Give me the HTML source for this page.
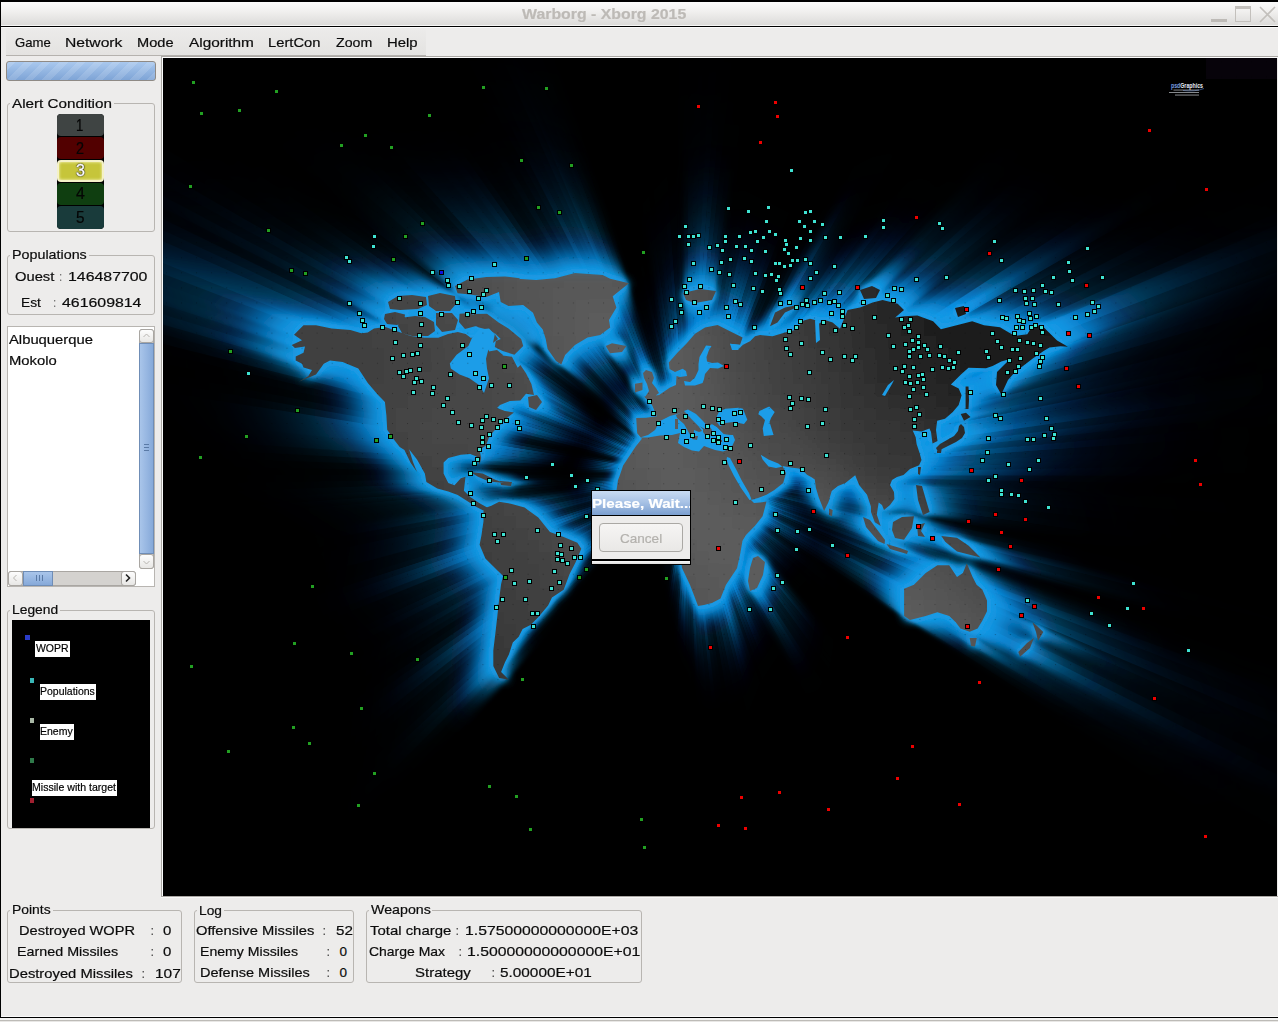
<!DOCTYPE html><html><head><meta charset="utf-8"><style>
html,body{margin:0;padding:0}
body{width:1278px;height:1022px;overflow:hidden;position:relative;background:#edeceb;font-family:"Liberation Sans",sans-serif}
.t{position:absolute;white-space:pre;line-height:1;transform-origin:0 0;-webkit-text-stroke:0.2px currentColor}
</style></head><body>
<div style="position:absolute;left:0px;top:0px;width:1278px;height:2px;background:#000"></div>
<div style="position:absolute;left:0px;top:0px;width:1px;height:1022px;background:#000"></div>
<div style="position:absolute;left:1px;top:2px;width:1277px;height:23px;background:linear-gradient(#fbfbfb,#f1f0ef 40%,#dcdbd9)"></div>
<div style="position:absolute;left:1px;top:25px;width:1277px;height:1px;background:#f6f6f5"></div>
<div style="position:absolute;left:1px;top:26px;width:1277px;height:1px;background:#000"></div>
<div style="position:absolute;left:1px;top:27px;width:1277px;height:1px;background:#fbfbfb"></div>
<div class="t" style="left:521.90px;top:7.45px;font-size:14px;color:#bdbab6;font-weight:bold;transform:scaleX(1.1331);">Warborg - Xborg 2015</div>
<div style="position:absolute;left:1211px;top:19px;width:16px;height:3px;background:#bdbab6"></div>
<div style="position:absolute;left:1235px;top:6px;width:16px;height:16px;box-sizing:border-box;border:1px solid #c3c0bc;border-top:3px solid #c3c0bc"></div>
<svg style="position:absolute;left:1259px;top:6px" width="17" height="17"><path d="M1 1L16 16M16 1L1 16" stroke="#c3c0bc" stroke-width="1.6"/></svg>
<div style="position:absolute;left:6px;top:28px;width:420px;height:27px;background:linear-gradient(#ecebea,#e4e3e1)"></div>
<div style="position:absolute;left:6px;top:55px;width:420px;height:1px;background:#b5b2ae"></div>
<div style="position:absolute;left:161px;top:56px;width:1117px;height:1px;background:#aba8a4"></div>
<div style="position:absolute;left:161px;top:56px;width:1px;height:841px;background:#aba8a4"></div>
<div style="position:absolute;left:162px;top:57px;width:1116px;height:1px;background:#fcfcfc"></div>
<div style="position:absolute;left:162px;top:57px;width:1px;height:839px;background:#fcfcfc"></div>
<div style="position:absolute;left:161px;top:896px;width:1117px;height:1px;background:#aba8a4"></div>
<div style="position:absolute;left:161px;top:897px;width:1117px;height:1px;background:#f8f8f7"></div>
<div class="t" style="left:14.60px;top:35.97px;font-size:13.5px;color:#0c0c0c;transform:scaleX(0.9714);">Game</div>
<div class="t" style="left:65.10px;top:35.97px;font-size:13.5px;color:#0c0c0c;transform:scaleX(1.1587);">Network</div>
<div class="t" style="left:136.90px;top:35.97px;font-size:13.5px;color:#0c0c0c;transform:scaleX(1.0815);">Mode</div>
<div class="t" style="left:188.50px;top:35.97px;font-size:13.5px;color:#0c0c0c;transform:scaleX(1.1386);">Algorithm</div>
<div class="t" style="left:268.30px;top:35.97px;font-size:13.5px;color:#0c0c0c;transform:scaleX(1.0917);">LertCon</div>
<div class="t" style="left:336.20px;top:35.97px;font-size:13.5px;color:#0c0c0c;transform:scaleX(1.0493);">Zoom</div>
<div class="t" style="left:386.90px;top:35.97px;font-size:13.5px;color:#0c0c0c;transform:scaleX(1.1027);">Help</div>
<div style="position:absolute;left:6px;top:61px;width:150px;height:20px;box-sizing:border-box;border:1px solid #8f8a85;border-radius:3px;background:repeating-linear-gradient(135deg,rgba(255,255,255,0.13) 0 6.2px,rgba(255,255,255,0) 6.2px 12.4px),linear-gradient(#a9c8ee,#7ea4d6)"></div>
<div style="position:absolute;left:6.5px;top:102.5px;width:148.5px;height:129.5px;box-sizing:border-box;border:1px solid #b8b5b1;border-radius:3px"></div>
<div style="position:absolute;left:9.7px;top:101.5px;width:103.89999999999999px;height:3px;background:#edeceb"></div>
<div class="t" style="left:11.70px;top:96.57px;font-size:13.5px;color:#0c0c0c;transform:scaleX(1.1288);">Alert Condition</div>
<div style="position:absolute;left:57px;top:113.5px;width:47px;height:115.5px;background:#000;border-radius:4px"></div>
<div style="position:absolute;left:57px;top:113.8px;width:47px;height:22.39999999999999px;background:#3f4443;border-radius:4px"></div>
<div class="t" style="left:76.40px;top:117.56px;font-size:16px;color:#050505;transform:scaleX(0.8225);">1</div>
<div style="position:absolute;left:57px;top:137.2px;width:47px;height:21.80000000000001px;background:#520000;border-radius:4px"></div>
<div class="t" style="left:76.40px;top:140.56px;font-size:16px;color:#050505;transform:scaleX(0.9014);">2</div>
<div style="position:absolute;left:57px;top:160.2px;width:47px;height:22.0px;box-sizing:border-box;background:#c6c53a;border:2px solid #f4f1c8;border-radius:4px;box-shadow:inset 0 0 3px #fffbd0"></div>
<div class="t" style="left:76.00px;top:163.06px;font-size:16px;color:#fff;transform:scaleX(1.0028);text-shadow:0 0 1px #000,0 0 1px #000,0 0 2px #000;-webkit-text-stroke:0.3px #fff;">3</div>
<div style="position:absolute;left:57px;top:183.2px;width:47px;height:21.5px;background:#0f3e10;border-radius:4px"></div>
<div class="t" style="left:75.60px;top:185.86px;font-size:16px;color:#050505;transform:scaleX(0.9915);">4</div>
<div style="position:absolute;left:57px;top:205.7px;width:47px;height:23.0px;background:#193b3b;border-radius:4px"></div>
<div class="t" style="left:76.40px;top:210.06px;font-size:16px;color:#050505;transform:scaleX(0.9577);">5</div>
<div style="position:absolute;left:6.5px;top:254.5px;width:148px;height:60px;box-sizing:border-box;border:1px solid #b8b5b1;border-radius:3px"></div>
<div style="position:absolute;left:10.3px;top:253.5px;width:78.7px;height:3px;background:#edeceb"></div>
<div class="t" style="left:12.30px;top:247.77px;font-size:13.5px;color:#0c0c0c;transform:scaleX(1.0596);">Populations</div>
<div class="t" style="left:14.80px;top:270.37px;font-size:13.5px;color:#0c0c0c;transform:scaleX(1.0917);">Ouest</div>
<div class="t" style="left:59.60px;top:270.37px;font-size:13.5px;color:#0c0c0c;transform:scaleX(0.4267);">:</div>
<div class="t" style="left:67.80px;top:270.37px;font-size:13.5px;color:#0c0c0c;transform:scaleX(1.1756);">146487700</div>
<div class="t" style="left:20.50px;top:295.97px;font-size:13.5px;color:#0c0c0c;transform:scaleX(1.0205);">Est</div>
<div class="t" style="left:54.10px;top:295.97px;font-size:13.5px;color:#0c0c0c;transform:scaleX(0.4267);">:</div>
<div class="t" style="left:61.60px;top:295.97px;font-size:13.5px;color:#0c0c0c;transform:scaleX(1.1756);">461609814</div>
<div style="position:absolute;left:6.5px;top:326px;width:148px;height:261px;box-sizing:border-box;border:1px solid #b8b5b1;background:#fff"></div>
<div class="t" style="left:8.50px;top:332.97px;font-size:13.5px;color:#0c0c0c;transform:scaleX(1.0962);">Albuquerque</div>
<div class="t" style="left:8.50px;top:354.17px;font-size:13.5px;color:#0c0c0c;transform:scaleX(1.0966);">Mokolo</div>
<div style="position:absolute;left:139px;top:328.5px;width:15px;height:240px;box-sizing:border-box;border:1px solid #a9a6a2;border-radius:3px;background:#d4d2cf"></div>
<div style="position:absolute;left:139px;top:328.5px;width:15px;height:14px;box-sizing:border-box;border:1px solid #a9a6a2;border-radius:3px;background:linear-gradient(#fdfdfd,#e8e7e5)"></div>
<div style="position:absolute;left:139px;top:554px;width:15px;height:14.5px;box-sizing:border-box;border:1px solid #a9a6a2;border-radius:3px;background:linear-gradient(#fdfdfd,#e8e7e5)"></div>
<div style="position:absolute;left:139px;top:342.5px;width:15px;height:211.5px;box-sizing:border-box;border:1px solid #6f8db6;background:linear-gradient(90deg,#a9c5ea,#86a9d9)"></div>
<svg style="position:absolute;left:139px;top:328px" width="15" height="241"><path d="M4.5 9L7.5 6L10.5 9" stroke="#b9b6b2" fill="none" stroke-width="1"/><path d="M4.5 233L7.5 236L10.5 233" stroke="#b9b6b2" fill="none" stroke-width="1"/><path d="M5 116.5H10M5 119.5H10M5 122.5H10" stroke="#5a7aa6" stroke-width="1"/></svg>
<div style="position:absolute;left:8px;top:570.5px;width:128px;height:15.5px;box-sizing:border-box;border:1px solid #a9a6a2;border-radius:3px;background:#d4d2cf"></div>
<div style="position:absolute;left:8px;top:570.5px;width:14.5px;height:15.5px;box-sizing:border-box;border:1px solid #a9a6a2;border-radius:3px;background:linear-gradient(#fdfdfd,#e8e7e5)"></div>
<div style="position:absolute;left:121px;top:570.5px;width:15px;height:15.5px;box-sizing:border-box;border:1px solid #a9a6a2;border-radius:3px;background:linear-gradient(#fdfdfd,#e8e7e5)"></div>
<div style="position:absolute;left:22.5px;top:570.5px;width:30px;height:15.5px;box-sizing:border-box;border:1px solid #6f8db6;background:linear-gradient(#a9c5ea,#86a9d9)"></div>
<svg style="position:absolute;left:8px;top:570px" width="128" height="16"><path d="M8.5 5L5.5 8L8.5 11" stroke="#b9b6b2" fill="none" stroke-width="1"/><path d="M118 4.5L121.5 8L118 11.5" stroke="#222" fill="none" stroke-width="1.6"/><path d="M28.5 5V11M31.5 5V11M34.5 5V11" stroke="#5a7aa6" stroke-width="1"/></svg>
<div style="position:absolute;left:6.5px;top:609.5px;width:148px;height:219px;box-sizing:border-box;border:1px solid #b8b5b1;border-radius:3px"></div>
<div style="position:absolute;left:10.3px;top:608.5px;width:50.099999999999994px;height:3px;background:#edeceb"></div>
<div class="t" style="left:12.30px;top:603.37px;font-size:13.5px;color:#0c0c0c;transform:scaleX(1.0244);">Legend</div>
<div style="position:absolute;left:12px;top:619.5px;width:138px;height:208px;background:#000"></div>
<div style="position:absolute;left:25px;top:635px;width:4.5px;height:4.5px;background:#2a3cc8"></div>
<div style="position:absolute;left:35px;top:640.5px;width:34.5px;height:16px;background:#fff"></div>
<div class="t" style="left:36.00px;top:643.47px;font-size:11.5px;color:#000;transform:scaleX(0.9091);">WOPR</div>
<div style="position:absolute;left:29.5px;top:678px;width:4px;height:4.5px;background:#3ab7b7"></div>
<div style="position:absolute;left:39.5px;top:683.5px;width:56px;height:16px;background:#fff"></div>
<div class="t" style="left:40.20px;top:686.47px;font-size:11.5px;color:#000;transform:scaleX(0.9114);">Populations</div>
<div style="position:absolute;left:29.5px;top:718px;width:4px;height:4.5px;background:#a9b8a6"></div>
<div style="position:absolute;left:39.5px;top:723.5px;width:34px;height:16px;background:#fff"></div>
<div class="t" style="left:40.20px;top:726.47px;font-size:11.5px;color:#000;transform:scaleX(0.9119);">Enemy</div>
<div style="position:absolute;left:29.5px;top:758px;width:4px;height:4.5px;background:#2f7a4a"></div>
<div style="position:absolute;left:31.5px;top:779.5px;width:85px;height:16px;background:#fff"></div>
<div class="t" style="left:32.00px;top:782.47px;font-size:11.5px;color:#000;transform:scaleX(0.9193);">Missile with target</div>
<div style="position:absolute;left:29.5px;top:798px;width:4px;height:4.5px;background:#a02030"></div>
<div style="position:absolute;left:1px;top:1016px;width:1277px;height:1px;background:#fafafa"></div>
<div style="position:absolute;left:0px;top:1017px;width:1278px;height:1px;background:#000"></div>
<div style="position:absolute;left:0px;top:1018px;width:1278px;height:2px;background:#f4f4f3"></div>
<div style="position:absolute;left:0px;top:1020px;width:1278px;height:1px;background:#bdbbb7"></div>
<div style="position:absolute;left:0px;top:1021px;width:1278px;height:1px;background:#e8e7e5"></div>
<div style="position:absolute;left:6.5px;top:909.5px;width:175px;height:73px;box-sizing:border-box;border:1px solid #b8b5b1;border-radius:3px"></div>
<div style="position:absolute;left:10.4px;top:908.5px;width:42.6px;height:3px;background:#edeceb"></div>
<div class="t" style="left:12.40px;top:903.17px;font-size:13.5px;color:#0c0c0c;transform:scaleX(1.0293);">Points</div>
<div class="t" style="left:18.50px;top:923.77px;font-size:13.5px;color:#0c0c0c;transform:scaleX(1.0807);">Destroyed WOPR</div>
<div class="t" style="left:151.30px;top:923.77px;font-size:13.5px;color:#0c0c0c;transform:scaleX(0.6400);">:</div>
<div class="t" style="left:163.20px;top:923.77px;font-size:13.5px;color:#0c0c0c;transform:scaleX(1.1067);">0</div>
<div class="t" style="left:17.10px;top:945.17px;font-size:13.5px;color:#0c0c0c;transform:scaleX(1.0604);">Earned Missiles</div>
<div class="t" style="left:151.30px;top:945.17px;font-size:13.5px;color:#0c0c0c;transform:scaleX(0.6400);">:</div>
<div class="t" style="left:163.20px;top:945.17px;font-size:13.5px;color:#0c0c0c;transform:scaleX(1.1067);">0</div>
<div class="t" style="left:9.20px;top:966.57px;font-size:13.5px;color:#0c0c0c;transform:scaleX(1.0940);">Destroyed Missiles</div>
<div class="t" style="left:142.40px;top:966.57px;font-size:13.5px;color:#0c0c0c;transform:scaleX(0.6400);">:</div>
<div class="t" style="left:154.50px;top:966.57px;font-size:13.5px;color:#0c0c0c;transform:scaleX(1.1422);">107</div>
<div style="position:absolute;left:193.5px;top:909.5px;width:160px;height:73px;box-sizing:border-box;border:1px solid #b8b5b1;border-radius:3px"></div>
<div style="position:absolute;left:196.8px;top:908.5px;width:26.899999999999977px;height:3px;background:#edeceb"></div>
<div class="t" style="left:198.80px;top:903.57px;font-size:13.5px;color:#0c0c0c;transform:scaleX(1.0178);">Log</div>
<div class="t" style="left:196.00px;top:924.07px;font-size:13.5px;color:#0c0c0c;transform:scaleX(1.0903);">Offensive Missiles</div>
<div class="t" style="left:323.20px;top:924.07px;font-size:13.5px;color:#0c0c0c;transform:scaleX(0.6400);">:</div>
<div class="t" style="left:335.50px;top:924.07px;font-size:13.5px;color:#0c0c0c;transform:scaleX(1.1267);">52</div>
<div class="t" style="left:200.30px;top:944.97px;font-size:13.5px;color:#0c0c0c;transform:scaleX(1.0453);">Enemy Missiles</div>
<div class="t" style="left:327.40px;top:944.97px;font-size:13.5px;color:#0c0c0c;transform:scaleX(0.6400);">:</div>
<div class="t" style="left:339.60px;top:944.97px;font-size:13.5px;color:#0c0c0c;transform:scaleX(1.0000);">0</div>
<div class="t" style="left:200.30px;top:965.97px;font-size:13.5px;color:#0c0c0c;transform:scaleX(1.0755);">Defense Missiles</div>
<div class="t" style="left:327.40px;top:965.97px;font-size:13.5px;color:#0c0c0c;transform:scaleX(0.6400);">:</div>
<div class="t" style="left:339.60px;top:965.97px;font-size:13.5px;color:#0c0c0c;transform:scaleX(1.0000);">0</div>
<div style="position:absolute;left:365.5px;top:909.5px;width:276px;height:73px;box-sizing:border-box;border:1px solid #b8b5b1;border-radius:3px"></div>
<div style="position:absolute;left:368.6px;top:908.5px;width:63.799999999999955px;height:3px;background:#edeceb"></div>
<div class="t" style="left:370.60px;top:903.47px;font-size:13.5px;color:#0c0c0c;transform:scaleX(1.0537);">Weapons</div>
<div class="t" style="left:369.90px;top:924.17px;font-size:13.5px;color:#0c0c0c;transform:scaleX(1.1048);">Total charge</div>
<div class="t" style="left:456.40px;top:924.17px;font-size:13.5px;color:#0c0c0c;transform:scaleX(0.6400);">:</div>
<div class="t" style="left:464.50px;top:924.17px;font-size:13.5px;color:#0c0c0c;transform:scaleX(1.1683);">1.57500000000000E+03</div>
<div class="t" style="left:368.50px;top:944.87px;font-size:13.5px;color:#0c0c0c;transform:scaleX(1.0340);">Charge Max</div>
<div class="t" style="left:458.80px;top:944.87px;font-size:13.5px;color:#0c0c0c;transform:scaleX(0.6400);">:</div>
<div class="t" style="left:466.80px;top:944.87px;font-size:13.5px;color:#0c0c0c;transform:scaleX(1.1683);">1.50000000000000E+01</div>
<div class="t" style="left:414.50px;top:965.77px;font-size:13.5px;color:#0c0c0c;transform:scaleX(1.1104);">Strategy</div>
<div class="t" style="left:491.60px;top:965.77px;font-size:13.5px;color:#0c0c0c;transform:scaleX(0.6400);">:</div>
<div class="t" style="left:500.10px;top:965.77px;font-size:13.5px;color:#0c0c0c;transform:scaleX(1.1368);">5.00000E+01</div>
<svg style="position:absolute;left:163px;top:58px" width="1114" height="838" viewBox="163 58 1114 838">
<defs>
<path id="L" d="M303.5,325.3 316.0,325.3 331.7,328.5 350.4,330.0 361.4,333.2 367.7,332.4 374.0,328.5 385.4,327.1 399.1,332.0 410.9,335.9 424.6,337.8 438.3,337.8 448.0,334.0 457.8,332.0 465.7,334.0 471.0,338.0 478.0,334.0 485.0,331.0 494.0,333.0 498.0,339.0 489.0,346.0 489.0,356.7 501.0,355.3 512.0,356.7 517.7,367.7 520.4,365.0 526.0,373.2 531.4,384.1 534.0,395.0 526.0,393.7 520.4,400.5 510.0,401.0 500.0,405.0 497.0,408.0 505.0,411.0 514.0,412.5 507.8,417.2 500.0,425.0 493.7,431.3 489.0,437.6 485.9,445.4 479.6,450.1 481.2,457.9 479.6,465.0 476.5,456.4 470.2,454.0 460.8,454.8 448.3,457.9 443.6,462.6 443.6,473.6 448.3,483.0 454.5,485.3 460.8,478.3 465.5,476.7 463.9,490.8 470.2,497.0 479.6,503.3 489.0,508.5 492.0,507.0 493.0,511.0 484.3,511.0 476.5,507.0 467.1,501.0 457.7,495.0 448.3,491.5 437.3,488.5 426.4,482.0 424.8,473.6 417.0,459.5 409.1,449.3 413.0,462.0 417.0,472.0 410.7,463.0 404.4,450.1 399.7,447.0 393.5,439.1 387.2,429.7 386.4,415.7 384.9,402.0 377.6,394.6 367.8,382.9 358.3,368.4 342.6,362.1 330.0,360.5 323.8,363.7 316.0,374.6 298.8,381.7 308.2,376.2 312.0,370.0 303.5,367.6 302.0,363.7 295.7,360.5 295.7,356.6 303.5,352.7 305.0,346.5 294.9,348.0 291.7,344.9 302.0,340.2 294.0,334.7ZM385.0,314.0 395.0,312.0 405.0,314.5 404.0,322.0 397.0,325.0 387.0,324.0 384.0,319.0ZM400.0,318.0 415.0,316.0 425.0,317.0 434.0,322.0 435.0,331.0 428.0,336.0 412.0,336.0 402.0,333.0 398.0,326.0ZM388.0,302.0 398.0,296.0 412.0,295.0 426.0,297.0 427.0,305.0 418.0,309.0 400.0,310.0 390.0,309.0ZM474.0,314.0 487.0,313.7 498.7,322.5 508.5,328.4 521.2,339.1 523.2,346.0 514.4,354.8 502.6,350.9 494.8,347.0 495.8,341.1 500.7,339.1 494.8,333.3 487.0,329.4 479.0,327.4 472.3,324.5 469.4,319.6ZM455.0,286.0 467.6,279.5 486.4,277.0 505.0,276.4 520.0,278.3 511.4,287.0 499.0,292.0 486.4,297.0 470.0,294.5 457.6,293.3ZM501.0,281.0 520.5,279.0 536.0,280.0 555.0,278.2 575.0,273.0 602.7,275.0 610.2,278.8 629.0,283.2 612.7,296.3 616.4,307.6 609.0,320.1 610.2,327.6 600.2,335.1 587.6,337.6 575.0,345.1 565.1,355.1 561.3,364.5 556.0,361.0 547.6,349.0 545.7,339.1 542.7,329.4 536.9,322.5 533.0,312.7 523.2,304.9 508.5,305.9 500.7,302.0 499.0,292.0ZM428.0,296.0 440.0,293.0 455.0,296.0 456.0,304.0 450.0,311.0 436.0,311.0 429.0,306.0ZM459.6,313.7 470.0,313.0 479.0,318.0 476.0,326.0 465.0,329.0 459.0,322.0ZM436.0,313.0 452.0,313.0 458.0,320.0 455.0,330.0 442.0,332.0 436.0,325.0ZM486.0,352.0 497.0,350.0 503.0,355.0 499.0,360.0 488.0,359.0ZM605.8,346.0 612.0,343.3 626.4,346.0 622.0,352.0 610.0,353.3ZM528.0,397.0 537.0,395.0 542.0,402.0 536.0,410.0 529.0,407.0ZM470.2,472.0 482.7,473.6 495.2,479.8 504.6,483.0 489.0,481.4 478.0,476.7ZM500.0,481.0 512.0,482.0 511.0,486.0 501.0,485.0ZM483.5,508.6 491.3,505.7 499.1,501.7 510.9,503.7 524.6,507.6 538.3,517.4 546.1,527.2 550.0,532.1 563.7,537.0 577.4,542.8 581.3,548.7 575.5,562.4 569.6,574.1 563.7,589.8 552.0,597.6 548.1,605.5 538.3,617.2 530.5,625.0 522.6,628.9 518.7,636.8 512.8,642.6 508.9,654.4 505.0,662.2 501.1,672.0 508.9,679.8 499.1,677.9 493.3,666.1 493.3,650.5 495.2,634.8 497.2,617.2 499.1,599.6 501.1,583.9 503.1,576.1 495.2,568.3 485.4,558.5 479.6,544.8 481.5,535.0 483.5,521.3ZM637.2,433.3 636.2,418.0 646.0,417.7 656.8,416.2 652.0,405.0 644.0,396.6 652.0,396.0 659.1,395.0 670.0,387.6 676.0,385.0 676.5,376.0 680.0,377.0 687.0,376.0 686.0,371.0 682.6,368.8 675.0,372.0 669.5,369.0 668.8,362.6 677.6,352.5 686.3,343.8 695.0,333.8 705.0,327.5 717.6,325.0 730.0,331.3 742.6,337.5 740.0,345.0 730.0,343.8 734.0,348.8 742.6,345.0 750.0,341.3 755.0,336.3 760.0,335.0 772.5,336.3 785.0,332.6 795.0,330.0 803.8,320.5 810.0,318.8 815.0,320.0 818.8,323.8 825.0,320.0 832.6,322.6 840.0,328.8 847.6,310.0 860.0,307.5 872.6,302.5 882.6,300.0 897.7,303.8 904.0,310.0 895.2,317.5 904.0,316.3 917.4,315.5 933.1,321.3 940.9,329.2 956.6,325.2 972.2,321.3 984.0,325.2 1000.0,327.2 1003.8,329.6 1014.8,335.9 1027.3,334.3 1032.0,326.5 1041.4,324.9 1049.2,332.7 1057.1,340.5 1068.0,346.8 1060.5,346.3 1049.5,347.4 1044.0,350.7 1033.1,358.3 1023.0,366.0 1015.0,372.0 1008.0,380.0 1001.3,394.5 996.0,385.0 997.0,372.0 1005.0,364.0 1010.0,359.0 1001.3,361.6 992.6,366.0 986.0,368.2 968.5,367.8 960.7,374.7 950.9,384.5 958.7,388.4 961.6,395.2 958.7,405.0 952.8,411.9 945.0,418.7 937.2,420.7 936.0,430.0 937.5,441.0 932.5,443.5 931.0,432.0 929.4,428.5 921.5,431.4 912.7,430.5 915.7,437.3 916.6,444.1 919.6,453.0 921.5,460.0 919.1,465.2 910.0,469.0 903.5,475.0 897.0,477.0 892.0,480.0 890.0,485.0 894.0,492.0 894.4,499.0 890.0,505.0 884.0,510.0 882.0,505.0 878.7,502.6 876.8,514.4 880.7,526.1 874.8,522.2 871.0,512.0 870.9,506.5 867.0,494.8 859.1,485.0 855.2,475.2 845.4,483.0 838.0,486.0 831.7,490.9 828.5,502.1 824.1,510.9 818.7,497.2 815.8,487.4 814.8,479.6 811.9,477.6 807.0,474.7 801.1,468.8 792.3,467.8 782.5,466.0 786.0,473.3 783.2,483.0 774.4,490.0 766.5,494.8 758.0,498.0 751.0,500.0 754.0,503.0 760.0,502.5 766.5,501.6 762.6,516.3 754.8,526.1 746.0,535.0 742.5,540.8 740.0,555.0 737.0,568.2 726.0,584.7 720.5,598.4 712.0,603.0 704.0,605.0 698.0,606.0 695.0,598.0 690.0,585.0 682.0,568.0 680.0,553.0 675.0,540.0 674.0,531.0 672.0,521.0 660.0,522.0 648.0,520.0 635.0,515.0 625.0,505.0 616.0,494.0 618.0,480.0 620.0,474.8 623.1,465.4 629.4,456.0 635.7,446.6 641.9,438.8ZM646.0,370.0 652.0,372.0 654.0,378.0 652.0,383.0 656.0,388.0 659.0,393.0 655.0,396.0 645.0,397.0 649.0,391.0 647.0,384.0 644.0,378.0 643.0,373.0ZM635.0,383.8 642.5,382.6 642.5,390.0 635.0,392.6ZM683.0,293.0 700.0,289.0 716.0,291.0 712.0,300.0 695.0,303.0 686.0,300.0ZM770.0,326.3 775.0,312.6 785.0,307.5 797.5,305.0 796.3,307.5 785.0,312.6 777.5,322.6ZM860.0,290.0 872.0,286.0 880.0,290.0 876.0,298.0 864.0,299.0ZM955.0,308.0 964.0,306.0 966.0,314.0 958.0,317.0ZM965.6,386.4 968.5,386.4 969.0,400.0 968.5,409.0 965.6,409.0ZM960.7,414.0 966.0,412.8 970.5,417.0 964.0,420.7ZM961.0,424.0 964.0,427.0 965.0,433.0 962.0,438.0 956.0,442.0 948.0,446.0 942.0,449.0 938.0,452.0 936.0,448.0 940.0,444.0 947.0,440.0 954.0,436.0 958.0,431.0 959.0,426.0ZM937.0,447.0 942.0,447.0 941.0,453.0 937.0,453.0ZM918.0,467.0 921.0,467.0 920.0,475.0 918.0,474.0ZM829.0,508.5 832.7,510.0 832.0,516.3 829.0,515.0ZM753.0,558.0 758.0,556.0 765.0,562.0 763.0,575.0 757.0,588.0 750.0,591.0 748.0,581.0 750.0,568.0ZM863.0,517.0 870.0,520.0 885.0,540.0 884.6,544.0 878.0,541.0 866.0,527.0ZM886.5,544.0 900.0,548.0 908.0,551.0 907.0,554.0 890.0,549.0ZM893.0,522.0 902.0,517.0 914.0,516.3 912.0,528.0 904.0,539.8 895.0,538.0 892.0,530.0ZM917.0,525.0 925.0,523.0 921.0,531.0 925.0,537.0 918.0,536.0ZM916.0,485.0 922.0,486.0 926.0,500.0 929.6,512.0 923.0,515.0 918.0,500.0ZM941.3,535.9 957.0,537.8 968.7,545.7 980.5,557.4 964.8,553.5 957.0,551.5 945.2,541.8ZM904.1,588.7 904.1,616.1 910.0,620.0 925.7,616.1 937.4,612.2 949.2,616.1 955.7,622.3 960.4,628.5 969.7,631.7 977.6,628.5 982.3,620.7 987.0,611.3 987.0,600.4 982.3,589.4 976.6,584.8 972.6,577.0 966.8,563.3 962.9,573.1 957.0,577.0 949.2,565.2 937.4,565.2 925.7,573.1 913.9,584.8ZM969.7,637.9 976.8,638.0 975.0,646.5 971.0,646.0ZM1032.4,622.3 1036.0,625.0 1043.3,632.0 1038.0,641.0 1036.0,632.0ZM1033.9,638.0 1030.0,648.0 1020.0,656.7 1018.3,652.0 1027.0,643.0Z"/>
<path id="LT" d="M676.0,415.0 683.8,411.5 691.5,419.0 698.0,425.5 702.0,431.0 699.0,432.0 694.0,430.0 693.7,434.5 692.0,438.0 689.0,433.0 684.0,424.0 677.0,418.0ZM703.0,426.0 708.0,424.0 712.0,430.0 710.0,437.0 706.0,436.0 703.0,432.0ZM692.0,436.0 698.0,436.0 697.0,440.0 692.0,439.0ZM675.0,419.0 678.0,419.0 678.0,429.0 675.0,429.0ZM714.0,440.0 722.0,440.0 722.0,442.0 714.0,442.0ZM712.0,424.0 717.0,424.0 724.0,431.0 733.0,432.0 735.0,433.0 733.0,435.0 724.0,434.0 717.0,427.0Z"/>
<filter id="gN" x="-50%" y="-50%" width="200%" height="200%"><feGaussianBlur stdDeviation="1.5"/></filter>
<filter id="gS" x="-50%" y="-50%" width="200%" height="200%"><feGaussianBlur stdDeviation="2.5"/></filter>
<filter id="gBm" x="-50%" y="-50%" width="200%" height="200%"><feGaussianBlur stdDeviation="3"/></filter>
<radialGradient id="lg" gradientUnits="userSpaceOnUse" cx="0" cy="0" r="1" gradientTransform="translate(690,470) rotate(26) scale(470,250)"><stop offset="0" stop-color="#5d5d5d"/><stop offset="0.45" stop-color="#575757"/><stop offset="0.8" stop-color="#3c3c3c"/><stop offset="1" stop-color="#1c1c1c"/></radialGradient>
<filter id="gI" x="-20%" y="-20%" width="140%" height="140%"><feGaussianBlur stdDeviation="5"/><feComponentTransfer><feFuncA type="linear" slope="2.0"/></feComponentTransfer></filter>
<mask id="beams" maskUnits="userSpaceOnUse" x="163" y="58" width="1114" height="838">
<path d="M688,475L2288,475L2288,506Z" fill="rgb(133,133,133)"/>
<path d="M688,475L2288,503L2287,534Z" fill="rgb(99,99,99)"/>
<path d="M688,475L2287,531L2286,562Z" fill="rgb(105,105,105)"/>
<path d="M688,475L2286,559L2284,589Z" fill="rgb(84,84,84)"/>
<path d="M688,475L2284,587L2282,617Z" fill="rgb(95,95,95)"/>
<path d="M688,475L2282,614L2279,645Z" fill="rgb(78,78,78)"/>
<path d="M688,475L2279,642L2276,673Z" fill="rgb(65,65,65)"/>
<path d="M688,475L2276,670L2272,700Z" fill="rgb(76,76,76)"/>
<path d="M688,475L2272,698L2268,728Z" fill="rgb(57,57,57)"/>
<path d="M688,475L2268,725L2263,756Z" fill="rgb(63,63,63)"/>
<path d="M688,475L2264,753L2258,783Z" fill="rgb(45,45,45)"/>
<path d="M688,475L2259,780L2252,810Z" fill="rgb(71,71,71)"/>
<path d="M688,475L2253,808L2246,838Z" fill="rgb(103,103,103)"/>
<path d="M688,475L2247,835L2240,865Z" fill="rgb(142,142,142)"/>
<path d="M688,475L2240,862L2233,892Z" fill="rgb(102,102,102)"/>
<path d="M688,475L2233,889L2225,919Z" fill="rgb(120,120,120)"/>
<path d="M688,475L2226,916L2217,945Z" fill="rgb(167,167,167)"/>
<path d="M688,475L2218,943L2209,972Z" fill="rgb(218,218,218)"/>
<path d="M688,475L2210,969L2200,999Z" fill="rgb(203,203,203)"/>
<path d="M688,475L2201,996L2191,1025Z" fill="rgb(176,176,176)"/>
<path d="M688,475L2192,1022L2181,1051Z" fill="rgb(213,213,213)"/>
<path d="M688,475L2182,1048L2170,1077Z" fill="rgb(155,155,155)"/>
<path d="M688,475L2171,1074L2160,1103Z" fill="rgb(173,173,173)"/>
<path d="M688,475L2161,1100L2149,1128Z" fill="rgb(93,93,93)"/>
<path d="M688,475L2150,1126L2137,1154Z" fill="rgb(64,64,64)"/>
<path d="M688,475L2138,1151L2125,1179Z" fill="rgb(62,62,62)"/>
<path d="M688,475L2126,1176L2112,1204Z" fill="rgb(91,91,91)"/>
<path d="M688,475L2114,1201L2099,1229Z" fill="rgb(146,146,146)"/>
<path d="M688,475L2101,1226L2086,1253Z" fill="rgb(124,124,124)"/>
<path d="M688,475L2087,1251L2072,1277Z" fill="rgb(141,141,141)"/>
<path d="M688,475L2074,1275L2058,1301Z" fill="rgb(137,137,137)"/>
<path d="M688,475L2059,1299L2043,1325Z" fill="rgb(114,114,114)"/>
<path d="M688,475L2045,1323L2028,1349Z" fill="rgb(97,97,97)"/>
<path d="M688,475L2030,1346L2013,1372Z" fill="rgb(53,53,53)"/>
<path d="M688,475L2014,1370L1997,1395Z" fill="rgb(55,55,55)"/>
<path d="M688,475L1999,1393L1981,1418Z" fill="rgb(72,72,72)"/>
<path d="M688,475L1982,1415L1964,1440Z" fill="rgb(116,116,116)"/>
<path d="M688,475L1966,1438L1947,1462Z" fill="rgb(111,111,111)"/>
<path d="M688,475L1949,1460L1930,1484Z" fill="rgb(107,107,107)"/>
<path d="M688,475L1931,1482L1912,1506Z" fill="rgb(113,113,113)"/>
<path d="M688,475L1914,1503L1894,1527Z" fill="rgb(118,118,118)"/>
<path d="M688,475L1896,1525L1875,1548Z" fill="rgb(134,134,134)"/>
<path d="M688,475L1877,1546L1856,1568Z" fill="rgb(173,173,173)"/>
<path d="M688,475L1858,1566L1837,1588Z" fill="rgb(166,166,166)"/>
<path d="M688,475L1839,1586L1817,1608Z" fill="rgb(130,130,130)"/>
<path d="M688,475L1819,1606L1797,1628Z" fill="rgb(148,148,148)"/>
<path d="M688,475L1799,1626L1777,1647Z" fill="rgb(172,172,172)"/>
<path d="M688,475L1779,1645L1757,1666Z" fill="rgb(214,214,214)"/>
<path d="M688,475L1759,1664L1736,1684Z" fill="rgb(212,212,212)"/>
<path d="M688,475L1738,1683L1714,1702Z" fill="rgb(175,175,175)"/>
<path d="M688,475L1716,1701L1693,1720Z" fill="rgb(196,196,196)"/>
<path d="M688,475L1695,1718L1671,1738Z" fill="rgb(133,133,133)"/>
<path d="M688,475L1673,1736L1649,1754Z" fill="rgb(131,131,131)"/>
<path d="M688,475L1651,1753L1626,1771Z" fill="rgb(135,135,135)"/>
<path d="M688,475L1628,1769L1603,1787Z" fill="rgb(95,95,95)"/>
<path d="M688,475L1606,1786L1580,1803Z" fill="rgb(101,101,101)"/>
<path d="M688,475L1583,1801L1557,1818Z" fill="rgb(98,98,98)"/>
<path d="M688,475L1559,1817L1534,1833Z" fill="rgb(157,157,157)"/>
<path d="M688,475L1536,1832L1510,1848Z" fill="rgb(199,199,199)"/>
<path d="M688,475L1512,1846L1486,1862Z" fill="rgb(196,196,196)"/>
<path d="M688,475L1488,1861L1461,1876Z" fill="rgb(210,210,210)"/>
<path d="M688,475L1464,1874L1437,1889Z" fill="rgb(159,159,159)"/>
<path d="M688,475L1439,1888L1412,1902Z" fill="rgb(174,174,174)"/>
<path d="M688,475L1414,1901L1387,1914Z" fill="rgb(154,154,154)"/>
<path d="M688,475L1389,1913L1362,1926Z" fill="rgb(165,165,165)"/>
<path d="M688,475L1364,1925L1336,1938Z" fill="rgb(181,181,181)"/>
<path d="M688,475L1339,1937L1311,1949Z" fill="rgb(231,231,231)"/>
<path d="M688,475L1313,1948L1285,1960Z" fill="rgb(248,248,248)"/>
<path d="M688,475L1287,1958L1259,1970Z" fill="rgb(184,184,184)"/>
<path d="M688,475L1261,1969L1233,1979Z" fill="rgb(160,160,160)"/>
<path d="M688,475L1235,1979L1206,1989Z" fill="rgb(119,119,119)"/>
<path d="M688,475L1209,1988L1180,1998Z" fill="rgb(182,182,182)"/>
<path d="M688,475L1182,1997L1153,2006Z" fill="rgb(221,221,221)"/>
<path d="M688,475L1156,2005L1126,2014Z" fill="rgb(255,255,255)"/>
<path d="M688,475L1129,2013L1099,2021Z" fill="rgb(223,223,223)"/>
<path d="M688,475L1102,2020L1072,2028Z" fill="rgb(151,151,151)"/>
<path d="M688,475L1075,2027L1045,2035Z" fill="rgb(113,113,113)"/>
<path d="M688,475L1048,2034L1018,2041Z" fill="rgb(115,115,115)"/>
<path d="M688,475L1021,2040L991,2046Z" fill="rgb(80,80,80)"/>
<path d="M688,475L993,2046L963,2051Z" fill="rgb(76,76,76)"/>
<path d="M688,475L966,2051L936,2056Z" fill="rgb(44,44,44)"/>
<path d="M688,475L938,2055L908,2060Z" fill="rgb(57,57,57)"/>
<path d="M688,475L911,2059L880,2063Z" fill="rgb(69,69,69)"/>
<path d="M688,475L883,2063L852,2067Z" fill="rgb(115,115,115)"/>
<path d="M688,475L855,2066L825,2069Z" fill="rgb(80,80,80)"/>
<path d="M688,475L827,2069L797,2071Z" fill="rgb(97,97,97)"/>
<path d="M688,475L800,2071L769,2073Z" fill="rgb(109,109,109)"/>
<path d="M688,475L772,2073L741,2074Z" fill="rgb(158,158,158)"/>
<path d="M688,475L744,2074L713,2075Z" fill="rgb(113,113,113)"/>
<path d="M688,475L716,2075L685,2075Z" fill="rgb(136,136,136)"/>
<path d="M688,475L688,2075L657,2075Z" fill="rgb(169,169,169)"/>
<path d="M688,475L660,2075L629,2074Z" fill="rgb(247,247,247)"/>
<path d="M688,475L632,2074L601,2073Z" fill="rgb(250,250,250)"/>
<path d="M688,475L604,2073L574,2071Z" fill="rgb(225,225,225)"/>
<path d="M688,475L576,2071L546,2069Z" fill="rgb(135,135,135)"/>
<path d="M688,475L549,2069L518,2066Z" fill="rgb(124,124,124)"/>
<path d="M688,475L521,2066L490,2063Z" fill="rgb(152,152,152)"/>
<path d="M688,475L493,2063L463,2059Z" fill="rgb(222,222,222)"/>
<path d="M688,475L465,2059L435,2055Z" fill="rgb(221,221,221)"/>
<path d="M688,475L438,2055L407,2050Z" fill="rgb(126,126,126)"/>
<path d="M688,475L410,2051L380,2045Z" fill="rgb(69,69,69)"/>
<path d="M688,475L383,2046L353,2039Z" fill="rgb(49,49,49)"/>
<path d="M688,475L355,2040L325,2033Z" fill="rgb(70,70,70)"/>
<path d="M688,475L328,2034L298,2027Z" fill="rgb(97,97,97)"/>
<path d="M688,475L301,2027L271,2020Z" fill="rgb(104,104,104)"/>
<path d="M688,475L274,2020L244,2012Z" fill="rgb(77,77,77)"/>
<path d="M688,475L247,2013L218,2004Z" fill="rgb(60,60,60)"/>
<path d="M688,475L220,2005L191,1996Z" fill="rgb(77,77,77)"/>
<path d="M688,475L194,1997L164,1987Z" fill="rgb(117,117,117)"/>
<path d="M688,475L167,1988L138,1978Z" fill="rgb(176,176,176)"/>
<path d="M688,475L141,1979L112,1968Z" fill="rgb(232,232,232)"/>
<path d="M688,475L115,1969L86,1957Z" fill="rgb(210,210,210)"/>
<path d="M688,475L89,1958L60,1947Z" fill="rgb(182,182,182)"/>
<path d="M688,475L63,1948L35,1936Z" fill="rgb(157,157,157)"/>
<path d="M688,475L37,1937L9,1924Z" fill="rgb(162,162,162)"/>
<path d="M688,475L12,1925L-16,1912Z" fill="rgb(154,154,154)"/>
<path d="M688,475L-13,1913L-41,1899Z" fill="rgb(232,232,232)"/>
<path d="M688,475L-38,1901L-66,1886Z" fill="rgb(253,253,253)"/>
<path d="M688,475L-63,1888L-90,1873Z" fill="rgb(255,255,255)"/>
<path d="M688,475L-88,1874L-114,1859Z" fill="rgb(216,216,216)"/>
<path d="M688,475L-112,1861L-138,1845Z" fill="rgb(137,137,137)"/>
<path d="M688,475L-136,1846L-162,1830Z" fill="rgb(101,101,101)"/>
<path d="M688,475L-160,1832L-186,1815Z" fill="rgb(74,74,74)"/>
<path d="M688,475L-183,1817L-209,1800Z" fill="rgb(92,92,92)"/>
<path d="M688,475L-207,1801L-232,1784Z" fill="rgb(55,55,55)"/>
<path d="M688,475L-230,1786L-255,1768Z" fill="rgb(42,42,42)"/>
<path d="M688,475L-252,1769L-277,1751Z" fill="rgb(36,36,36)"/>
<path d="M688,475L-275,1753L-299,1734Z" fill="rgb(39,39,39)"/>
<path d="M688,475L-297,1736L-321,1717Z" fill="rgb(45,45,45)"/>
<path d="M688,475L-319,1718L-343,1699Z" fill="rgb(32,32,32)"/>
<path d="M688,475L-340,1701L-364,1681Z" fill="rgb(27,27,27)"/>
<path d="M688,475L-362,1683L-385,1662Z" fill="rgb(31,31,31)"/>
<path d="M688,475L-383,1664L-405,1643Z" fill="rgb(35,35,35)"/>
<path d="M688,475L-403,1645L-425,1624Z" fill="rgb(73,73,73)"/>
<path d="M688,475L-423,1626L-445,1604Z" fill="rgb(103,103,103)"/>
<path d="M688,475L-443,1606L-465,1584Z" fill="rgb(170,170,170)"/>
<path d="M688,475L-463,1586L-484,1564Z" fill="rgb(142,142,142)"/>
<path d="M688,475L-482,1566L-503,1544Z" fill="rgb(94,94,94)"/>
<path d="M688,475L-501,1546L-521,1523Z" fill="rgb(65,65,65)"/>
<path d="M688,475L-520,1525L-539,1501Z" fill="rgb(60,60,60)"/>
<path d="M688,475L-538,1503L-557,1480Z" fill="rgb(85,85,85)"/>
<path d="M688,475L-555,1482L-575,1458Z" fill="rgb(129,129,129)"/>
<path d="M688,475L-573,1460L-591,1436Z" fill="rgb(215,215,215)"/>
<path d="M688,475L-590,1438L-608,1413Z" fill="rgb(245,245,245)"/>
<path d="M688,475L-606,1415L-624,1390Z" fill="rgb(174,174,174)"/>
<path d="M688,475L-623,1393L-640,1367Z" fill="rgb(114,114,114)"/>
<path d="M688,475L-638,1370L-655,1344Z" fill="rgb(56,56,56)"/>
<path d="M688,475L-654,1346L-670,1321Z" fill="rgb(46,46,46)"/>
<path d="M688,475L-669,1323L-685,1297Z" fill="rgb(74,74,74)"/>
<path d="M688,475L-683,1299L-699,1273Z" fill="rgb(96,96,96)"/>
<path d="M688,475L-698,1275L-713,1248Z" fill="rgb(137,137,137)"/>
<path d="M688,475L-711,1251L-726,1224Z" fill="rgb(113,113,113)"/>
<path d="M688,475L-725,1226L-739,1199Z" fill="rgb(125,125,125)"/>
<path d="M688,475L-738,1201L-751,1174Z" fill="rgb(177,177,177)"/>
<path d="M688,475L-750,1176L-763,1149Z" fill="rgb(146,146,146)"/>
<path d="M688,475L-762,1151L-775,1123Z" fill="rgb(104,104,104)"/>
<path d="M688,475L-774,1126L-786,1098Z" fill="rgb(93,93,93)"/>
<path d="M688,475L-785,1100L-797,1072Z" fill="rgb(102,102,102)"/>
<path d="M688,475L-795,1074L-807,1046Z" fill="rgb(175,175,175)"/>
<path d="M688,475L-806,1048L-816,1020Z" fill="rgb(255,255,255)"/>
<path d="M688,475L-816,1022L-826,993Z" fill="rgb(253,253,253)"/>
<path d="M688,475L-825,996L-835,967Z" fill="rgb(198,198,198)"/>
<path d="M688,475L-834,969L-843,940Z" fill="rgb(111,111,111)"/>
<path d="M688,475L-842,943L-851,913Z" fill="rgb(94,94,94)"/>
<path d="M688,475L-850,916L-858,886Z" fill="rgb(97,97,97)"/>
<path d="M688,475L-857,889L-865,859Z" fill="rgb(165,165,165)"/>
<path d="M688,475L-864,862L-872,832Z" fill="rgb(164,164,164)"/>
<path d="M688,475L-871,835L-878,805Z" fill="rgb(170,170,170)"/>
<path d="M688,475L-877,808L-883,778Z" fill="rgb(126,126,126)"/>
<path d="M688,475L-883,780L-888,750Z" fill="rgb(147,147,147)"/>
<path d="M688,475L-888,753L-893,723Z" fill="rgb(226,226,226)"/>
<path d="M688,475L-892,725L-897,695Z" fill="rgb(255,255,255)"/>
<path d="M688,475L-896,698L-900,667Z" fill="rgb(255,255,255)"/>
<path d="M688,475L-900,670L-904,639Z" fill="rgb(255,255,255)"/>
<path d="M688,475L-903,642L-906,612Z" fill="rgb(241,241,241)"/>
<path d="M688,475L-906,614L-908,584Z" fill="rgb(195,195,195)"/>
<path d="M688,475L-908,587L-910,556Z" fill="rgb(124,124,124)"/>
<path d="M688,475L-910,559L-911,528Z" fill="rgb(101,101,101)"/>
<path d="M688,475L-911,531L-912,500Z" fill="rgb(66,66,66)"/>
<path d="M688,475L-912,503L-912,472Z" fill="rgb(45,45,45)"/>
<path d="M688,475L-912,475L-912,444Z" fill="rgb(35,35,35)"/>
<path d="M688,475L-912,447L-911,416Z" fill="rgb(59,59,59)"/>
<path d="M688,475L-911,419L-910,388Z" fill="rgb(110,110,110)"/>
<path d="M688,475L-910,391L-908,361Z" fill="rgb(179,179,179)"/>
<path d="M688,475L-908,363L-906,333Z" fill="rgb(243,243,243)"/>
<path d="M688,475L-906,336L-903,305Z" fill="rgb(239,239,239)"/>
<path d="M688,475L-903,308L-900,277Z" fill="rgb(255,255,255)"/>
<path d="M688,475L-900,280L-896,250Z" fill="rgb(255,255,255)"/>
<path d="M688,475L-896,252L-892,222Z" fill="rgb(255,255,255)"/>
<path d="M688,475L-892,225L-887,194Z" fill="rgb(152,152,152)"/>
<path d="M688,475L-888,197L-882,167Z" fill="rgb(80,80,80)"/>
<path d="M688,475L-883,170L-876,140Z" fill="rgb(45,45,45)"/>
<path d="M688,475L-877,142L-870,112Z" fill="rgb(54,54,54)"/>
<path d="M688,475L-871,115L-864,85Z" fill="rgb(95,95,95)"/>
<path d="M688,475L-864,88L-857,58Z" fill="rgb(174,174,174)"/>
<path d="M688,475L-857,61L-849,31Z" fill="rgb(235,235,235)"/>
<path d="M688,475L-850,34L-841,5Z" fill="rgb(237,237,237)"/>
<path d="M688,475L-842,7L-833,-22Z" fill="rgb(199,199,199)"/>
<path d="M688,475L-834,-19L-824,-49Z" fill="rgb(181,181,181)"/>
<path d="M688,475L-825,-46L-815,-75Z" fill="rgb(177,177,177)"/>
<path d="M688,475L-816,-72L-805,-101Z" fill="rgb(151,151,151)"/>
<path d="M688,475L-806,-98L-794,-127Z" fill="rgb(197,197,197)"/>
<path d="M688,475L-795,-124L-784,-153Z" fill="rgb(244,244,244)"/>
<path d="M688,475L-785,-150L-773,-178Z" fill="rgb(244,244,244)"/>
<path d="M688,475L-774,-176L-761,-204Z" fill="rgb(204,204,204)"/>
<path d="M688,475L-762,-201L-749,-229Z" fill="rgb(151,151,151)"/>
<path d="M688,475L-750,-226L-736,-254Z" fill="rgb(119,119,119)"/>
<path d="M688,475L-738,-251L-723,-279Z" fill="rgb(161,161,161)"/>
<path d="M688,475L-725,-276L-710,-303Z" fill="rgb(171,171,171)"/>
<path d="M688,475L-711,-301L-696,-327Z" fill="rgb(226,226,226)"/>
<path d="M688,475L-698,-325L-682,-351Z" fill="rgb(231,231,231)"/>
<path d="M688,475L-683,-349L-667,-375Z" fill="rgb(186,186,186)"/>
<path d="M688,475L-669,-373L-652,-399Z" fill="rgb(181,181,181)"/>
<path d="M688,475L-654,-396L-637,-422Z" fill="rgb(213,213,213)"/>
<path d="M688,475L-638,-420L-621,-445Z" fill="rgb(177,177,177)"/>
<path d="M688,475L-623,-443L-605,-468Z" fill="rgb(101,101,101)"/>
<path d="M688,475L-606,-465L-588,-490Z" fill="rgb(78,78,78)"/>
<path d="M688,475L-590,-488L-571,-512Z" fill="rgb(112,112,112)"/>
<path d="M688,475L-573,-510L-554,-534Z" fill="rgb(194,194,194)"/>
<path d="M688,475L-555,-532L-536,-556Z" fill="rgb(207,207,207)"/>
<path d="M688,475L-538,-553L-518,-577Z" fill="rgb(190,190,190)"/>
<path d="M688,475L-520,-575L-499,-598Z" fill="rgb(236,236,236)"/>
<path d="M688,475L-501,-596L-480,-618Z" fill="rgb(251,251,251)"/>
<path d="M688,475L-482,-616L-461,-638Z" fill="rgb(206,206,206)"/>
<path d="M688,475L-463,-636L-441,-658Z" fill="rgb(135,135,135)"/>
<path d="M688,475L-443,-656L-421,-678Z" fill="rgb(98,98,98)"/>
<path d="M688,475L-423,-676L-401,-697Z" fill="rgb(87,87,87)"/>
<path d="M688,475L-403,-695L-381,-716Z" fill="rgb(119,119,119)"/>
<path d="M688,475L-383,-714L-360,-734Z" fill="rgb(202,202,202)"/>
<path d="M688,475L-362,-733L-338,-752Z" fill="rgb(209,209,209)"/>
<path d="M688,475L-340,-751L-317,-770Z" fill="rgb(205,205,205)"/>
<path d="M688,475L-319,-768L-295,-788Z" fill="rgb(231,231,231)"/>
<path d="M688,475L-297,-786L-273,-804Z" fill="rgb(209,209,209)"/>
<path d="M688,475L-275,-803L-250,-821Z" fill="rgb(234,234,234)"/>
<path d="M688,475L-252,-819L-227,-837Z" fill="rgb(194,194,194)"/>
<path d="M688,475L-230,-836L-204,-853Z" fill="rgb(117,117,117)"/>
<path d="M688,475L-207,-851L-181,-868Z" fill="rgb(72,72,72)"/>
<path d="M688,475L-183,-867L-158,-883Z" fill="rgb(62,62,62)"/>
<path d="M688,475L-160,-882L-134,-898Z" fill="rgb(72,72,72)"/>
<path d="M688,475L-136,-896L-110,-912Z" fill="rgb(98,98,98)"/>
<path d="M688,475L-112,-911L-85,-926Z" fill="rgb(78,78,78)"/>
<path d="M688,475L-88,-924L-61,-939Z" fill="rgb(102,102,102)"/>
<path d="M688,475L-63,-938L-36,-952Z" fill="rgb(108,108,108)"/>
<path d="M688,475L-38,-951L-11,-964Z" fill="rgb(171,171,171)"/>
<path d="M688,475L-13,-963L14,-976Z" fill="rgb(135,135,135)"/>
<path d="M688,475L12,-975L40,-988Z" fill="rgb(154,154,154)"/>
<path d="M688,475L37,-987L65,-999Z" fill="rgb(165,165,165)"/>
<path d="M688,475L63,-998L91,-1010Z" fill="rgb(223,223,223)"/>
<path d="M688,475L89,-1008L117,-1020Z" fill="rgb(196,196,196)"/>
<path d="M688,475L115,-1019L143,-1029Z" fill="rgb(221,221,221)"/>
<path d="M688,475L141,-1029L170,-1039Z" fill="rgb(165,165,165)"/>
<path d="M688,475L167,-1038L196,-1048Z" fill="rgb(140,140,140)"/>
<path d="M688,475L194,-1047L223,-1056Z" fill="rgb(106,106,106)"/>
<path d="M688,475L220,-1055L250,-1064Z" fill="rgb(71,71,71)"/>
<path d="M688,475L247,-1063L277,-1071Z" fill="rgb(67,67,67)"/>
<path d="M688,475L274,-1070L304,-1078Z" fill="rgb(66,66,66)"/>
<path d="M688,475L301,-1077L331,-1085Z" fill="rgb(80,80,80)"/>
<path d="M688,475L328,-1084L358,-1091Z" fill="rgb(130,130,130)"/>
<path d="M688,475L355,-1090L385,-1096Z" fill="rgb(113,113,113)"/>
<path d="M688,475L383,-1096L413,-1101Z" fill="rgb(137,137,137)"/>
<path d="M688,475L410,-1101L440,-1106Z" fill="rgb(151,151,151)"/>
<path d="M688,475L438,-1105L468,-1110Z" fill="rgb(140,140,140)"/>
<path d="M688,475L465,-1109L496,-1113Z" fill="rgb(119,119,119)"/>
<path d="M688,475L493,-1113L524,-1117Z" fill="rgb(134,134,134)"/>
<path d="M688,475L521,-1116L551,-1119Z" fill="rgb(144,144,144)"/>
<path d="M688,475L549,-1119L579,-1121Z" fill="rgb(163,163,163)"/>
<path d="M688,475L576,-1121L607,-1123Z" fill="rgb(109,109,109)"/>
<path d="M688,475L604,-1123L635,-1124Z" fill="rgb(104,104,104)"/>
<path d="M688,475L632,-1124L663,-1125Z" fill="rgb(87,87,87)"/>
<path d="M688,475L660,-1125L691,-1125Z" fill="rgb(108,108,108)"/>
<path d="M688,475L688,-1125L719,-1125Z" fill="rgb(154,154,154)"/>
<path d="M688,475L716,-1125L747,-1124Z" fill="rgb(159,159,159)"/>
<path d="M688,475L744,-1124L775,-1123Z" fill="rgb(190,190,190)"/>
<path d="M688,475L772,-1123L802,-1121Z" fill="rgb(214,214,214)"/>
<path d="M688,475L800,-1121L830,-1119Z" fill="rgb(231,231,231)"/>
<path d="M688,475L827,-1119L858,-1116Z" fill="rgb(177,177,177)"/>
<path d="M688,475L855,-1116L886,-1113Z" fill="rgb(159,159,159)"/>
<path d="M688,475L883,-1113L913,-1109Z" fill="rgb(140,140,140)"/>
<path d="M688,475L911,-1109L941,-1105Z" fill="rgb(145,145,145)"/>
<path d="M688,475L938,-1105L969,-1100Z" fill="rgb(155,155,155)"/>
<path d="M688,475L966,-1101L996,-1095Z" fill="rgb(135,135,135)"/>
<path d="M688,475L993,-1096L1023,-1089Z" fill="rgb(154,154,154)"/>
<path d="M688,475L1021,-1090L1051,-1083Z" fill="rgb(174,174,174)"/>
<path d="M688,475L1048,-1084L1078,-1077Z" fill="rgb(247,247,247)"/>
<path d="M688,475L1075,-1077L1105,-1070Z" fill="rgb(255,255,255)"/>
<path d="M688,475L1102,-1070L1132,-1062Z" fill="rgb(255,255,255)"/>
<path d="M688,475L1129,-1063L1158,-1054Z" fill="rgb(245,245,245)"/>
<path d="M688,475L1156,-1055L1185,-1046Z" fill="rgb(184,184,184)"/>
<path d="M688,475L1182,-1047L1212,-1037Z" fill="rgb(201,201,201)"/>
<path d="M688,475L1209,-1038L1238,-1028Z" fill="rgb(232,232,232)"/>
<path d="M688,475L1235,-1029L1264,-1018Z" fill="rgb(206,206,206)"/>
<path d="M688,475L1261,-1019L1290,-1007Z" fill="rgb(119,119,119)"/>
<path d="M688,475L1287,-1008L1316,-997Z" fill="rgb(68,68,68)"/>
<path d="M688,475L1313,-998L1341,-986Z" fill="rgb(58,58,58)"/>
<path d="M688,475L1339,-987L1367,-974Z" fill="rgb(43,43,43)"/>
<path d="M688,475L1364,-975L1392,-962Z" fill="rgb(57,57,57)"/>
<path d="M688,475L1389,-963L1417,-949Z" fill="rgb(85,85,85)"/>
<path d="M688,475L1414,-951L1442,-936Z" fill="rgb(169,169,169)"/>
<path d="M688,475L1439,-938L1466,-923Z" fill="rgb(209,209,209)"/>
<path d="M688,475L1464,-924L1490,-909Z" fill="rgb(225,225,225)"/>
<path d="M688,475L1488,-911L1514,-895Z" fill="rgb(164,164,164)"/>
<path d="M688,475L1512,-896L1538,-880Z" fill="rgb(166,166,166)"/>
<path d="M688,475L1536,-882L1562,-865Z" fill="rgb(160,160,160)"/>
<path d="M688,475L1559,-867L1585,-850Z" fill="rgb(170,170,170)"/>
<path d="M688,475L1583,-851L1608,-834Z" fill="rgb(225,225,225)"/>
<path d="M688,475L1606,-836L1631,-818Z" fill="rgb(253,253,253)"/>
<path d="M688,475L1628,-819L1653,-801Z" fill="rgb(199,199,199)"/>
<path d="M688,475L1651,-803L1675,-784Z" fill="rgb(215,215,215)"/>
<path d="M688,475L1673,-786L1697,-767Z" fill="rgb(171,171,171)"/>
<path d="M688,475L1695,-768L1719,-749Z" fill="rgb(203,203,203)"/>
<path d="M688,475L1716,-751L1740,-731Z" fill="rgb(242,242,242)"/>
<path d="M688,475L1738,-733L1761,-712Z" fill="rgb(215,215,215)"/>
<path d="M688,475L1759,-714L1781,-693Z" fill="rgb(139,139,139)"/>
<path d="M688,475L1779,-695L1801,-674Z" fill="rgb(107,107,107)"/>
<path d="M688,475L1799,-676L1821,-654Z" fill="rgb(92,92,92)"/>
<path d="M688,475L1819,-656L1841,-634Z" fill="rgb(78,78,78)"/>
<path d="M688,475L1839,-636L1860,-614Z" fill="rgb(77,77,77)"/>
<path d="M688,475L1858,-616L1879,-594Z" fill="rgb(87,87,87)"/>
<path d="M688,475L1877,-596L1897,-573Z" fill="rgb(123,123,123)"/>
<path d="M688,475L1896,-575L1915,-551Z" fill="rgb(97,97,97)"/>
<path d="M688,475L1914,-553L1933,-530Z" fill="rgb(106,106,106)"/>
<path d="M688,475L1931,-532L1951,-508Z" fill="rgb(82,82,82)"/>
<path d="M688,475L1949,-510L1967,-486Z" fill="rgb(73,73,73)"/>
<path d="M688,475L1966,-488L1984,-463Z" fill="rgb(89,89,89)"/>
<path d="M688,475L1982,-465L2000,-440Z" fill="rgb(113,113,113)"/>
<path d="M688,475L1999,-443L2016,-417Z" fill="rgb(134,134,134)"/>
<path d="M688,475L2014,-420L2031,-394Z" fill="rgb(151,151,151)"/>
<path d="M688,475L2030,-396L2046,-371Z" fill="rgb(253,253,253)"/>
<path d="M688,475L2045,-373L2061,-347Z" fill="rgb(254,254,254)"/>
<path d="M688,475L2059,-349L2075,-323Z" fill="rgb(244,244,244)"/>
<path d="M688,475L2074,-325L2089,-298Z" fill="rgb(121,121,121)"/>
<path d="M688,475L2087,-301L2102,-274Z" fill="rgb(91,91,91)"/>
<path d="M688,475L2101,-276L2115,-249Z" fill="rgb(76,76,76)"/>
<path d="M688,475L2114,-251L2127,-224Z" fill="rgb(123,123,123)"/>
<path d="M688,475L2126,-226L2139,-199Z" fill="rgb(88,88,88)"/>
<path d="M688,475L2138,-201L2151,-173Z" fill="rgb(99,99,99)"/>
<path d="M688,475L2150,-176L2162,-148Z" fill="rgb(142,142,142)"/>
<path d="M688,475L2161,-150L2173,-122Z" fill="rgb(212,212,212)"/>
<path d="M688,475L2171,-124L2183,-96Z" fill="rgb(197,197,197)"/>
<path d="M688,475L2182,-98L2192,-70Z" fill="rgb(146,146,146)"/>
<path d="M688,475L2192,-72L2202,-43Z" fill="rgb(131,131,131)"/>
<path d="M688,475L2201,-46L2211,-17Z" fill="rgb(195,195,195)"/>
<path d="M688,475L2210,-19L2219,10Z" fill="rgb(174,174,174)"/>
<path d="M688,475L2218,7L2227,37Z" fill="rgb(154,154,154)"/>
<path d="M688,475L2226,34L2234,64Z" fill="rgb(91,91,91)"/>
<path d="M688,475L2233,61L2241,91Z" fill="rgb(84,84,84)"/>
<path d="M688,475L2240,88L2248,118Z" fill="rgb(110,110,110)"/>
<path d="M688,475L2247,115L2254,145Z" fill="rgb(120,120,120)"/>
<path d="M688,475L2253,142L2259,172Z" fill="rgb(135,135,135)"/>
<path d="M688,475L2259,170L2264,200Z" fill="rgb(213,213,213)"/>
<path d="M688,475L2264,197L2269,227Z" fill="rgb(197,197,197)"/>
<path d="M688,475L2268,225L2273,255Z" fill="rgb(209,209,209)"/>
<path d="M688,475L2272,252L2276,283Z" fill="rgb(140,140,140)"/>
<path d="M688,475L2276,280L2280,311Z" fill="rgb(182,182,182)"/>
<path d="M688,475L2279,308L2282,338Z" fill="rgb(140,140,140)"/>
<path d="M688,475L2282,336L2284,366Z" fill="rgb(181,181,181)"/>
<path d="M688,475L2284,363L2286,394Z" fill="rgb(133,133,133)"/>
<path d="M688,475L2286,391L2287,422Z" fill="rgb(141,141,141)"/>
<path d="M688,475L2287,419L2288,450Z" fill="rgb(156,156,156)"/>
<path d="M688,475L2288,447L2288,478Z" fill="rgb(186,186,186)"/>
</mask>
<radialGradient id="vigg" gradientUnits="userSpaceOnUse" cx="0" cy="0" r="1" gradientTransform="translate(770,460) scale(560,420)"><stop offset="0" stop-color="#fff"/><stop offset="0.55" stop-color="#fff"/><stop offset="0.85" stop-color="#777"/><stop offset="1" stop-color="#333"/></radialGradient>
<mask id="vig" maskUnits="userSpaceOnUse" x="163" y="58" width="1114" height="838"><rect x="163" y="58" width="1114" height="838" fill="url(#vigg)"/></mask>
<linearGradient id="xg" gradientUnits="userSpaceOnUse" x1="163" y1="0" x2="1277" y2="0"><stop offset="0" stop-color="#c4c4c4"/><stop offset="0.35" stop-color="#d0d0d0"/><stop offset="0.6" stop-color="#fff"/></linearGradient>
<mask id="xm" maskUnits="userSpaceOnUse" x="163" y="58" width="1114" height="838"><rect x="163" y="58" width="1114" height="838" fill="url(#xg)"/></mask>
<mask id="sector" maskUnits="userSpaceOnUse" x="163" y="58" width="1114" height="838">
<path d="M688,475L2288,475L2287,534Z" fill="rgb(169,169,169)"/>
<path d="M688,475L2287,531L2284,589Z" fill="rgb(149,149,149)"/>
<path d="M688,475L2284,587L2279,645Z" fill="rgb(126,126,126)"/>
<path d="M688,475L2279,642L2272,700Z" fill="rgb(102,102,102)"/>
<path d="M688,475L2272,698L2263,756Z" fill="rgb(77,77,77)"/>
<path d="M688,475L2264,753L2252,810Z" fill="rgb(54,54,54)"/>
<path d="M688,475L2253,808L2240,865Z" fill="rgb(34,34,34)"/>
<path d="M688,475L2240,862L2225,919Z" fill="rgb(18,18,18)"/>
<path d="M688,475L2226,916L2209,972Z" fill="rgb(39,39,39)"/>
<path d="M688,475L2210,969L2191,1025Z" fill="rgb(71,71,71)"/>
<path d="M688,475L2192,1022L2170,1077Z" fill="rgb(106,106,106)"/>
<path d="M688,475L2171,1074L2149,1128Z" fill="rgb(138,138,138)"/>
<path d="M688,475L2150,1126L2125,1179Z" fill="rgb(163,163,163)"/>
<path d="M688,475L2126,1176L2099,1229Z" fill="rgb(176,176,176)"/>
<path d="M688,475L2101,1226L2072,1277Z" fill="rgb(176,176,176)"/>
<path d="M688,475L2074,1275L2043,1325Z" fill="rgb(163,163,163)"/>
<path d="M688,475L2045,1323L2013,1372Z" fill="rgb(138,138,138)"/>
<path d="M688,475L2014,1370L1981,1418Z" fill="rgb(106,106,106)"/>
<path d="M688,475L1982,1415L1947,1462Z" fill="rgb(71,71,71)"/>
<path d="M688,475L1949,1460L1912,1506Z" fill="rgb(39,39,39)"/>
<path d="M688,475L1914,1503L1875,1548Z" fill="rgb(15,15,15)"/>
<path d="M688,475L-888,197L-876,140Z" fill="rgb(2,2,2)"/>
<path d="M688,475L-877,142L-864,85Z" fill="rgb(22,22,22)"/>
<path d="M688,475L-864,88L-849,31Z" fill="rgb(56,56,56)"/>
<path d="M688,475L-850,34L-833,-22Z" fill="rgb(96,96,96)"/>
<path d="M688,475L-834,-19L-815,-75Z" fill="rgb(130,130,130)"/>
<path d="M688,475L-816,-72L-794,-127Z" fill="rgb(150,150,150)"/>
<path d="M688,475L-795,-124L-773,-178Z" fill="rgb(150,150,150)"/>
<path d="M688,475L-774,-176L-749,-229Z" fill="rgb(130,130,130)"/>
<path d="M688,475L-750,-226L-723,-279Z" fill="rgb(96,96,96)"/>
<path d="M688,475L-725,-276L-696,-327Z" fill="rgb(56,56,56)"/>
<path d="M688,475L-698,-325L-667,-375Z" fill="rgb(22,22,22)"/>
<path d="M688,475L-669,-373L-637,-422Z" fill="rgb(2,2,2)"/>
<path d="M688,475L-112,-911L-61,-939Z" fill="rgb(11,11,11)"/>
<path d="M688,475L-63,-938L-11,-964Z" fill="rgb(31,31,31)"/>
<path d="M688,475L-13,-963L40,-988Z" fill="rgb(58,58,58)"/>
<path d="M688,475L37,-987L91,-1010Z" fill="rgb(91,91,91)"/>
<path d="M688,475L89,-1008L143,-1029Z" fill="rgb(127,127,127)"/>
<path d="M688,475L141,-1029L196,-1048Z" fill="rgb(163,163,163)"/>
<path d="M688,475L194,-1047L250,-1064Z" fill="rgb(196,196,196)"/>
<path d="M688,475L247,-1063L304,-1078Z" fill="rgb(223,223,223)"/>
<path d="M688,475L301,-1077L358,-1091Z" fill="rgb(243,243,243)"/>
<path d="M688,475L355,-1090L413,-1101Z" fill="rgb(253,253,253)"/>
<path d="M688,475L410,-1101L468,-1110Z" fill="rgb(253,253,253)"/>
<path d="M688,475L465,-1109L524,-1117Z" fill="rgb(243,243,243)"/>
<path d="M688,475L521,-1116L579,-1121Z" fill="rgb(223,223,223)"/>
<path d="M688,475L576,-1121L635,-1124Z" fill="rgb(196,196,196)"/>
<path d="M688,475L632,-1124L691,-1125Z" fill="rgb(163,163,163)"/>
<path d="M688,475L688,-1125L747,-1124Z" fill="rgb(127,127,127)"/>
<path d="M688,475L744,-1124L802,-1121Z" fill="rgb(91,91,91)"/>
<path d="M688,475L800,-1121L858,-1116Z" fill="rgb(58,58,58)"/>
<path d="M688,475L855,-1116L913,-1109Z" fill="rgb(31,31,31)"/>
<path d="M688,475L911,-1109L969,-1100Z" fill="rgb(11,11,11)"/>
<path d="M688,475L2074,-325L2102,-274Z" fill="rgb(6,6,6)"/>
<path d="M688,475L2101,-276L2127,-224Z" fill="rgb(18,18,18)"/>
<path d="M688,475L2126,-226L2151,-173Z" fill="rgb(34,34,34)"/>
<path d="M688,475L2150,-176L2173,-122Z" fill="rgb(54,54,54)"/>
<path d="M688,475L2171,-124L2192,-70Z" fill="rgb(77,77,77)"/>
<path d="M688,475L2192,-72L2211,-17Z" fill="rgb(102,102,102)"/>
<path d="M688,475L2210,-19L2227,37Z" fill="rgb(126,126,126)"/>
<path d="M688,475L2226,34L2241,91Z" fill="rgb(149,149,149)"/>
<path d="M688,475L2240,88L2254,145Z" fill="rgb(169,169,169)"/>
<path d="M688,475L2253,142L2264,200Z" fill="rgb(185,185,185)"/>
<path d="M688,475L2264,197L2273,255Z" fill="rgb(197,197,197)"/>
<path d="M688,475L2272,252L2280,311Z" fill="rgb(203,203,203)"/>
<path d="M688,475L2279,308L2284,366Z" fill="rgb(203,203,203)"/>
<path d="M688,475L2284,363L2287,422Z" fill="rgb(197,197,197)"/>
<path d="M688,475L2287,419L2288,478Z" fill="rgb(185,185,185)"/>
</mask>
</defs>
<rect x="163" y="58" width="1114" height="838" fill="#000"/>
<rect x="1206" y="58" width="71" height="21" fill="#07030a"/>
<g mask="url(#sector)">
<g mask="url(#beams)"><g filter="url(#gBm)" fill="#1a9be6">
<use href="#L" opacity="0.0044" transform="translate(688,475) scale(2.4100) translate(-688,-475)"/>
<use href="#L" opacity="0.0044" transform="translate(688,475) scale(0.4149) translate(-688,-475)"/>
<use href="#L" opacity="0.0048" transform="translate(688,475) scale(2.3800) translate(-688,-475)"/>
<use href="#L" opacity="0.0048" transform="translate(688,475) scale(0.4202) translate(-688,-475)"/>
<use href="#L" opacity="0.0051" transform="translate(688,475) scale(2.3500) translate(-688,-475)"/>
<use href="#L" opacity="0.0051" transform="translate(688,475) scale(0.4255) translate(-688,-475)"/>
<use href="#L" opacity="0.0055" transform="translate(688,475) scale(2.3200) translate(-688,-475)"/>
<use href="#L" opacity="0.0055" transform="translate(688,475) scale(0.4310) translate(-688,-475)"/>
<use href="#L" opacity="0.0059" transform="translate(688,475) scale(2.2900) translate(-688,-475)"/>
<use href="#L" opacity="0.0059" transform="translate(688,475) scale(0.4367) translate(-688,-475)"/>
<use href="#L" opacity="0.0064" transform="translate(688,475) scale(2.2600) translate(-688,-475)"/>
<use href="#L" opacity="0.0064" transform="translate(688,475) scale(0.4425) translate(-688,-475)"/>
<use href="#L" opacity="0.0069" transform="translate(688,475) scale(2.2300) translate(-688,-475)"/>
<use href="#L" opacity="0.0069" transform="translate(688,475) scale(0.4484) translate(-688,-475)"/>
<use href="#L" opacity="0.0074" transform="translate(688,475) scale(2.2000) translate(-688,-475)"/>
<use href="#L" opacity="0.0074" transform="translate(688,475) scale(0.4545) translate(-688,-475)"/>
<use href="#L" opacity="0.0080" transform="translate(688,475) scale(2.1700) translate(-688,-475)"/>
<use href="#L" opacity="0.0080" transform="translate(688,475) scale(0.4608) translate(-688,-475)"/>
<use href="#L" opacity="0.0086" transform="translate(688,475) scale(2.1400) translate(-688,-475)"/>
<use href="#L" opacity="0.0086" transform="translate(688,475) scale(0.4673) translate(-688,-475)"/>
<use href="#L" opacity="0.0093" transform="translate(688,475) scale(2.1100) translate(-688,-475)"/>
<use href="#L" opacity="0.0093" transform="translate(688,475) scale(0.4739) translate(-688,-475)"/>
<use href="#L" opacity="0.0100" transform="translate(688,475) scale(2.0800) translate(-688,-475)"/>
<use href="#L" opacity="0.0100" transform="translate(688,475) scale(0.4808) translate(-688,-475)"/>
<use href="#L" opacity="0.0108" transform="translate(688,475) scale(2.0500) translate(-688,-475)"/>
<use href="#L" opacity="0.0108" transform="translate(688,475) scale(0.4878) translate(-688,-475)"/>
<use href="#L" opacity="0.0116" transform="translate(688,475) scale(2.0200) translate(-688,-475)"/>
<use href="#L" opacity="0.0116" transform="translate(688,475) scale(0.4950) translate(-688,-475)"/>
<use href="#L" opacity="0.0125" transform="translate(688,475) scale(1.9900) translate(-688,-475)"/>
<use href="#L" opacity="0.0125" transform="translate(688,475) scale(0.5025) translate(-688,-475)"/>
<use href="#L" opacity="0.0135" transform="translate(688,475) scale(1.9600) translate(-688,-475)"/>
<use href="#L" opacity="0.0135" transform="translate(688,475) scale(0.5102) translate(-688,-475)"/>
<use href="#L" opacity="0.0146" transform="translate(688,475) scale(1.9300) translate(-688,-475)"/>
<use href="#L" opacity="0.0146" transform="translate(688,475) scale(0.5181) translate(-688,-475)"/>
<use href="#L" opacity="0.0157" transform="translate(688,475) scale(1.9000) translate(-688,-475)"/>
<use href="#L" opacity="0.0157" transform="translate(688,475) scale(0.5263) translate(-688,-475)"/>
<use href="#L" opacity="0.0169" transform="translate(688,475) scale(1.8700) translate(-688,-475)"/>
<use href="#L" opacity="0.0169" transform="translate(688,475) scale(0.5348) translate(-688,-475)"/>
<use href="#L" opacity="0.0182" transform="translate(688,475) scale(1.8400) translate(-688,-475)"/>
<use href="#L" opacity="0.0182" transform="translate(688,475) scale(0.5435) translate(-688,-475)"/>
<use href="#L" opacity="0.0196" transform="translate(688,475) scale(1.8100) translate(-688,-475)"/>
<use href="#L" opacity="0.0196" transform="translate(688,475) scale(0.5525) translate(-688,-475)"/>
<use href="#L" opacity="0.0211" transform="translate(688,475) scale(1.7800) translate(-688,-475)"/>
<use href="#L" opacity="0.0211" transform="translate(688,475) scale(0.5618) translate(-688,-475)"/>
<use href="#L" opacity="0.0227" transform="translate(688,475) scale(1.7500) translate(-688,-475)"/>
<use href="#L" opacity="0.0227" transform="translate(688,475) scale(0.5714) translate(-688,-475)"/>
<use href="#L" opacity="0.0245" transform="translate(688,475) scale(1.7200) translate(-688,-475)"/>
<use href="#L" opacity="0.0245" transform="translate(688,475) scale(0.5814) translate(-688,-475)"/>
<use href="#L" opacity="0.0264" transform="translate(688,475) scale(1.6900) translate(-688,-475)"/>
<use href="#L" opacity="0.0264" transform="translate(688,475) scale(0.5917) translate(-688,-475)"/>
<use href="#L" opacity="0.0284" transform="translate(688,475) scale(1.6600) translate(-688,-475)"/>
<use href="#L" opacity="0.0284" transform="translate(688,475) scale(0.6024) translate(-688,-475)"/>
<use href="#L" opacity="0.0306" transform="translate(688,475) scale(1.6300) translate(-688,-475)"/>
<use href="#L" opacity="0.0306" transform="translate(688,475) scale(0.6135) translate(-688,-475)"/>
<use href="#L" opacity="0.0329" transform="translate(688,475) scale(1.6000) translate(-688,-475)"/>
<use href="#L" opacity="0.0329" transform="translate(688,475) scale(0.6250) translate(-688,-475)"/>
<use href="#L" opacity="0.0354" transform="translate(688,475) scale(1.5700) translate(-688,-475)"/>
<use href="#L" opacity="0.0354" transform="translate(688,475) scale(0.6369) translate(-688,-475)"/>
<use href="#L" opacity="0.0381" transform="translate(688,475) scale(1.5400) translate(-688,-475)"/>
<use href="#L" opacity="0.0381" transform="translate(688,475) scale(0.6494) translate(-688,-475)"/>
<use href="#L" opacity="0.0410" transform="translate(688,475) scale(1.5100) translate(-688,-475)"/>
<use href="#L" opacity="0.0410" transform="translate(688,475) scale(0.6623) translate(-688,-475)"/>
<use href="#L" opacity="0.0442" transform="translate(688,475) scale(1.4800) translate(-688,-475)"/>
<use href="#L" opacity="0.0442" transform="translate(688,475) scale(0.6757) translate(-688,-475)"/>
<use href="#L" opacity="0.0475" transform="translate(688,475) scale(1.4500) translate(-688,-475)"/>
<use href="#L" opacity="0.0475" transform="translate(688,475) scale(0.6897) translate(-688,-475)"/>
<use href="#L" opacity="0.0511" transform="translate(688,475) scale(1.4200) translate(-688,-475)"/>
<use href="#L" opacity="0.0511" transform="translate(688,475) scale(0.7042) translate(-688,-475)"/>
<use href="#L" opacity="0.0550" transform="translate(688,475) scale(1.3900) translate(-688,-475)"/>
<use href="#L" opacity="0.0550" transform="translate(688,475) scale(0.7194) translate(-688,-475)"/>
<use href="#L" opacity="0.0592" transform="translate(688,475) scale(1.3600) translate(-688,-475)"/>
<use href="#L" opacity="0.0592" transform="translate(688,475) scale(0.7353) translate(-688,-475)"/>
<use href="#L" opacity="0.0636" transform="translate(688,475) scale(1.3300) translate(-688,-475)"/>
<use href="#L" opacity="0.0636" transform="translate(688,475) scale(0.7519) translate(-688,-475)"/>
<use href="#L" opacity="0.0684" transform="translate(688,475) scale(1.3000) translate(-688,-475)"/>
<use href="#L" opacity="0.0684" transform="translate(688,475) scale(0.7692) translate(-688,-475)"/>
<use href="#L" opacity="0.0735" transform="translate(688,475) scale(1.2700) translate(-688,-475)"/>
<use href="#L" opacity="0.0735" transform="translate(688,475) scale(0.7874) translate(-688,-475)"/>
<use href="#L" opacity="0.0790" transform="translate(688,475) scale(1.2400) translate(-688,-475)"/>
<use href="#L" opacity="0.0790" transform="translate(688,475) scale(0.8065) translate(-688,-475)"/>
<use href="#L" opacity="0.0849" transform="translate(688,475) scale(1.2100) translate(-688,-475)"/>
<use href="#L" opacity="0.0849" transform="translate(688,475) scale(0.8264) translate(-688,-475)"/>
<use href="#L" opacity="0.0912" transform="translate(688,475) scale(1.1800) translate(-688,-475)"/>
<use href="#L" opacity="0.0912" transform="translate(688,475) scale(0.8475) translate(-688,-475)"/>
<use href="#L" opacity="0.0980" transform="translate(688,475) scale(1.1500) translate(-688,-475)"/>
<use href="#L" opacity="0.0980" transform="translate(688,475) scale(0.8696) translate(-688,-475)"/>
<use href="#L" opacity="0.1052" transform="translate(688,475) scale(1.1200) translate(-688,-475)"/>
<use href="#L" opacity="0.1052" transform="translate(688,475) scale(0.8929) translate(-688,-475)"/>
<use href="#L" opacity="0.1129" transform="translate(688,475) scale(1.0900) translate(-688,-475)"/>
<use href="#L" opacity="0.1129" transform="translate(688,475) scale(0.9174) translate(-688,-475)"/>
<use href="#L" opacity="0.1211" transform="translate(688,475) scale(1.0600) translate(-688,-475)"/>
<use href="#L" opacity="0.1211" transform="translate(688,475) scale(0.9434) translate(-688,-475)"/>
<use href="#L" opacity="0.1299" transform="translate(688,475) scale(1.0300) translate(-688,-475)"/>
<use href="#L" opacity="0.1299" transform="translate(688,475) scale(0.9709) translate(-688,-475)"/>
<use href="#L" opacity="0.1393" transform="translate(688,475) scale(1.0000) translate(-688,-475)"/>
</g></g>
</g>
<g mask="url(#xm)"><g mask="url(#vig)">
<g mask="url(#beams)"><g filter="url(#gBm)" fill="#1a9be6">
<use href="#L" opacity="0.0033" transform="translate(688,475) scale(1.9000) translate(-688,-475)"/>
<use href="#L" opacity="0.0033" transform="translate(688,475) scale(0.5263) translate(-688,-475)"/>
<use href="#L" opacity="0.0036" transform="translate(688,475) scale(1.8850) translate(-688,-475)"/>
<use href="#L" opacity="0.0036" transform="translate(688,475) scale(0.5305) translate(-688,-475)"/>
<use href="#L" opacity="0.0039" transform="translate(688,475) scale(1.8700) translate(-688,-475)"/>
<use href="#L" opacity="0.0039" transform="translate(688,475) scale(0.5348) translate(-688,-475)"/>
<use href="#L" opacity="0.0042" transform="translate(688,475) scale(1.8550) translate(-688,-475)"/>
<use href="#L" opacity="0.0042" transform="translate(688,475) scale(0.5391) translate(-688,-475)"/>
<use href="#L" opacity="0.0045" transform="translate(688,475) scale(1.8400) translate(-688,-475)"/>
<use href="#L" opacity="0.0045" transform="translate(688,475) scale(0.5435) translate(-688,-475)"/>
<use href="#L" opacity="0.0048" transform="translate(688,475) scale(1.8250) translate(-688,-475)"/>
<use href="#L" opacity="0.0048" transform="translate(688,475) scale(0.5479) translate(-688,-475)"/>
<use href="#L" opacity="0.0052" transform="translate(688,475) scale(1.8100) translate(-688,-475)"/>
<use href="#L" opacity="0.0052" transform="translate(688,475) scale(0.5525) translate(-688,-475)"/>
<use href="#L" opacity="0.0056" transform="translate(688,475) scale(1.7950) translate(-688,-475)"/>
<use href="#L" opacity="0.0056" transform="translate(688,475) scale(0.5571) translate(-688,-475)"/>
<use href="#L" opacity="0.0061" transform="translate(688,475) scale(1.7800) translate(-688,-475)"/>
<use href="#L" opacity="0.0061" transform="translate(688,475) scale(0.5618) translate(-688,-475)"/>
<use href="#L" opacity="0.0065" transform="translate(688,475) scale(1.7650) translate(-688,-475)"/>
<use href="#L" opacity="0.0065" transform="translate(688,475) scale(0.5666) translate(-688,-475)"/>
<use href="#L" opacity="0.0070" transform="translate(688,475) scale(1.7500) translate(-688,-475)"/>
<use href="#L" opacity="0.0070" transform="translate(688,475) scale(0.5714) translate(-688,-475)"/>
<use href="#L" opacity="0.0076" transform="translate(688,475) scale(1.7350) translate(-688,-475)"/>
<use href="#L" opacity="0.0076" transform="translate(688,475) scale(0.5764) translate(-688,-475)"/>
<use href="#L" opacity="0.0082" transform="translate(688,475) scale(1.7200) translate(-688,-475)"/>
<use href="#L" opacity="0.0082" transform="translate(688,475) scale(0.5814) translate(-688,-475)"/>
<use href="#L" opacity="0.0088" transform="translate(688,475) scale(1.7050) translate(-688,-475)"/>
<use href="#L" opacity="0.0088" transform="translate(688,475) scale(0.5865) translate(-688,-475)"/>
<use href="#L" opacity="0.0095" transform="translate(688,475) scale(1.6900) translate(-688,-475)"/>
<use href="#L" opacity="0.0095" transform="translate(688,475) scale(0.5917) translate(-688,-475)"/>
<use href="#L" opacity="0.0102" transform="translate(688,475) scale(1.6750) translate(-688,-475)"/>
<use href="#L" opacity="0.0102" transform="translate(688,475) scale(0.5970) translate(-688,-475)"/>
<use href="#L" opacity="0.0110" transform="translate(688,475) scale(1.6600) translate(-688,-475)"/>
<use href="#L" opacity="0.0110" transform="translate(688,475) scale(0.6024) translate(-688,-475)"/>
<use href="#L" opacity="0.0119" transform="translate(688,475) scale(1.6450) translate(-688,-475)"/>
<use href="#L" opacity="0.0119" transform="translate(688,475) scale(0.6079) translate(-688,-475)"/>
<use href="#L" opacity="0.0128" transform="translate(688,475) scale(1.6300) translate(-688,-475)"/>
<use href="#L" opacity="0.0128" transform="translate(688,475) scale(0.6135) translate(-688,-475)"/>
<use href="#L" opacity="0.0138" transform="translate(688,475) scale(1.6150) translate(-688,-475)"/>
<use href="#L" opacity="0.0138" transform="translate(688,475) scale(0.6192) translate(-688,-475)"/>
<use href="#L" opacity="0.0148" transform="translate(688,475) scale(1.6000) translate(-688,-475)"/>
<use href="#L" opacity="0.0148" transform="translate(688,475) scale(0.6250) translate(-688,-475)"/>
<use href="#L" opacity="0.0160" transform="translate(688,475) scale(1.5850) translate(-688,-475)"/>
<use href="#L" opacity="0.0160" transform="translate(688,475) scale(0.6309) translate(-688,-475)"/>
<use href="#L" opacity="0.0172" transform="translate(688,475) scale(1.5700) translate(-688,-475)"/>
<use href="#L" opacity="0.0172" transform="translate(688,475) scale(0.6369) translate(-688,-475)"/>
<use href="#L" opacity="0.0185" transform="translate(688,475) scale(1.5550) translate(-688,-475)"/>
<use href="#L" opacity="0.0185" transform="translate(688,475) scale(0.6431) translate(-688,-475)"/>
<use href="#L" opacity="0.0200" transform="translate(688,475) scale(1.5400) translate(-688,-475)"/>
<use href="#L" opacity="0.0200" transform="translate(688,475) scale(0.6494) translate(-688,-475)"/>
<use href="#L" opacity="0.0215" transform="translate(688,475) scale(1.5250) translate(-688,-475)"/>
<use href="#L" opacity="0.0215" transform="translate(688,475) scale(0.6557) translate(-688,-475)"/>
<use href="#L" opacity="0.0232" transform="translate(688,475) scale(1.5100) translate(-688,-475)"/>
<use href="#L" opacity="0.0232" transform="translate(688,475) scale(0.6623) translate(-688,-475)"/>
<use href="#L" opacity="0.0249" transform="translate(688,475) scale(1.4950) translate(-688,-475)"/>
<use href="#L" opacity="0.0249" transform="translate(688,475) scale(0.6689) translate(-688,-475)"/>
<use href="#L" opacity="0.0268" transform="translate(688,475) scale(1.4800) translate(-688,-475)"/>
<use href="#L" opacity="0.0268" transform="translate(688,475) scale(0.6757) translate(-688,-475)"/>
<use href="#L" opacity="0.0289" transform="translate(688,475) scale(1.4650) translate(-688,-475)"/>
<use href="#L" opacity="0.0289" transform="translate(688,475) scale(0.6826) translate(-688,-475)"/>
<use href="#L" opacity="0.0311" transform="translate(688,475) scale(1.4500) translate(-688,-475)"/>
<use href="#L" opacity="0.0311" transform="translate(688,475) scale(0.6897) translate(-688,-475)"/>
<use href="#L" opacity="0.0335" transform="translate(688,475) scale(1.4350) translate(-688,-475)"/>
<use href="#L" opacity="0.0335" transform="translate(688,475) scale(0.6969) translate(-688,-475)"/>
<use href="#L" opacity="0.0361" transform="translate(688,475) scale(1.4200) translate(-688,-475)"/>
<use href="#L" opacity="0.0361" transform="translate(688,475) scale(0.7042) translate(-688,-475)"/>
<use href="#L" opacity="0.0388" transform="translate(688,475) scale(1.4050) translate(-688,-475)"/>
<use href="#L" opacity="0.0388" transform="translate(688,475) scale(0.7117) translate(-688,-475)"/>
<use href="#L" opacity="0.0418" transform="translate(688,475) scale(1.3900) translate(-688,-475)"/>
<use href="#L" opacity="0.0418" transform="translate(688,475) scale(0.7194) translate(-688,-475)"/>
<use href="#L" opacity="0.0450" transform="translate(688,475) scale(1.3750) translate(-688,-475)"/>
<use href="#L" opacity="0.0450" transform="translate(688,475) scale(0.7273) translate(-688,-475)"/>
<use href="#L" opacity="0.0484" transform="translate(688,475) scale(1.3600) translate(-688,-475)"/>
<use href="#L" opacity="0.0484" transform="translate(688,475) scale(0.7353) translate(-688,-475)"/>
<use href="#L" opacity="0.0520" transform="translate(688,475) scale(1.3450) translate(-688,-475)"/>
<use href="#L" opacity="0.0520" transform="translate(688,475) scale(0.7435) translate(-688,-475)"/>
<use href="#L" opacity="0.0560" transform="translate(688,475) scale(1.3300) translate(-688,-475)"/>
<use href="#L" opacity="0.0560" transform="translate(688,475) scale(0.7519) translate(-688,-475)"/>
<use href="#L" opacity="0.0602" transform="translate(688,475) scale(1.3150) translate(-688,-475)"/>
<use href="#L" opacity="0.0602" transform="translate(688,475) scale(0.7605) translate(-688,-475)"/>
<use href="#L" opacity="0.0647" transform="translate(688,475) scale(1.3000) translate(-688,-475)"/>
<use href="#L" opacity="0.0647" transform="translate(688,475) scale(0.7692) translate(-688,-475)"/>
<use href="#L" opacity="0.0696" transform="translate(688,475) scale(1.2850) translate(-688,-475)"/>
<use href="#L" opacity="0.0696" transform="translate(688,475) scale(0.7782) translate(-688,-475)"/>
<use href="#L" opacity="0.0748" transform="translate(688,475) scale(1.2700) translate(-688,-475)"/>
<use href="#L" opacity="0.0748" transform="translate(688,475) scale(0.7874) translate(-688,-475)"/>
<use href="#L" opacity="0.0804" transform="translate(688,475) scale(1.2550) translate(-688,-475)"/>
<use href="#L" opacity="0.0804" transform="translate(688,475) scale(0.7968) translate(-688,-475)"/>
<use href="#L" opacity="0.0864" transform="translate(688,475) scale(1.2400) translate(-688,-475)"/>
<use href="#L" opacity="0.0864" transform="translate(688,475) scale(0.8065) translate(-688,-475)"/>
<use href="#L" opacity="0.0928" transform="translate(688,475) scale(1.2250) translate(-688,-475)"/>
<use href="#L" opacity="0.0928" transform="translate(688,475) scale(0.8163) translate(-688,-475)"/>
<use href="#L" opacity="0.0997" transform="translate(688,475) scale(1.2100) translate(-688,-475)"/>
<use href="#L" opacity="0.0997" transform="translate(688,475) scale(0.8264) translate(-688,-475)"/>
<use href="#L" opacity="0.1070" transform="translate(688,475) scale(1.1950) translate(-688,-475)"/>
<use href="#L" opacity="0.1070" transform="translate(688,475) scale(0.8368) translate(-688,-475)"/>
<use href="#L" opacity="0.1148" transform="translate(688,475) scale(1.1800) translate(-688,-475)"/>
<use href="#L" opacity="0.1148" transform="translate(688,475) scale(0.8475) translate(-688,-475)"/>
<use href="#L" opacity="0.1232" transform="translate(688,475) scale(1.1650) translate(-688,-475)"/>
<use href="#L" opacity="0.1232" transform="translate(688,475) scale(0.8584) translate(-688,-475)"/>
<use href="#L" opacity="0.1321" transform="translate(688,475) scale(1.1500) translate(-688,-475)"/>
<use href="#L" opacity="0.1321" transform="translate(688,475) scale(0.8696) translate(-688,-475)"/>
<use href="#L" opacity="0.1417" transform="translate(688,475) scale(1.1350) translate(-688,-475)"/>
<use href="#L" opacity="0.1417" transform="translate(688,475) scale(0.8811) translate(-688,-475)"/>
<use href="#L" opacity="0.1518" transform="translate(688,475) scale(1.1200) translate(-688,-475)"/>
<use href="#L" opacity="0.1518" transform="translate(688,475) scale(0.8929) translate(-688,-475)"/>
<use href="#L" opacity="0.1626" transform="translate(688,475) scale(1.1050) translate(-688,-475)"/>
<use href="#L" opacity="0.1626" transform="translate(688,475) scale(0.9050) translate(-688,-475)"/>
<use href="#L" opacity="0.1741" transform="translate(688,475) scale(1.0900) translate(-688,-475)"/>
<use href="#L" opacity="0.1741" transform="translate(688,475) scale(0.9174) translate(-688,-475)"/>
<use href="#L" opacity="0.1863" transform="translate(688,475) scale(1.0750) translate(-688,-475)"/>
<use href="#L" opacity="0.1863" transform="translate(688,475) scale(0.9302) translate(-688,-475)"/>
<use href="#L" opacity="0.1993" transform="translate(688,475) scale(1.0600) translate(-688,-475)"/>
<use href="#L" opacity="0.1993" transform="translate(688,475) scale(0.9434) translate(-688,-475)"/>
<use href="#L" opacity="0.2130" transform="translate(688,475) scale(1.0450) translate(-688,-475)"/>
<use href="#L" opacity="0.2130" transform="translate(688,475) scale(0.9569) translate(-688,-475)"/>
<use href="#L" opacity="0.2276" transform="translate(688,475) scale(1.0300) translate(-688,-475)"/>
<use href="#L" opacity="0.2276" transform="translate(688,475) scale(0.9709) translate(-688,-475)"/>
<use href="#L" opacity="0.2429" transform="translate(688,475) scale(1.0150) translate(-688,-475)"/>
<use href="#L" opacity="0.2429" transform="translate(688,475) scale(0.9852) translate(-688,-475)"/>
<use href="#L" opacity="0.2592" transform="translate(688,475) scale(1.0000) translate(-688,-475)"/>
</g></g>
</g>
<g><g filter="url(#gS)" fill="#1a9be6">
<use href="#L" opacity="0.0020" transform="translate(688,475) scale(1.2640) translate(-688,-475)"/>
<use href="#L" opacity="0.0020" transform="translate(688,475) scale(0.7911) translate(-688,-475)"/>
<use href="#L" opacity="0.0024" transform="translate(688,475) scale(1.2560) translate(-688,-475)"/>
<use href="#L" opacity="0.0024" transform="translate(688,475) scale(0.7962) translate(-688,-475)"/>
<use href="#L" opacity="0.0028" transform="translate(688,475) scale(1.2480) translate(-688,-475)"/>
<use href="#L" opacity="0.0028" transform="translate(688,475) scale(0.8013) translate(-688,-475)"/>
<use href="#L" opacity="0.0033" transform="translate(688,475) scale(1.2400) translate(-688,-475)"/>
<use href="#L" opacity="0.0033" transform="translate(688,475) scale(0.8065) translate(-688,-475)"/>
<use href="#L" opacity="0.0039" transform="translate(688,475) scale(1.2320) translate(-688,-475)"/>
<use href="#L" opacity="0.0039" transform="translate(688,475) scale(0.8117) translate(-688,-475)"/>
<use href="#L" opacity="0.0045" transform="translate(688,475) scale(1.2240) translate(-688,-475)"/>
<use href="#L" opacity="0.0045" transform="translate(688,475) scale(0.8170) translate(-688,-475)"/>
<use href="#L" opacity="0.0053" transform="translate(688,475) scale(1.2160) translate(-688,-475)"/>
<use href="#L" opacity="0.0053" transform="translate(688,475) scale(0.8224) translate(-688,-475)"/>
<use href="#L" opacity="0.0062" transform="translate(688,475) scale(1.2080) translate(-688,-475)"/>
<use href="#L" opacity="0.0062" transform="translate(688,475) scale(0.8278) translate(-688,-475)"/>
<use href="#L" opacity="0.0073" transform="translate(688,475) scale(1.2000) translate(-688,-475)"/>
<use href="#L" opacity="0.0073" transform="translate(688,475) scale(0.8333) translate(-688,-475)"/>
<use href="#L" opacity="0.0086" transform="translate(688,475) scale(1.1920) translate(-688,-475)"/>
<use href="#L" opacity="0.0086" transform="translate(688,475) scale(0.8389) translate(-688,-475)"/>
<use href="#L" opacity="0.0100" transform="translate(688,475) scale(1.1840) translate(-688,-475)"/>
<use href="#L" opacity="0.0100" transform="translate(688,475) scale(0.8446) translate(-688,-475)"/>
<use href="#L" opacity="0.0118" transform="translate(688,475) scale(1.1760) translate(-688,-475)"/>
<use href="#L" opacity="0.0118" transform="translate(688,475) scale(0.8503) translate(-688,-475)"/>
<use href="#L" opacity="0.0138" transform="translate(688,475) scale(1.1680) translate(-688,-475)"/>
<use href="#L" opacity="0.0138" transform="translate(688,475) scale(0.8562) translate(-688,-475)"/>
<use href="#L" opacity="0.0162" transform="translate(688,475) scale(1.1600) translate(-688,-475)"/>
<use href="#L" opacity="0.0162" transform="translate(688,475) scale(0.8621) translate(-688,-475)"/>
<use href="#L" opacity="0.0190" transform="translate(688,475) scale(1.1520) translate(-688,-475)"/>
<use href="#L" opacity="0.0190" transform="translate(688,475) scale(0.8681) translate(-688,-475)"/>
<use href="#L" opacity="0.0222" transform="translate(688,475) scale(1.1440) translate(-688,-475)"/>
<use href="#L" opacity="0.0222" transform="translate(688,475) scale(0.8741) translate(-688,-475)"/>
<use href="#L" opacity="0.0260" transform="translate(688,475) scale(1.1360) translate(-688,-475)"/>
<use href="#L" opacity="0.0260" transform="translate(688,475) scale(0.8803) translate(-688,-475)"/>
<use href="#L" opacity="0.0304" transform="translate(688,475) scale(1.1280) translate(-688,-475)"/>
<use href="#L" opacity="0.0304" transform="translate(688,475) scale(0.8865) translate(-688,-475)"/>
<use href="#L" opacity="0.0356" transform="translate(688,475) scale(1.1200) translate(-688,-475)"/>
<use href="#L" opacity="0.0356" transform="translate(688,475) scale(0.8929) translate(-688,-475)"/>
<use href="#L" opacity="0.0417" transform="translate(688,475) scale(1.1120) translate(-688,-475)"/>
<use href="#L" opacity="0.0417" transform="translate(688,475) scale(0.8993) translate(-688,-475)"/>
<use href="#L" opacity="0.0487" transform="translate(688,475) scale(1.1040) translate(-688,-475)"/>
<use href="#L" opacity="0.0487" transform="translate(688,475) scale(0.9058) translate(-688,-475)"/>
<use href="#L" opacity="0.0570" transform="translate(688,475) scale(1.0960) translate(-688,-475)"/>
<use href="#L" opacity="0.0570" transform="translate(688,475) scale(0.9124) translate(-688,-475)"/>
<use href="#L" opacity="0.0665" transform="translate(688,475) scale(1.0880) translate(-688,-475)"/>
<use href="#L" opacity="0.0665" transform="translate(688,475) scale(0.9191) translate(-688,-475)"/>
<use href="#L" opacity="0.0776" transform="translate(688,475) scale(1.0800) translate(-688,-475)"/>
<use href="#L" opacity="0.0776" transform="translate(688,475) scale(0.9259) translate(-688,-475)"/>
<use href="#L" opacity="0.0904" transform="translate(688,475) scale(1.0720) translate(-688,-475)"/>
<use href="#L" opacity="0.0904" transform="translate(688,475) scale(0.9328) translate(-688,-475)"/>
<use href="#L" opacity="0.1053" transform="translate(688,475) scale(1.0640) translate(-688,-475)"/>
<use href="#L" opacity="0.1053" transform="translate(688,475) scale(0.9398) translate(-688,-475)"/>
<use href="#L" opacity="0.1224" transform="translate(688,475) scale(1.0560) translate(-688,-475)"/>
<use href="#L" opacity="0.1224" transform="translate(688,475) scale(0.9470) translate(-688,-475)"/>
<use href="#L" opacity="0.1420" transform="translate(688,475) scale(1.0480) translate(-688,-475)"/>
<use href="#L" opacity="0.1420" transform="translate(688,475) scale(0.9542) translate(-688,-475)"/>
<use href="#L" opacity="0.1645" transform="translate(688,475) scale(1.0400) translate(-688,-475)"/>
<use href="#L" opacity="0.1645" transform="translate(688,475) scale(0.9615) translate(-688,-475)"/>
<use href="#L" opacity="0.1902" transform="translate(688,475) scale(1.0320) translate(-688,-475)"/>
<use href="#L" opacity="0.1902" transform="translate(688,475) scale(0.9690) translate(-688,-475)"/>
<use href="#L" opacity="0.2193" transform="translate(688,475) scale(1.0240) translate(-688,-475)"/>
<use href="#L" opacity="0.2193" transform="translate(688,475) scale(0.9766) translate(-688,-475)"/>
<use href="#L" opacity="0.2521" transform="translate(688,475) scale(1.0160) translate(-688,-475)"/>
<use href="#L" opacity="0.2521" transform="translate(688,475) scale(0.9843) translate(-688,-475)"/>
<use href="#L" opacity="0.2888" transform="translate(688,475) scale(1.0080) translate(-688,-475)"/>
<use href="#L" opacity="0.2888" transform="translate(688,475) scale(0.9921) translate(-688,-475)"/>
<use href="#L" opacity="0.3297" transform="translate(688,475) scale(1.0000) translate(-688,-475)"/>
</g></g>
</g>
<g><g filter="url(#gN)" fill="#1a9be6">
<use href="#L" opacity="0.0064" transform="translate(688,475) scale(1.2480) translate(-688,-475)"/>
<use href="#L" opacity="0.0064" transform="translate(688,475) scale(0.8013) translate(-688,-475)"/>
<use href="#L" opacity="0.0073" transform="translate(688,475) scale(1.2400) translate(-688,-475)"/>
<use href="#L" opacity="0.0073" transform="translate(688,475) scale(0.8065) translate(-688,-475)"/>
<use href="#L" opacity="0.0083" transform="translate(688,475) scale(1.2320) translate(-688,-475)"/>
<use href="#L" opacity="0.0083" transform="translate(688,475) scale(0.8117) translate(-688,-475)"/>
<use href="#L" opacity="0.0095" transform="translate(688,475) scale(1.2240) translate(-688,-475)"/>
<use href="#L" opacity="0.0095" transform="translate(688,475) scale(0.8170) translate(-688,-475)"/>
<use href="#L" opacity="0.0109" transform="translate(688,475) scale(1.2160) translate(-688,-475)"/>
<use href="#L" opacity="0.0109" transform="translate(688,475) scale(0.8224) translate(-688,-475)"/>
<use href="#L" opacity="0.0124" transform="translate(688,475) scale(1.2080) translate(-688,-475)"/>
<use href="#L" opacity="0.0124" transform="translate(688,475) scale(0.8278) translate(-688,-475)"/>
<use href="#L" opacity="0.0142" transform="translate(688,475) scale(1.2000) translate(-688,-475)"/>
<use href="#L" opacity="0.0142" transform="translate(688,475) scale(0.8333) translate(-688,-475)"/>
<use href="#L" opacity="0.0162" transform="translate(688,475) scale(1.1920) translate(-688,-475)"/>
<use href="#L" opacity="0.0162" transform="translate(688,475) scale(0.8389) translate(-688,-475)"/>
<use href="#L" opacity="0.0185" transform="translate(688,475) scale(1.1840) translate(-688,-475)"/>
<use href="#L" opacity="0.0185" transform="translate(688,475) scale(0.8446) translate(-688,-475)"/>
<use href="#L" opacity="0.0211" transform="translate(688,475) scale(1.1760) translate(-688,-475)"/>
<use href="#L" opacity="0.0211" transform="translate(688,475) scale(0.8503) translate(-688,-475)"/>
<use href="#L" opacity="0.0240" transform="translate(688,475) scale(1.1680) translate(-688,-475)"/>
<use href="#L" opacity="0.0240" transform="translate(688,475) scale(0.8562) translate(-688,-475)"/>
<use href="#L" opacity="0.0274" transform="translate(688,475) scale(1.1600) translate(-688,-475)"/>
<use href="#L" opacity="0.0274" transform="translate(688,475) scale(0.8621) translate(-688,-475)"/>
<use href="#L" opacity="0.0313" transform="translate(688,475) scale(1.1520) translate(-688,-475)"/>
<use href="#L" opacity="0.0313" transform="translate(688,475) scale(0.8681) translate(-688,-475)"/>
<use href="#L" opacity="0.0356" transform="translate(688,475) scale(1.1440) translate(-688,-475)"/>
<use href="#L" opacity="0.0356" transform="translate(688,475) scale(0.8741) translate(-688,-475)"/>
<use href="#L" opacity="0.0406" transform="translate(688,475) scale(1.1360) translate(-688,-475)"/>
<use href="#L" opacity="0.0406" transform="translate(688,475) scale(0.8803) translate(-688,-475)"/>
<use href="#L" opacity="0.0463" transform="translate(688,475) scale(1.1280) translate(-688,-475)"/>
<use href="#L" opacity="0.0463" transform="translate(688,475) scale(0.8865) translate(-688,-475)"/>
<use href="#L" opacity="0.0527" transform="translate(688,475) scale(1.1200) translate(-688,-475)"/>
<use href="#L" opacity="0.0527" transform="translate(688,475) scale(0.8929) translate(-688,-475)"/>
<use href="#L" opacity="0.0600" transform="translate(688,475) scale(1.1120) translate(-688,-475)"/>
<use href="#L" opacity="0.0600" transform="translate(688,475) scale(0.8993) translate(-688,-475)"/>
<use href="#L" opacity="0.0682" transform="translate(688,475) scale(1.1040) translate(-688,-475)"/>
<use href="#L" opacity="0.0682" transform="translate(688,475) scale(0.9058) translate(-688,-475)"/>
<use href="#L" opacity="0.0776" transform="translate(688,475) scale(1.0960) translate(-688,-475)"/>
<use href="#L" opacity="0.0776" transform="translate(688,475) scale(0.9124) translate(-688,-475)"/>
<use href="#L" opacity="0.0881" transform="translate(688,475) scale(1.0880) translate(-688,-475)"/>
<use href="#L" opacity="0.0881" transform="translate(688,475) scale(0.9191) translate(-688,-475)"/>
<use href="#L" opacity="0.1001" transform="translate(688,475) scale(1.0800) translate(-688,-475)"/>
<use href="#L" opacity="0.1001" transform="translate(688,475) scale(0.9259) translate(-688,-475)"/>
<use href="#L" opacity="0.1135" transform="translate(688,475) scale(1.0720) translate(-688,-475)"/>
<use href="#L" opacity="0.1135" transform="translate(688,475) scale(0.9328) translate(-688,-475)"/>
<use href="#L" opacity="0.1286" transform="translate(688,475) scale(1.0640) translate(-688,-475)"/>
<use href="#L" opacity="0.1286" transform="translate(688,475) scale(0.9398) translate(-688,-475)"/>
<use href="#L" opacity="0.1455" transform="translate(688,475) scale(1.0560) translate(-688,-475)"/>
<use href="#L" opacity="0.1455" transform="translate(688,475) scale(0.9470) translate(-688,-475)"/>
<use href="#L" opacity="0.1645" transform="translate(688,475) scale(1.0480) translate(-688,-475)"/>
<use href="#L" opacity="0.1645" transform="translate(688,475) scale(0.9542) translate(-688,-475)"/>
<use href="#L" opacity="0.1857" transform="translate(688,475) scale(1.0400) translate(-688,-475)"/>
<use href="#L" opacity="0.1857" transform="translate(688,475) scale(0.9615) translate(-688,-475)"/>
<use href="#L" opacity="0.2092" transform="translate(688,475) scale(1.0320) translate(-688,-475)"/>
<use href="#L" opacity="0.2092" transform="translate(688,475) scale(0.9690) translate(-688,-475)"/>
<use href="#L" opacity="0.2352" transform="translate(688,475) scale(1.0240) translate(-688,-475)"/>
<use href="#L" opacity="0.2352" transform="translate(688,475) scale(0.9766) translate(-688,-475)"/>
<use href="#L" opacity="0.2639" transform="translate(688,475) scale(1.0160) translate(-688,-475)"/>
<use href="#L" opacity="0.2639" transform="translate(688,475) scale(0.9843) translate(-688,-475)"/>
<use href="#L" opacity="0.2954" transform="translate(688,475) scale(1.0080) translate(-688,-475)"/>
<use href="#L" opacity="0.2954" transform="translate(688,475) scale(0.9921) translate(-688,-475)"/>
<use href="#L" opacity="0.3297" transform="translate(688,475) scale(1.0000) translate(-688,-475)"/>
</g></g>
<filter id="gsb" x="-30%" y="-30%" width="160%" height="160%"><feGaussianBlur stdDeviation="3"/></filter>
<path d="M497.0,303.0 510.0,306.0 523.0,305.0 533.0,312.0 538.0,324.0 541.0,336.0 535.0,346.0 524.0,343.0 512.0,333.0 500.0,323.0 489.0,314.0 490.0,306.0Z" fill="#1a9be6" opacity="0.85" filter="url(#gsb)"/>
<use href="#L" fill="#1a9be6" filter="url(#gI)"/>
<defs><clipPath id="landclip"><use href="#L"/></clipPath><clipPath id="topclip"><use href="#LT"/></clipPath>
<filter id="shb" x="0" y="0" width="1" height="1"><feGaussianBlur stdDeviation="8"/></filter>
<g id="SH" filter="url(#shb)">
<rect x="276" y="264" width="12" height="12" fill="#404040"/>
<rect x="288" y="264" width="12" height="12" fill="#404040"/>
<rect x="300" y="264" width="12" height="12" fill="#414141"/>
<rect x="312" y="264" width="12" height="12" fill="#414141"/>
<rect x="324" y="264" width="12" height="12" fill="#424242"/>
<rect x="336" y="264" width="12" height="12" fill="#434343"/>
<rect x="348" y="264" width="12" height="12" fill="#434343"/>
<rect x="360" y="264" width="12" height="12" fill="#444444"/>
<rect x="372" y="264" width="12" height="12" fill="#454545"/>
<rect x="384" y="264" width="12" height="12" fill="#454545"/>
<rect x="396" y="264" width="12" height="12" fill="#464646"/>
<rect x="408" y="264" width="12" height="12" fill="#474747"/>
<rect x="420" y="264" width="12" height="12" fill="#494949"/>
<rect x="432" y="264" width="12" height="12" fill="#4a4a4a"/>
<rect x="444" y="264" width="12" height="12" fill="#4b4b4b"/>
<rect x="456" y="264" width="12" height="12" fill="#4d4d4d"/>
<rect x="468" y="264" width="12" height="12" fill="#4e4e4e"/>
<rect x="480" y="264" width="12" height="12" fill="#505050"/>
<rect x="492" y="264" width="12" height="12" fill="#515151"/>
<rect x="504" y="264" width="12" height="12" fill="#535353"/>
<rect x="516" y="264" width="12" height="12" fill="#545454"/>
<rect x="528" y="264" width="12" height="12" fill="#555555"/>
<rect x="540" y="264" width="12" height="12" fill="#565656"/>
<rect x="552" y="264" width="12" height="12" fill="#575757"/>
<rect x="564" y="264" width="12" height="12" fill="#575757"/>
<rect x="576" y="264" width="12" height="12" fill="#575757"/>
<rect x="588" y="264" width="12" height="12" fill="#575757"/>
<rect x="600" y="264" width="12" height="12" fill="#575757"/>
<rect x="612" y="264" width="12" height="12" fill="#565656"/>
<rect x="624" y="264" width="12" height="12" fill="#565656"/>
<rect x="636" y="264" width="12" height="12" fill="#555555"/>
<rect x="648" y="264" width="12" height="12" fill="#545454"/>
<rect x="660" y="264" width="12" height="12" fill="#535353"/>
<rect x="672" y="264" width="12" height="12" fill="#515151"/>
<rect x="684" y="264" width="12" height="12" fill="#4f4f4f"/>
<rect x="696" y="264" width="12" height="12" fill="#4d4d4d"/>
<rect x="708" y="264" width="12" height="12" fill="#4b4b4b"/>
<rect x="720" y="264" width="12" height="12" fill="#484848"/>
<rect x="732" y="264" width="12" height="12" fill="#464646"/>
<rect x="744" y="264" width="12" height="12" fill="#434343"/>
<rect x="756" y="264" width="12" height="12" fill="#404040"/>
<rect x="768" y="264" width="12" height="12" fill="#3e3e3e"/>
<rect x="780" y="264" width="12" height="12" fill="#3b3b3b"/>
<rect x="792" y="264" width="12" height="12" fill="#383838"/>
<rect x="804" y="264" width="12" height="12" fill="#363636"/>
<rect x="816" y="264" width="12" height="12" fill="#333333"/>
<rect x="828" y="264" width="12" height="12" fill="#303030"/>
<rect x="840" y="264" width="12" height="12" fill="#2e2e2e"/>
<rect x="852" y="264" width="12" height="12" fill="#2b2b2b"/>
<rect x="864" y="264" width="12" height="12" fill="#292929"/>
<rect x="876" y="264" width="12" height="12" fill="#262626"/>
<rect x="888" y="264" width="12" height="12" fill="#242424"/>
<rect x="900" y="264" width="12" height="12" fill="#222222"/>
<rect x="912" y="264" width="12" height="12" fill="#202020"/>
<rect x="924" y="264" width="12" height="12" fill="#1e1e1e"/>
<rect x="936" y="264" width="12" height="12" fill="#1c1c1c"/>
<rect x="948" y="264" width="12" height="12" fill="#1b1b1b"/>
<rect x="960" y="264" width="12" height="12" fill="#1a1a1a"/>
<rect x="972" y="264" width="12" height="12" fill="#191919"/>
<rect x="984" y="264" width="12" height="12" fill="#191919"/>
<rect x="996" y="264" width="12" height="12" fill="#181818"/>
<rect x="1008" y="264" width="12" height="12" fill="#171717"/>
<rect x="1020" y="264" width="12" height="12" fill="#171717"/>
<rect x="1032" y="264" width="12" height="12" fill="#171717"/>
<rect x="1044" y="264" width="12" height="12" fill="#161616"/>
<rect x="1056" y="264" width="12" height="12" fill="#161616"/>
<rect x="1068" y="264" width="12" height="12" fill="#161616"/>
<rect x="1080" y="264" width="12" height="12" fill="#161616"/>
<rect x="276" y="276" width="12" height="12" fill="#404040"/>
<rect x="288" y="276" width="12" height="12" fill="#404040"/>
<rect x="300" y="276" width="12" height="12" fill="#414141"/>
<rect x="312" y="276" width="12" height="12" fill="#414141"/>
<rect x="324" y="276" width="12" height="12" fill="#424242"/>
<rect x="336" y="276" width="12" height="12" fill="#424242"/>
<rect x="348" y="276" width="12" height="12" fill="#434343"/>
<rect x="360" y="276" width="12" height="12" fill="#434343"/>
<rect x="372" y="276" width="12" height="12" fill="#444444"/>
<rect x="384" y="276" width="12" height="12" fill="#454545"/>
<rect x="396" y="276" width="12" height="12" fill="#464646"/>
<rect x="408" y="276" width="12" height="12" fill="#474747"/>
<rect x="420" y="276" width="12" height="12" fill="#484848"/>
<rect x="432" y="276" width="12" height="12" fill="#494949"/>
<rect x="444" y="276" width="12" height="12" fill="#4b4b4b"/>
<rect x="456" y="276" width="12" height="12" fill="#4c4c4c"/>
<rect x="468" y="276" width="12" height="12" fill="#4e4e4e"/>
<rect x="480" y="276" width="12" height="12" fill="#505050"/>
<rect x="492" y="276" width="12" height="12" fill="#515151"/>
<rect x="504" y="276" width="12" height="12" fill="#525252"/>
<rect x="516" y="276" width="12" height="12" fill="#545454"/>
<rect x="528" y="276" width="12" height="12" fill="#555555"/>
<rect x="540" y="276" width="12" height="12" fill="#565656"/>
<rect x="552" y="276" width="12" height="12" fill="#575757"/>
<rect x="564" y="276" width="12" height="12" fill="#585858"/>
<rect x="576" y="276" width="12" height="12" fill="#585858"/>
<rect x="588" y="276" width="12" height="12" fill="#585858"/>
<rect x="600" y="276" width="12" height="12" fill="#585858"/>
<rect x="612" y="276" width="12" height="12" fill="#575757"/>
<rect x="624" y="276" width="12" height="12" fill="#575757"/>
<rect x="636" y="276" width="12" height="12" fill="#565656"/>
<rect x="648" y="276" width="12" height="12" fill="#555555"/>
<rect x="660" y="276" width="12" height="12" fill="#545454"/>
<rect x="672" y="276" width="12" height="12" fill="#525252"/>
<rect x="684" y="276" width="12" height="12" fill="#505050"/>
<rect x="696" y="276" width="12" height="12" fill="#4e4e4e"/>
<rect x="708" y="276" width="12" height="12" fill="#4c4c4c"/>
<rect x="720" y="276" width="12" height="12" fill="#494949"/>
<rect x="732" y="276" width="12" height="12" fill="#474747"/>
<rect x="744" y="276" width="12" height="12" fill="#444444"/>
<rect x="756" y="276" width="12" height="12" fill="#414141"/>
<rect x="768" y="276" width="12" height="12" fill="#3e3e3e"/>
<rect x="780" y="276" width="12" height="12" fill="#3c3c3c"/>
<rect x="792" y="276" width="12" height="12" fill="#393939"/>
<rect x="804" y="276" width="12" height="12" fill="#363636"/>
<rect x="816" y="276" width="12" height="12" fill="#333333"/>
<rect x="828" y="276" width="12" height="12" fill="#313131"/>
<rect x="840" y="276" width="12" height="12" fill="#2e2e2e"/>
<rect x="852" y="276" width="12" height="12" fill="#2c2c2c"/>
<rect x="864" y="276" width="12" height="12" fill="#292929"/>
<rect x="876" y="276" width="12" height="12" fill="#272727"/>
<rect x="888" y="276" width="12" height="12" fill="#242424"/>
<rect x="900" y="276" width="12" height="12" fill="#222222"/>
<rect x="912" y="276" width="12" height="12" fill="#202020"/>
<rect x="924" y="276" width="12" height="12" fill="#1e1e1e"/>
<rect x="936" y="276" width="12" height="12" fill="#1c1c1c"/>
<rect x="948" y="276" width="12" height="12" fill="#1b1b1b"/>
<rect x="960" y="276" width="12" height="12" fill="#1a1a1a"/>
<rect x="972" y="276" width="12" height="12" fill="#191919"/>
<rect x="984" y="276" width="12" height="12" fill="#191919"/>
<rect x="996" y="276" width="12" height="12" fill="#181818"/>
<rect x="1008" y="276" width="12" height="12" fill="#181818"/>
<rect x="1020" y="276" width="12" height="12" fill="#181818"/>
<rect x="1032" y="276" width="12" height="12" fill="#171717"/>
<rect x="1044" y="276" width="12" height="12" fill="#171717"/>
<rect x="1056" y="276" width="12" height="12" fill="#161616"/>
<rect x="1068" y="276" width="12" height="12" fill="#161616"/>
<rect x="1080" y="276" width="12" height="12" fill="#161616"/>
<rect x="276" y="288" width="12" height="12" fill="#3f3f3f"/>
<rect x="288" y="288" width="12" height="12" fill="#404040"/>
<rect x="300" y="288" width="12" height="12" fill="#404040"/>
<rect x="312" y="288" width="12" height="12" fill="#414141"/>
<rect x="324" y="288" width="12" height="12" fill="#414141"/>
<rect x="336" y="288" width="12" height="12" fill="#424242"/>
<rect x="348" y="288" width="12" height="12" fill="#424242"/>
<rect x="360" y="288" width="12" height="12" fill="#434343"/>
<rect x="372" y="288" width="12" height="12" fill="#434343"/>
<rect x="384" y="288" width="12" height="12" fill="#444444"/>
<rect x="396" y="288" width="12" height="12" fill="#454545"/>
<rect x="408" y="288" width="12" height="12" fill="#464646"/>
<rect x="420" y="288" width="12" height="12" fill="#474747"/>
<rect x="432" y="288" width="12" height="12" fill="#484848"/>
<rect x="444" y="288" width="12" height="12" fill="#4a4a4a"/>
<rect x="456" y="288" width="12" height="12" fill="#4c4c4c"/>
<rect x="468" y="288" width="12" height="12" fill="#4d4d4d"/>
<rect x="480" y="288" width="12" height="12" fill="#4f4f4f"/>
<rect x="492" y="288" width="12" height="12" fill="#515151"/>
<rect x="504" y="288" width="12" height="12" fill="#525252"/>
<rect x="516" y="288" width="12" height="12" fill="#545454"/>
<rect x="528" y="288" width="12" height="12" fill="#555555"/>
<rect x="540" y="288" width="12" height="12" fill="#575757"/>
<rect x="552" y="288" width="12" height="12" fill="#585858"/>
<rect x="564" y="288" width="12" height="12" fill="#595959"/>
<rect x="576" y="288" width="12" height="12" fill="#595959"/>
<rect x="588" y="288" width="12" height="12" fill="#595959"/>
<rect x="600" y="288" width="12" height="12" fill="#595959"/>
<rect x="612" y="288" width="12" height="12" fill="#595959"/>
<rect x="624" y="288" width="12" height="12" fill="#585858"/>
<rect x="636" y="288" width="12" height="12" fill="#575757"/>
<rect x="648" y="288" width="12" height="12" fill="#565656"/>
<rect x="660" y="288" width="12" height="12" fill="#555555"/>
<rect x="672" y="288" width="12" height="12" fill="#545454"/>
<rect x="684" y="288" width="12" height="12" fill="#525252"/>
<rect x="696" y="288" width="12" height="12" fill="#505050"/>
<rect x="708" y="288" width="12" height="12" fill="#4d4d4d"/>
<rect x="720" y="288" width="12" height="12" fill="#4a4a4a"/>
<rect x="732" y="288" width="12" height="12" fill="#484848"/>
<rect x="744" y="288" width="12" height="12" fill="#454545"/>
<rect x="756" y="288" width="12" height="12" fill="#424242"/>
<rect x="768" y="288" width="12" height="12" fill="#3f3f3f"/>
<rect x="780" y="288" width="12" height="12" fill="#3c3c3c"/>
<rect x="792" y="288" width="12" height="12" fill="#393939"/>
<rect x="804" y="288" width="12" height="12" fill="#373737"/>
<rect x="816" y="288" width="12" height="12" fill="#343434"/>
<rect x="828" y="288" width="12" height="12" fill="#313131"/>
<rect x="840" y="288" width="12" height="12" fill="#2f2f2f"/>
<rect x="852" y="288" width="12" height="12" fill="#2c2c2c"/>
<rect x="864" y="288" width="12" height="12" fill="#2a2a2a"/>
<rect x="876" y="288" width="12" height="12" fill="#272727"/>
<rect x="888" y="288" width="12" height="12" fill="#252525"/>
<rect x="900" y="288" width="12" height="12" fill="#222222"/>
<rect x="912" y="288" width="12" height="12" fill="#202020"/>
<rect x="924" y="288" width="12" height="12" fill="#1e1e1e"/>
<rect x="936" y="288" width="12" height="12" fill="#1c1c1c"/>
<rect x="948" y="288" width="12" height="12" fill="#1b1b1b"/>
<rect x="960" y="288" width="12" height="12" fill="#1a1a1a"/>
<rect x="972" y="288" width="12" height="12" fill="#1a1a1a"/>
<rect x="984" y="288" width="12" height="12" fill="#191919"/>
<rect x="996" y="288" width="12" height="12" fill="#191919"/>
<rect x="1008" y="288" width="12" height="12" fill="#191919"/>
<rect x="1020" y="288" width="12" height="12" fill="#181818"/>
<rect x="1032" y="288" width="12" height="12" fill="#181818"/>
<rect x="1044" y="288" width="12" height="12" fill="#171717"/>
<rect x="1056" y="288" width="12" height="12" fill="#171717"/>
<rect x="1068" y="288" width="12" height="12" fill="#161616"/>
<rect x="1080" y="288" width="12" height="12" fill="#161616"/>
<rect x="276" y="300" width="12" height="12" fill="#3f3f3f"/>
<rect x="288" y="300" width="12" height="12" fill="#3f3f3f"/>
<rect x="300" y="300" width="12" height="12" fill="#404040"/>
<rect x="312" y="300" width="12" height="12" fill="#404040"/>
<rect x="324" y="300" width="12" height="12" fill="#414141"/>
<rect x="336" y="300" width="12" height="12" fill="#414141"/>
<rect x="348" y="300" width="12" height="12" fill="#424242"/>
<rect x="360" y="300" width="12" height="12" fill="#424242"/>
<rect x="372" y="300" width="12" height="12" fill="#434343"/>
<rect x="384" y="300" width="12" height="12" fill="#444444"/>
<rect x="396" y="300" width="12" height="12" fill="#444444"/>
<rect x="408" y="300" width="12" height="12" fill="#454545"/>
<rect x="420" y="300" width="12" height="12" fill="#464646"/>
<rect x="432" y="300" width="12" height="12" fill="#484848"/>
<rect x="444" y="300" width="12" height="12" fill="#494949"/>
<rect x="456" y="300" width="12" height="12" fill="#4b4b4b"/>
<rect x="468" y="300" width="12" height="12" fill="#4d4d4d"/>
<rect x="480" y="300" width="12" height="12" fill="#4e4e4e"/>
<rect x="492" y="300" width="12" height="12" fill="#505050"/>
<rect x="504" y="300" width="12" height="12" fill="#525252"/>
<rect x="516" y="300" width="12" height="12" fill="#535353"/>
<rect x="528" y="300" width="12" height="12" fill="#555555"/>
<rect x="540" y="300" width="12" height="12" fill="#575757"/>
<rect x="552" y="300" width="12" height="12" fill="#585858"/>
<rect x="564" y="300" width="12" height="12" fill="#595959"/>
<rect x="576" y="300" width="12" height="12" fill="#5a5a5a"/>
<rect x="588" y="300" width="12" height="12" fill="#5a5a5a"/>
<rect x="600" y="300" width="12" height="12" fill="#5a5a5a"/>
<rect x="612" y="300" width="12" height="12" fill="#5a5a5a"/>
<rect x="624" y="300" width="12" height="12" fill="#595959"/>
<rect x="636" y="300" width="12" height="12" fill="#595959"/>
<rect x="648" y="300" width="12" height="12" fill="#585858"/>
<rect x="660" y="300" width="12" height="12" fill="#565656"/>
<rect x="672" y="300" width="12" height="12" fill="#555555"/>
<rect x="684" y="300" width="12" height="12" fill="#535353"/>
<rect x="696" y="300" width="12" height="12" fill="#515151"/>
<rect x="708" y="300" width="12" height="12" fill="#4e4e4e"/>
<rect x="720" y="300" width="12" height="12" fill="#4b4b4b"/>
<rect x="732" y="300" width="12" height="12" fill="#484848"/>
<rect x="744" y="300" width="12" height="12" fill="#454545"/>
<rect x="756" y="300" width="12" height="12" fill="#424242"/>
<rect x="768" y="300" width="12" height="12" fill="#3f3f3f"/>
<rect x="780" y="300" width="12" height="12" fill="#3d3d3d"/>
<rect x="792" y="300" width="12" height="12" fill="#3a3a3a"/>
<rect x="804" y="300" width="12" height="12" fill="#373737"/>
<rect x="816" y="300" width="12" height="12" fill="#353535"/>
<rect x="828" y="300" width="12" height="12" fill="#323232"/>
<rect x="840" y="300" width="12" height="12" fill="#2f2f2f"/>
<rect x="852" y="300" width="12" height="12" fill="#2d2d2d"/>
<rect x="864" y="300" width="12" height="12" fill="#2a2a2a"/>
<rect x="876" y="300" width="12" height="12" fill="#282828"/>
<rect x="888" y="300" width="12" height="12" fill="#252525"/>
<rect x="900" y="300" width="12" height="12" fill="#232323"/>
<rect x="912" y="300" width="12" height="12" fill="#202020"/>
<rect x="924" y="300" width="12" height="12" fill="#1e1e1e"/>
<rect x="936" y="300" width="12" height="12" fill="#1c1c1c"/>
<rect x="948" y="300" width="12" height="12" fill="#1b1b1b"/>
<rect x="960" y="300" width="12" height="12" fill="#1a1a1a"/>
<rect x="972" y="300" width="12" height="12" fill="#1a1a1a"/>
<rect x="984" y="300" width="12" height="12" fill="#1a1a1a"/>
<rect x="996" y="300" width="12" height="12" fill="#1a1a1a"/>
<rect x="1008" y="300" width="12" height="12" fill="#191919"/>
<rect x="1020" y="300" width="12" height="12" fill="#191919"/>
<rect x="1032" y="300" width="12" height="12" fill="#181818"/>
<rect x="1044" y="300" width="12" height="12" fill="#181818"/>
<rect x="1056" y="300" width="12" height="12" fill="#181818"/>
<rect x="1068" y="300" width="12" height="12" fill="#171717"/>
<rect x="1080" y="300" width="12" height="12" fill="#171717"/>
<rect x="276" y="312" width="12" height="12" fill="#3f3f3f"/>
<rect x="288" y="312" width="12" height="12" fill="#3f3f3f"/>
<rect x="300" y="312" width="12" height="12" fill="#404040"/>
<rect x="312" y="312" width="12" height="12" fill="#404040"/>
<rect x="324" y="312" width="12" height="12" fill="#414141"/>
<rect x="336" y="312" width="12" height="12" fill="#414141"/>
<rect x="348" y="312" width="12" height="12" fill="#414141"/>
<rect x="360" y="312" width="12" height="12" fill="#424242"/>
<rect x="372" y="312" width="12" height="12" fill="#424242"/>
<rect x="384" y="312" width="12" height="12" fill="#434343"/>
<rect x="396" y="312" width="12" height="12" fill="#444444"/>
<rect x="408" y="312" width="12" height="12" fill="#444444"/>
<rect x="420" y="312" width="12" height="12" fill="#454545"/>
<rect x="432" y="312" width="12" height="12" fill="#474747"/>
<rect x="444" y="312" width="12" height="12" fill="#484848"/>
<rect x="456" y="312" width="12" height="12" fill="#4a4a4a"/>
<rect x="468" y="312" width="12" height="12" fill="#4b4b4b"/>
<rect x="480" y="312" width="12" height="12" fill="#4d4d4d"/>
<rect x="492" y="312" width="12" height="12" fill="#4f4f4f"/>
<rect x="504" y="312" width="12" height="12" fill="#515151"/>
<rect x="516" y="312" width="12" height="12" fill="#535353"/>
<rect x="528" y="312" width="12" height="12" fill="#545454"/>
<rect x="540" y="312" width="12" height="12" fill="#565656"/>
<rect x="552" y="312" width="12" height="12" fill="#585858"/>
<rect x="564" y="312" width="12" height="12" fill="#595959"/>
<rect x="576" y="312" width="12" height="12" fill="#5a5a5a"/>
<rect x="588" y="312" width="12" height="12" fill="#5b5b5b"/>
<rect x="600" y="312" width="12" height="12" fill="#5b5b5b"/>
<rect x="612" y="312" width="12" height="12" fill="#5b5b5b"/>
<rect x="624" y="312" width="12" height="12" fill="#5a5a5a"/>
<rect x="636" y="312" width="12" height="12" fill="#5a5a5a"/>
<rect x="648" y="312" width="12" height="12" fill="#595959"/>
<rect x="660" y="312" width="12" height="12" fill="#585858"/>
<rect x="672" y="312" width="12" height="12" fill="#565656"/>
<rect x="684" y="312" width="12" height="12" fill="#545454"/>
<rect x="696" y="312" width="12" height="12" fill="#525252"/>
<rect x="708" y="312" width="12" height="12" fill="#4f4f4f"/>
<rect x="720" y="312" width="12" height="12" fill="#4c4c4c"/>
<rect x="732" y="312" width="12" height="12" fill="#494949"/>
<rect x="744" y="312" width="12" height="12" fill="#464646"/>
<rect x="756" y="312" width="12" height="12" fill="#434343"/>
<rect x="768" y="312" width="12" height="12" fill="#404040"/>
<rect x="780" y="312" width="12" height="12" fill="#3d3d3d"/>
<rect x="792" y="312" width="12" height="12" fill="#3a3a3a"/>
<rect x="804" y="312" width="12" height="12" fill="#383838"/>
<rect x="816" y="312" width="12" height="12" fill="#353535"/>
<rect x="828" y="312" width="12" height="12" fill="#323232"/>
<rect x="840" y="312" width="12" height="12" fill="#303030"/>
<rect x="852" y="312" width="12" height="12" fill="#2d2d2d"/>
<rect x="864" y="312" width="12" height="12" fill="#2b2b2b"/>
<rect x="876" y="312" width="12" height="12" fill="#282828"/>
<rect x="888" y="312" width="12" height="12" fill="#262626"/>
<rect x="900" y="312" width="12" height="12" fill="#232323"/>
<rect x="912" y="312" width="12" height="12" fill="#212121"/>
<rect x="924" y="312" width="12" height="12" fill="#1f1f1f"/>
<rect x="936" y="312" width="12" height="12" fill="#1d1d1d"/>
<rect x="948" y="312" width="12" height="12" fill="#1b1b1b"/>
<rect x="960" y="312" width="12" height="12" fill="#1b1b1b"/>
<rect x="972" y="312" width="12" height="12" fill="#1b1b1b"/>
<rect x="984" y="312" width="12" height="12" fill="#1b1b1b"/>
<rect x="996" y="312" width="12" height="12" fill="#1a1a1a"/>
<rect x="1008" y="312" width="12" height="12" fill="#1a1a1a"/>
<rect x="1020" y="312" width="12" height="12" fill="#1a1a1a"/>
<rect x="1032" y="312" width="12" height="12" fill="#191919"/>
<rect x="1044" y="312" width="12" height="12" fill="#191919"/>
<rect x="1056" y="312" width="12" height="12" fill="#181818"/>
<rect x="1068" y="312" width="12" height="12" fill="#181818"/>
<rect x="1080" y="312" width="12" height="12" fill="#181818"/>
<rect x="276" y="324" width="12" height="12" fill="#3f3f3f"/>
<rect x="288" y="324" width="12" height="12" fill="#3f3f3f"/>
<rect x="300" y="324" width="12" height="12" fill="#3f3f3f"/>
<rect x="312" y="324" width="12" height="12" fill="#404040"/>
<rect x="324" y="324" width="12" height="12" fill="#404040"/>
<rect x="336" y="324" width="12" height="12" fill="#414141"/>
<rect x="348" y="324" width="12" height="12" fill="#414141"/>
<rect x="360" y="324" width="12" height="12" fill="#414141"/>
<rect x="372" y="324" width="12" height="12" fill="#424242"/>
<rect x="384" y="324" width="12" height="12" fill="#424242"/>
<rect x="396" y="324" width="12" height="12" fill="#434343"/>
<rect x="408" y="324" width="12" height="12" fill="#444444"/>
<rect x="420" y="324" width="12" height="12" fill="#444444"/>
<rect x="432" y="324" width="12" height="12" fill="#464646"/>
<rect x="444" y="324" width="12" height="12" fill="#474747"/>
<rect x="456" y="324" width="12" height="12" fill="#494949"/>
<rect x="468" y="324" width="12" height="12" fill="#4a4a4a"/>
<rect x="480" y="324" width="12" height="12" fill="#4c4c4c"/>
<rect x="492" y="324" width="12" height="12" fill="#4e4e4e"/>
<rect x="504" y="324" width="12" height="12" fill="#505050"/>
<rect x="516" y="324" width="12" height="12" fill="#525252"/>
<rect x="528" y="324" width="12" height="12" fill="#545454"/>
<rect x="540" y="324" width="12" height="12" fill="#565656"/>
<rect x="552" y="324" width="12" height="12" fill="#585858"/>
<rect x="564" y="324" width="12" height="12" fill="#595959"/>
<rect x="576" y="324" width="12" height="12" fill="#5a5a5a"/>
<rect x="588" y="324" width="12" height="12" fill="#5b5b5b"/>
<rect x="600" y="324" width="12" height="12" fill="#5b5b5b"/>
<rect x="612" y="324" width="12" height="12" fill="#5b5b5b"/>
<rect x="624" y="324" width="12" height="12" fill="#5b5b5b"/>
<rect x="636" y="324" width="12" height="12" fill="#5b5b5b"/>
<rect x="648" y="324" width="12" height="12" fill="#5a5a5a"/>
<rect x="660" y="324" width="12" height="12" fill="#595959"/>
<rect x="672" y="324" width="12" height="12" fill="#575757"/>
<rect x="684" y="324" width="12" height="12" fill="#565656"/>
<rect x="696" y="324" width="12" height="12" fill="#535353"/>
<rect x="708" y="324" width="12" height="12" fill="#505050"/>
<rect x="720" y="324" width="12" height="12" fill="#4d4d4d"/>
<rect x="732" y="324" width="12" height="12" fill="#4a4a4a"/>
<rect x="744" y="324" width="12" height="12" fill="#464646"/>
<rect x="756" y="324" width="12" height="12" fill="#434343"/>
<rect x="768" y="324" width="12" height="12" fill="#404040"/>
<rect x="780" y="324" width="12" height="12" fill="#3e3e3e"/>
<rect x="792" y="324" width="12" height="12" fill="#3b3b3b"/>
<rect x="804" y="324" width="12" height="12" fill="#383838"/>
<rect x="816" y="324" width="12" height="12" fill="#363636"/>
<rect x="828" y="324" width="12" height="12" fill="#333333"/>
<rect x="840" y="324" width="12" height="12" fill="#303030"/>
<rect x="852" y="324" width="12" height="12" fill="#2e2e2e"/>
<rect x="864" y="324" width="12" height="12" fill="#2b2b2b"/>
<rect x="876" y="324" width="12" height="12" fill="#292929"/>
<rect x="888" y="324" width="12" height="12" fill="#262626"/>
<rect x="900" y="324" width="12" height="12" fill="#242424"/>
<rect x="912" y="324" width="12" height="12" fill="#212121"/>
<rect x="924" y="324" width="12" height="12" fill="#1f1f1f"/>
<rect x="936" y="324" width="12" height="12" fill="#1d1d1d"/>
<rect x="948" y="324" width="12" height="12" fill="#1c1c1c"/>
<rect x="960" y="324" width="12" height="12" fill="#1c1c1c"/>
<rect x="972" y="324" width="12" height="12" fill="#1b1b1b"/>
<rect x="984" y="324" width="12" height="12" fill="#1b1b1b"/>
<rect x="996" y="324" width="12" height="12" fill="#1b1b1b"/>
<rect x="1008" y="324" width="12" height="12" fill="#1b1b1b"/>
<rect x="1020" y="324" width="12" height="12" fill="#1a1a1a"/>
<rect x="1032" y="324" width="12" height="12" fill="#1a1a1a"/>
<rect x="1044" y="324" width="12" height="12" fill="#191919"/>
<rect x="1056" y="324" width="12" height="12" fill="#191919"/>
<rect x="1068" y="324" width="12" height="12" fill="#191919"/>
<rect x="1080" y="324" width="12" height="12" fill="#181818"/>
<rect x="276" y="336" width="12" height="12" fill="#3e3e3e"/>
<rect x="288" y="336" width="12" height="12" fill="#3f3f3f"/>
<rect x="300" y="336" width="12" height="12" fill="#3f3f3f"/>
<rect x="312" y="336" width="12" height="12" fill="#404040"/>
<rect x="324" y="336" width="12" height="12" fill="#404040"/>
<rect x="336" y="336" width="12" height="12" fill="#404040"/>
<rect x="348" y="336" width="12" height="12" fill="#414141"/>
<rect x="360" y="336" width="12" height="12" fill="#414141"/>
<rect x="372" y="336" width="12" height="12" fill="#424242"/>
<rect x="384" y="336" width="12" height="12" fill="#424242"/>
<rect x="396" y="336" width="12" height="12" fill="#424242"/>
<rect x="408" y="336" width="12" height="12" fill="#434343"/>
<rect x="420" y="336" width="12" height="12" fill="#444444"/>
<rect x="432" y="336" width="12" height="12" fill="#454545"/>
<rect x="444" y="336" width="12" height="12" fill="#464646"/>
<rect x="456" y="336" width="12" height="12" fill="#484848"/>
<rect x="468" y="336" width="12" height="12" fill="#494949"/>
<rect x="480" y="336" width="12" height="12" fill="#4b4b4b"/>
<rect x="492" y="336" width="12" height="12" fill="#4c4c4c"/>
<rect x="504" y="336" width="12" height="12" fill="#4e4e4e"/>
<rect x="516" y="336" width="12" height="12" fill="#505050"/>
<rect x="528" y="336" width="12" height="12" fill="#535353"/>
<rect x="540" y="336" width="12" height="12" fill="#555555"/>
<rect x="552" y="336" width="12" height="12" fill="#575757"/>
<rect x="564" y="336" width="12" height="12" fill="#595959"/>
<rect x="576" y="336" width="12" height="12" fill="#5a5a5a"/>
<rect x="588" y="336" width="12" height="12" fill="#5b5b5b"/>
<rect x="600" y="336" width="12" height="12" fill="#5b5b5b"/>
<rect x="612" y="336" width="12" height="12" fill="#5c5c5c"/>
<rect x="624" y="336" width="12" height="12" fill="#5c5c5c"/>
<rect x="636" y="336" width="12" height="12" fill="#5c5c5c"/>
<rect x="648" y="336" width="12" height="12" fill="#5b5b5b"/>
<rect x="660" y="336" width="12" height="12" fill="#5a5a5a"/>
<rect x="672" y="336" width="12" height="12" fill="#595959"/>
<rect x="684" y="336" width="12" height="12" fill="#575757"/>
<rect x="696" y="336" width="12" height="12" fill="#545454"/>
<rect x="708" y="336" width="12" height="12" fill="#515151"/>
<rect x="720" y="336" width="12" height="12" fill="#4e4e4e"/>
<rect x="732" y="336" width="12" height="12" fill="#4a4a4a"/>
<rect x="744" y="336" width="12" height="12" fill="#474747"/>
<rect x="756" y="336" width="12" height="12" fill="#444444"/>
<rect x="768" y="336" width="12" height="12" fill="#414141"/>
<rect x="780" y="336" width="12" height="12" fill="#3e3e3e"/>
<rect x="792" y="336" width="12" height="12" fill="#3c3c3c"/>
<rect x="804" y="336" width="12" height="12" fill="#393939"/>
<rect x="816" y="336" width="12" height="12" fill="#363636"/>
<rect x="828" y="336" width="12" height="12" fill="#343434"/>
<rect x="840" y="336" width="12" height="12" fill="#313131"/>
<rect x="852" y="336" width="12" height="12" fill="#2f2f2f"/>
<rect x="864" y="336" width="12" height="12" fill="#2c2c2c"/>
<rect x="876" y="336" width="12" height="12" fill="#2a2a2a"/>
<rect x="888" y="336" width="12" height="12" fill="#272727"/>
<rect x="900" y="336" width="12" height="12" fill="#252525"/>
<rect x="912" y="336" width="12" height="12" fill="#222222"/>
<rect x="924" y="336" width="12" height="12" fill="#202020"/>
<rect x="936" y="336" width="12" height="12" fill="#1e1e1e"/>
<rect x="948" y="336" width="12" height="12" fill="#1d1d1d"/>
<rect x="960" y="336" width="12" height="12" fill="#1d1d1d"/>
<rect x="972" y="336" width="12" height="12" fill="#1c1c1c"/>
<rect x="984" y="336" width="12" height="12" fill="#1c1c1c"/>
<rect x="996" y="336" width="12" height="12" fill="#1c1c1c"/>
<rect x="1008" y="336" width="12" height="12" fill="#1b1b1b"/>
<rect x="1020" y="336" width="12" height="12" fill="#1b1b1b"/>
<rect x="1032" y="336" width="12" height="12" fill="#1a1a1a"/>
<rect x="1044" y="336" width="12" height="12" fill="#1a1a1a"/>
<rect x="1056" y="336" width="12" height="12" fill="#1a1a1a"/>
<rect x="1068" y="336" width="12" height="12" fill="#191919"/>
<rect x="1080" y="336" width="12" height="12" fill="#191919"/>
<rect x="276" y="348" width="12" height="12" fill="#3e3e3e"/>
<rect x="288" y="348" width="12" height="12" fill="#3e3e3e"/>
<rect x="300" y="348" width="12" height="12" fill="#3f3f3f"/>
<rect x="312" y="348" width="12" height="12" fill="#3f3f3f"/>
<rect x="324" y="348" width="12" height="12" fill="#404040"/>
<rect x="336" y="348" width="12" height="12" fill="#404040"/>
<rect x="348" y="348" width="12" height="12" fill="#414141"/>
<rect x="360" y="348" width="12" height="12" fill="#414141"/>
<rect x="372" y="348" width="12" height="12" fill="#414141"/>
<rect x="384" y="348" width="12" height="12" fill="#424242"/>
<rect x="396" y="348" width="12" height="12" fill="#424242"/>
<rect x="408" y="348" width="12" height="12" fill="#434343"/>
<rect x="420" y="348" width="12" height="12" fill="#434343"/>
<rect x="432" y="348" width="12" height="12" fill="#444444"/>
<rect x="444" y="348" width="12" height="12" fill="#464646"/>
<rect x="456" y="348" width="12" height="12" fill="#474747"/>
<rect x="468" y="348" width="12" height="12" fill="#484848"/>
<rect x="480" y="348" width="12" height="12" fill="#494949"/>
<rect x="492" y="348" width="12" height="12" fill="#4b4b4b"/>
<rect x="504" y="348" width="12" height="12" fill="#4d4d4d"/>
<rect x="516" y="348" width="12" height="12" fill="#4f4f4f"/>
<rect x="528" y="348" width="12" height="12" fill="#515151"/>
<rect x="540" y="348" width="12" height="12" fill="#545454"/>
<rect x="552" y="348" width="12" height="12" fill="#565656"/>
<rect x="564" y="348" width="12" height="12" fill="#585858"/>
<rect x="576" y="348" width="12" height="12" fill="#5a5a5a"/>
<rect x="588" y="348" width="12" height="12" fill="#5b5b5b"/>
<rect x="600" y="348" width="12" height="12" fill="#5b5b5b"/>
<rect x="612" y="348" width="12" height="12" fill="#5c5c5c"/>
<rect x="624" y="348" width="12" height="12" fill="#5c5c5c"/>
<rect x="636" y="348" width="12" height="12" fill="#5c5c5c"/>
<rect x="648" y="348" width="12" height="12" fill="#5c5c5c"/>
<rect x="660" y="348" width="12" height="12" fill="#5b5b5b"/>
<rect x="672" y="348" width="12" height="12" fill="#5a5a5a"/>
<rect x="684" y="348" width="12" height="12" fill="#585858"/>
<rect x="696" y="348" width="12" height="12" fill="#555555"/>
<rect x="708" y="348" width="12" height="12" fill="#525252"/>
<rect x="720" y="348" width="12" height="12" fill="#4e4e4e"/>
<rect x="732" y="348" width="12" height="12" fill="#4a4a4a"/>
<rect x="744" y="348" width="12" height="12" fill="#474747"/>
<rect x="756" y="348" width="12" height="12" fill="#444444"/>
<rect x="768" y="348" width="12" height="12" fill="#414141"/>
<rect x="780" y="348" width="12" height="12" fill="#3f3f3f"/>
<rect x="792" y="348" width="12" height="12" fill="#3c3c3c"/>
<rect x="804" y="348" width="12" height="12" fill="#3a3a3a"/>
<rect x="816" y="348" width="12" height="12" fill="#373737"/>
<rect x="828" y="348" width="12" height="12" fill="#353535"/>
<rect x="840" y="348" width="12" height="12" fill="#323232"/>
<rect x="852" y="348" width="12" height="12" fill="#2f2f2f"/>
<rect x="864" y="348" width="12" height="12" fill="#2d2d2d"/>
<rect x="876" y="348" width="12" height="12" fill="#2a2a2a"/>
<rect x="888" y="348" width="12" height="12" fill="#282828"/>
<rect x="900" y="348" width="12" height="12" fill="#252525"/>
<rect x="912" y="348" width="12" height="12" fill="#232323"/>
<rect x="924" y="348" width="12" height="12" fill="#212121"/>
<rect x="936" y="348" width="12" height="12" fill="#202020"/>
<rect x="948" y="348" width="12" height="12" fill="#1f1f1f"/>
<rect x="960" y="348" width="12" height="12" fill="#1e1e1e"/>
<rect x="972" y="348" width="12" height="12" fill="#1d1d1d"/>
<rect x="984" y="348" width="12" height="12" fill="#1d1d1d"/>
<rect x="996" y="348" width="12" height="12" fill="#1c1c1c"/>
<rect x="1008" y="348" width="12" height="12" fill="#1b1b1b"/>
<rect x="1020" y="348" width="12" height="12" fill="#1b1b1b"/>
<rect x="1032" y="348" width="12" height="12" fill="#1b1b1b"/>
<rect x="1044" y="348" width="12" height="12" fill="#1b1b1b"/>
<rect x="1056" y="348" width="12" height="12" fill="#1a1a1a"/>
<rect x="1068" y="348" width="12" height="12" fill="#1a1a1a"/>
<rect x="1080" y="348" width="12" height="12" fill="#1a1a1a"/>
<rect x="276" y="360" width="12" height="12" fill="#3e3e3e"/>
<rect x="288" y="360" width="12" height="12" fill="#3e3e3e"/>
<rect x="300" y="360" width="12" height="12" fill="#3f3f3f"/>
<rect x="312" y="360" width="12" height="12" fill="#3f3f3f"/>
<rect x="324" y="360" width="12" height="12" fill="#404040"/>
<rect x="336" y="360" width="12" height="12" fill="#404040"/>
<rect x="348" y="360" width="12" height="12" fill="#414141"/>
<rect x="360" y="360" width="12" height="12" fill="#414141"/>
<rect x="372" y="360" width="12" height="12" fill="#414141"/>
<rect x="384" y="360" width="12" height="12" fill="#424242"/>
<rect x="396" y="360" width="12" height="12" fill="#424242"/>
<rect x="408" y="360" width="12" height="12" fill="#434343"/>
<rect x="420" y="360" width="12" height="12" fill="#434343"/>
<rect x="432" y="360" width="12" height="12" fill="#444444"/>
<rect x="444" y="360" width="12" height="12" fill="#454545"/>
<rect x="456" y="360" width="12" height="12" fill="#464646"/>
<rect x="468" y="360" width="12" height="12" fill="#474747"/>
<rect x="480" y="360" width="12" height="12" fill="#484848"/>
<rect x="492" y="360" width="12" height="12" fill="#4a4a4a"/>
<rect x="504" y="360" width="12" height="12" fill="#4c4c4c"/>
<rect x="516" y="360" width="12" height="12" fill="#4e4e4e"/>
<rect x="528" y="360" width="12" height="12" fill="#505050"/>
<rect x="540" y="360" width="12" height="12" fill="#535353"/>
<rect x="552" y="360" width="12" height="12" fill="#555555"/>
<rect x="564" y="360" width="12" height="12" fill="#575757"/>
<rect x="576" y="360" width="12" height="12" fill="#595959"/>
<rect x="588" y="360" width="12" height="12" fill="#5a5a5a"/>
<rect x="600" y="360" width="12" height="12" fill="#5b5b5b"/>
<rect x="612" y="360" width="12" height="12" fill="#5c5c5c"/>
<rect x="624" y="360" width="12" height="12" fill="#5c5c5c"/>
<rect x="636" y="360" width="12" height="12" fill="#5c5c5c"/>
<rect x="648" y="360" width="12" height="12" fill="#5c5c5c"/>
<rect x="660" y="360" width="12" height="12" fill="#5c5c5c"/>
<rect x="672" y="360" width="12" height="12" fill="#5a5a5a"/>
<rect x="684" y="360" width="12" height="12" fill="#585858"/>
<rect x="696" y="360" width="12" height="12" fill="#565656"/>
<rect x="708" y="360" width="12" height="12" fill="#525252"/>
<rect x="720" y="360" width="12" height="12" fill="#4e4e4e"/>
<rect x="732" y="360" width="12" height="12" fill="#4a4a4a"/>
<rect x="744" y="360" width="12" height="12" fill="#474747"/>
<rect x="756" y="360" width="12" height="12" fill="#444444"/>
<rect x="768" y="360" width="12" height="12" fill="#424242"/>
<rect x="780" y="360" width="12" height="12" fill="#3f3f3f"/>
<rect x="792" y="360" width="12" height="12" fill="#3d3d3d"/>
<rect x="804" y="360" width="12" height="12" fill="#3b3b3b"/>
<rect x="816" y="360" width="12" height="12" fill="#383838"/>
<rect x="828" y="360" width="12" height="12" fill="#363636"/>
<rect x="840" y="360" width="12" height="12" fill="#333333"/>
<rect x="852" y="360" width="12" height="12" fill="#303030"/>
<rect x="864" y="360" width="12" height="12" fill="#2e2e2e"/>
<rect x="876" y="360" width="12" height="12" fill="#2b2b2b"/>
<rect x="888" y="360" width="12" height="12" fill="#292929"/>
<rect x="900" y="360" width="12" height="12" fill="#262626"/>
<rect x="912" y="360" width="12" height="12" fill="#242424"/>
<rect x="924" y="360" width="12" height="12" fill="#232323"/>
<rect x="936" y="360" width="12" height="12" fill="#212121"/>
<rect x="948" y="360" width="12" height="12" fill="#202020"/>
<rect x="960" y="360" width="12" height="12" fill="#1f1f1f"/>
<rect x="972" y="360" width="12" height="12" fill="#1e1e1e"/>
<rect x="984" y="360" width="12" height="12" fill="#1d1d1d"/>
<rect x="996" y="360" width="12" height="12" fill="#1c1c1c"/>
<rect x="1008" y="360" width="12" height="12" fill="#1c1c1c"/>
<rect x="1020" y="360" width="12" height="12" fill="#1c1c1c"/>
<rect x="1032" y="360" width="12" height="12" fill="#1b1b1b"/>
<rect x="1044" y="360" width="12" height="12" fill="#1b1b1b"/>
<rect x="1056" y="360" width="12" height="12" fill="#1b1b1b"/>
<rect x="1068" y="360" width="12" height="12" fill="#1b1b1b"/>
<rect x="1080" y="360" width="12" height="12" fill="#1b1b1b"/>
<rect x="276" y="372" width="12" height="12" fill="#3e3e3e"/>
<rect x="288" y="372" width="12" height="12" fill="#3e3e3e"/>
<rect x="300" y="372" width="12" height="12" fill="#3f3f3f"/>
<rect x="312" y="372" width="12" height="12" fill="#3f3f3f"/>
<rect x="324" y="372" width="12" height="12" fill="#404040"/>
<rect x="336" y="372" width="12" height="12" fill="#404040"/>
<rect x="348" y="372" width="12" height="12" fill="#404040"/>
<rect x="360" y="372" width="12" height="12" fill="#414141"/>
<rect x="372" y="372" width="12" height="12" fill="#414141"/>
<rect x="384" y="372" width="12" height="12" fill="#424242"/>
<rect x="396" y="372" width="12" height="12" fill="#424242"/>
<rect x="408" y="372" width="12" height="12" fill="#434343"/>
<rect x="420" y="372" width="12" height="12" fill="#444444"/>
<rect x="432" y="372" width="12" height="12" fill="#444444"/>
<rect x="444" y="372" width="12" height="12" fill="#454545"/>
<rect x="456" y="372" width="12" height="12" fill="#464646"/>
<rect x="468" y="372" width="12" height="12" fill="#474747"/>
<rect x="480" y="372" width="12" height="12" fill="#484848"/>
<rect x="492" y="372" width="12" height="12" fill="#494949"/>
<rect x="504" y="372" width="12" height="12" fill="#4a4a4a"/>
<rect x="516" y="372" width="12" height="12" fill="#4c4c4c"/>
<rect x="528" y="372" width="12" height="12" fill="#4f4f4f"/>
<rect x="540" y="372" width="12" height="12" fill="#515151"/>
<rect x="552" y="372" width="12" height="12" fill="#545454"/>
<rect x="564" y="372" width="12" height="12" fill="#565656"/>
<rect x="576" y="372" width="12" height="12" fill="#585858"/>
<rect x="588" y="372" width="12" height="12" fill="#5a5a5a"/>
<rect x="600" y="372" width="12" height="12" fill="#5b5b5b"/>
<rect x="612" y="372" width="12" height="12" fill="#5c5c5c"/>
<rect x="624" y="372" width="12" height="12" fill="#5c5c5c"/>
<rect x="636" y="372" width="12" height="12" fill="#5d5d5d"/>
<rect x="648" y="372" width="12" height="12" fill="#5d5d5d"/>
<rect x="660" y="372" width="12" height="12" fill="#5c5c5c"/>
<rect x="672" y="372" width="12" height="12" fill="#5b5b5b"/>
<rect x="684" y="372" width="12" height="12" fill="#595959"/>
<rect x="696" y="372" width="12" height="12" fill="#575757"/>
<rect x="708" y="372" width="12" height="12" fill="#535353"/>
<rect x="720" y="372" width="12" height="12" fill="#4f4f4f"/>
<rect x="732" y="372" width="12" height="12" fill="#4b4b4b"/>
<rect x="744" y="372" width="12" height="12" fill="#484848"/>
<rect x="756" y="372" width="12" height="12" fill="#454545"/>
<rect x="768" y="372" width="12" height="12" fill="#424242"/>
<rect x="780" y="372" width="12" height="12" fill="#404040"/>
<rect x="792" y="372" width="12" height="12" fill="#3e3e3e"/>
<rect x="804" y="372" width="12" height="12" fill="#3c3c3c"/>
<rect x="816" y="372" width="12" height="12" fill="#393939"/>
<rect x="828" y="372" width="12" height="12" fill="#373737"/>
<rect x="840" y="372" width="12" height="12" fill="#343434"/>
<rect x="852" y="372" width="12" height="12" fill="#313131"/>
<rect x="864" y="372" width="12" height="12" fill="#2f2f2f"/>
<rect x="876" y="372" width="12" height="12" fill="#2c2c2c"/>
<rect x="888" y="372" width="12" height="12" fill="#2a2a2a"/>
<rect x="900" y="372" width="12" height="12" fill="#282828"/>
<rect x="912" y="372" width="12" height="12" fill="#262626"/>
<rect x="924" y="372" width="12" height="12" fill="#252525"/>
<rect x="936" y="372" width="12" height="12" fill="#232323"/>
<rect x="948" y="372" width="12" height="12" fill="#222222"/>
<rect x="960" y="372" width="12" height="12" fill="#212121"/>
<rect x="972" y="372" width="12" height="12" fill="#1f1f1f"/>
<rect x="984" y="372" width="12" height="12" fill="#1e1e1e"/>
<rect x="996" y="372" width="12" height="12" fill="#1d1d1d"/>
<rect x="1008" y="372" width="12" height="12" fill="#1d1d1d"/>
<rect x="1020" y="372" width="12" height="12" fill="#1c1c1c"/>
<rect x="1032" y="372" width="12" height="12" fill="#1c1c1c"/>
<rect x="1044" y="372" width="12" height="12" fill="#1c1c1c"/>
<rect x="1056" y="372" width="12" height="12" fill="#1c1c1c"/>
<rect x="1068" y="372" width="12" height="12" fill="#1c1c1c"/>
<rect x="1080" y="372" width="12" height="12" fill="#1c1c1c"/>
<rect x="276" y="384" width="12" height="12" fill="#3d3d3d"/>
<rect x="288" y="384" width="12" height="12" fill="#3e3e3e"/>
<rect x="300" y="384" width="12" height="12" fill="#3e3e3e"/>
<rect x="312" y="384" width="12" height="12" fill="#3f3f3f"/>
<rect x="324" y="384" width="12" height="12" fill="#3f3f3f"/>
<rect x="336" y="384" width="12" height="12" fill="#404040"/>
<rect x="348" y="384" width="12" height="12" fill="#404040"/>
<rect x="360" y="384" width="12" height="12" fill="#414141"/>
<rect x="372" y="384" width="12" height="12" fill="#424242"/>
<rect x="384" y="384" width="12" height="12" fill="#424242"/>
<rect x="396" y="384" width="12" height="12" fill="#434343"/>
<rect x="408" y="384" width="12" height="12" fill="#434343"/>
<rect x="420" y="384" width="12" height="12" fill="#444444"/>
<rect x="432" y="384" width="12" height="12" fill="#454545"/>
<rect x="444" y="384" width="12" height="12" fill="#454545"/>
<rect x="456" y="384" width="12" height="12" fill="#464646"/>
<rect x="468" y="384" width="12" height="12" fill="#474747"/>
<rect x="480" y="384" width="12" height="12" fill="#474747"/>
<rect x="492" y="384" width="12" height="12" fill="#484848"/>
<rect x="504" y="384" width="12" height="12" fill="#4a4a4a"/>
<rect x="516" y="384" width="12" height="12" fill="#4c4c4c"/>
<rect x="528" y="384" width="12" height="12" fill="#4e4e4e"/>
<rect x="540" y="384" width="12" height="12" fill="#515151"/>
<rect x="552" y="384" width="12" height="12" fill="#535353"/>
<rect x="564" y="384" width="12" height="12" fill="#555555"/>
<rect x="576" y="384" width="12" height="12" fill="#575757"/>
<rect x="588" y="384" width="12" height="12" fill="#595959"/>
<rect x="600" y="384" width="12" height="12" fill="#5a5a5a"/>
<rect x="612" y="384" width="12" height="12" fill="#5b5b5b"/>
<rect x="624" y="384" width="12" height="12" fill="#5c5c5c"/>
<rect x="636" y="384" width="12" height="12" fill="#5d5d5d"/>
<rect x="648" y="384" width="12" height="12" fill="#5d5d5d"/>
<rect x="660" y="384" width="12" height="12" fill="#5c5c5c"/>
<rect x="672" y="384" width="12" height="12" fill="#5b5b5b"/>
<rect x="684" y="384" width="12" height="12" fill="#5a5a5a"/>
<rect x="696" y="384" width="12" height="12" fill="#575757"/>
<rect x="708" y="384" width="12" height="12" fill="#545454"/>
<rect x="720" y="384" width="12" height="12" fill="#505050"/>
<rect x="732" y="384" width="12" height="12" fill="#4c4c4c"/>
<rect x="744" y="384" width="12" height="12" fill="#494949"/>
<rect x="756" y="384" width="12" height="12" fill="#464646"/>
<rect x="768" y="384" width="12" height="12" fill="#434343"/>
<rect x="780" y="384" width="12" height="12" fill="#414141"/>
<rect x="792" y="384" width="12" height="12" fill="#3f3f3f"/>
<rect x="804" y="384" width="12" height="12" fill="#3d3d3d"/>
<rect x="816" y="384" width="12" height="12" fill="#3a3a3a"/>
<rect x="828" y="384" width="12" height="12" fill="#383838"/>
<rect x="840" y="384" width="12" height="12" fill="#353535"/>
<rect x="852" y="384" width="12" height="12" fill="#333333"/>
<rect x="864" y="384" width="12" height="12" fill="#303030"/>
<rect x="876" y="384" width="12" height="12" fill="#2e2e2e"/>
<rect x="888" y="384" width="12" height="12" fill="#2b2b2b"/>
<rect x="900" y="384" width="12" height="12" fill="#2a2a2a"/>
<rect x="912" y="384" width="12" height="12" fill="#282828"/>
<rect x="924" y="384" width="12" height="12" fill="#272727"/>
<rect x="936" y="384" width="12" height="12" fill="#252525"/>
<rect x="948" y="384" width="12" height="12" fill="#242424"/>
<rect x="960" y="384" width="12" height="12" fill="#222222"/>
<rect x="972" y="384" width="12" height="12" fill="#212121"/>
<rect x="984" y="384" width="12" height="12" fill="#202020"/>
<rect x="996" y="384" width="12" height="12" fill="#1f1f1f"/>
<rect x="1008" y="384" width="12" height="12" fill="#1e1e1e"/>
<rect x="1020" y="384" width="12" height="12" fill="#1e1e1e"/>
<rect x="1032" y="384" width="12" height="12" fill="#1e1e1e"/>
<rect x="1044" y="384" width="12" height="12" fill="#1d1d1d"/>
<rect x="1056" y="384" width="12" height="12" fill="#1d1d1d"/>
<rect x="1068" y="384" width="12" height="12" fill="#1d1d1d"/>
<rect x="1080" y="384" width="12" height="12" fill="#1d1d1d"/>
<rect x="276" y="396" width="12" height="12" fill="#3d3d3d"/>
<rect x="288" y="396" width="12" height="12" fill="#3e3e3e"/>
<rect x="300" y="396" width="12" height="12" fill="#3e3e3e"/>
<rect x="312" y="396" width="12" height="12" fill="#3f3f3f"/>
<rect x="324" y="396" width="12" height="12" fill="#3f3f3f"/>
<rect x="336" y="396" width="12" height="12" fill="#404040"/>
<rect x="348" y="396" width="12" height="12" fill="#404040"/>
<rect x="360" y="396" width="12" height="12" fill="#414141"/>
<rect x="372" y="396" width="12" height="12" fill="#424242"/>
<rect x="384" y="396" width="12" height="12" fill="#424242"/>
<rect x="396" y="396" width="12" height="12" fill="#434343"/>
<rect x="408" y="396" width="12" height="12" fill="#444444"/>
<rect x="420" y="396" width="12" height="12" fill="#454545"/>
<rect x="432" y="396" width="12" height="12" fill="#454545"/>
<rect x="444" y="396" width="12" height="12" fill="#464646"/>
<rect x="456" y="396" width="12" height="12" fill="#464646"/>
<rect x="468" y="396" width="12" height="12" fill="#474747"/>
<rect x="480" y="396" width="12" height="12" fill="#474747"/>
<rect x="492" y="396" width="12" height="12" fill="#484848"/>
<rect x="504" y="396" width="12" height="12" fill="#4a4a4a"/>
<rect x="516" y="396" width="12" height="12" fill="#4b4b4b"/>
<rect x="528" y="396" width="12" height="12" fill="#4d4d4d"/>
<rect x="540" y="396" width="12" height="12" fill="#505050"/>
<rect x="552" y="396" width="12" height="12" fill="#525252"/>
<rect x="564" y="396" width="12" height="12" fill="#545454"/>
<rect x="576" y="396" width="12" height="12" fill="#565656"/>
<rect x="588" y="396" width="12" height="12" fill="#585858"/>
<rect x="600" y="396" width="12" height="12" fill="#5a5a5a"/>
<rect x="612" y="396" width="12" height="12" fill="#5b5b5b"/>
<rect x="624" y="396" width="12" height="12" fill="#5c5c5c"/>
<rect x="636" y="396" width="12" height="12" fill="#5c5c5c"/>
<rect x="648" y="396" width="12" height="12" fill="#5c5c5c"/>
<rect x="660" y="396" width="12" height="12" fill="#5c5c5c"/>
<rect x="672" y="396" width="12" height="12" fill="#5b5b5b"/>
<rect x="684" y="396" width="12" height="12" fill="#5a5a5a"/>
<rect x="696" y="396" width="12" height="12" fill="#585858"/>
<rect x="708" y="396" width="12" height="12" fill="#545454"/>
<rect x="720" y="396" width="12" height="12" fill="#515151"/>
<rect x="732" y="396" width="12" height="12" fill="#4d4d4d"/>
<rect x="744" y="396" width="12" height="12" fill="#4a4a4a"/>
<rect x="756" y="396" width="12" height="12" fill="#474747"/>
<rect x="768" y="396" width="12" height="12" fill="#454545"/>
<rect x="780" y="396" width="12" height="12" fill="#424242"/>
<rect x="792" y="396" width="12" height="12" fill="#404040"/>
<rect x="804" y="396" width="12" height="12" fill="#3e3e3e"/>
<rect x="816" y="396" width="12" height="12" fill="#3b3b3b"/>
<rect x="828" y="396" width="12" height="12" fill="#393939"/>
<rect x="840" y="396" width="12" height="12" fill="#363636"/>
<rect x="852" y="396" width="12" height="12" fill="#343434"/>
<rect x="864" y="396" width="12" height="12" fill="#323232"/>
<rect x="876" y="396" width="12" height="12" fill="#303030"/>
<rect x="888" y="396" width="12" height="12" fill="#2e2e2e"/>
<rect x="900" y="396" width="12" height="12" fill="#2d2d2d"/>
<rect x="912" y="396" width="12" height="12" fill="#2b2b2b"/>
<rect x="924" y="396" width="12" height="12" fill="#292929"/>
<rect x="936" y="396" width="12" height="12" fill="#282828"/>
<rect x="948" y="396" width="12" height="12" fill="#262626"/>
<rect x="960" y="396" width="12" height="12" fill="#242424"/>
<rect x="972" y="396" width="12" height="12" fill="#232323"/>
<rect x="984" y="396" width="12" height="12" fill="#222222"/>
<rect x="996" y="396" width="12" height="12" fill="#212121"/>
<rect x="1008" y="396" width="12" height="12" fill="#202020"/>
<rect x="1020" y="396" width="12" height="12" fill="#1f1f1f"/>
<rect x="1032" y="396" width="12" height="12" fill="#1f1f1f"/>
<rect x="1044" y="396" width="12" height="12" fill="#1f1f1f"/>
<rect x="1056" y="396" width="12" height="12" fill="#1f1f1f"/>
<rect x="1068" y="396" width="12" height="12" fill="#1e1e1e"/>
<rect x="1080" y="396" width="12" height="12" fill="#1e1e1e"/>
<rect x="276" y="408" width="12" height="12" fill="#3d3d3d"/>
<rect x="288" y="408" width="12" height="12" fill="#3d3d3d"/>
<rect x="300" y="408" width="12" height="12" fill="#3e3e3e"/>
<rect x="312" y="408" width="12" height="12" fill="#3e3e3e"/>
<rect x="324" y="408" width="12" height="12" fill="#3f3f3f"/>
<rect x="336" y="408" width="12" height="12" fill="#404040"/>
<rect x="348" y="408" width="12" height="12" fill="#404040"/>
<rect x="360" y="408" width="12" height="12" fill="#414141"/>
<rect x="372" y="408" width="12" height="12" fill="#424242"/>
<rect x="384" y="408" width="12" height="12" fill="#434343"/>
<rect x="396" y="408" width="12" height="12" fill="#444444"/>
<rect x="408" y="408" width="12" height="12" fill="#444444"/>
<rect x="420" y="408" width="12" height="12" fill="#454545"/>
<rect x="432" y="408" width="12" height="12" fill="#464646"/>
<rect x="444" y="408" width="12" height="12" fill="#464646"/>
<rect x="456" y="408" width="12" height="12" fill="#464646"/>
<rect x="468" y="408" width="12" height="12" fill="#474747"/>
<rect x="480" y="408" width="12" height="12" fill="#474747"/>
<rect x="492" y="408" width="12" height="12" fill="#484848"/>
<rect x="504" y="408" width="12" height="12" fill="#494949"/>
<rect x="516" y="408" width="12" height="12" fill="#4b4b4b"/>
<rect x="528" y="408" width="12" height="12" fill="#4d4d4d"/>
<rect x="540" y="408" width="12" height="12" fill="#4f4f4f"/>
<rect x="552" y="408" width="12" height="12" fill="#515151"/>
<rect x="564" y="408" width="12" height="12" fill="#535353"/>
<rect x="576" y="408" width="12" height="12" fill="#555555"/>
<rect x="588" y="408" width="12" height="12" fill="#575757"/>
<rect x="600" y="408" width="12" height="12" fill="#595959"/>
<rect x="612" y="408" width="12" height="12" fill="#5a5a5a"/>
<rect x="624" y="408" width="12" height="12" fill="#5b5b5b"/>
<rect x="636" y="408" width="12" height="12" fill="#5c5c5c"/>
<rect x="648" y="408" width="12" height="12" fill="#5c5c5c"/>
<rect x="660" y="408" width="12" height="12" fill="#5c5c5c"/>
<rect x="672" y="408" width="12" height="12" fill="#5b5b5b"/>
<rect x="684" y="408" width="12" height="12" fill="#5a5a5a"/>
<rect x="696" y="408" width="12" height="12" fill="#585858"/>
<rect x="708" y="408" width="12" height="12" fill="#555555"/>
<rect x="720" y="408" width="12" height="12" fill="#525252"/>
<rect x="732" y="408" width="12" height="12" fill="#4f4f4f"/>
<rect x="744" y="408" width="12" height="12" fill="#4c4c4c"/>
<rect x="756" y="408" width="12" height="12" fill="#494949"/>
<rect x="768" y="408" width="12" height="12" fill="#464646"/>
<rect x="780" y="408" width="12" height="12" fill="#444444"/>
<rect x="792" y="408" width="12" height="12" fill="#424242"/>
<rect x="804" y="408" width="12" height="12" fill="#3f3f3f"/>
<rect x="816" y="408" width="12" height="12" fill="#3d3d3d"/>
<rect x="828" y="408" width="12" height="12" fill="#3a3a3a"/>
<rect x="840" y="408" width="12" height="12" fill="#383838"/>
<rect x="852" y="408" width="12" height="12" fill="#353535"/>
<rect x="864" y="408" width="12" height="12" fill="#343434"/>
<rect x="876" y="408" width="12" height="12" fill="#333333"/>
<rect x="888" y="408" width="12" height="12" fill="#323232"/>
<rect x="900" y="408" width="12" height="12" fill="#303030"/>
<rect x="912" y="408" width="12" height="12" fill="#2e2e2e"/>
<rect x="924" y="408" width="12" height="12" fill="#2c2c2c"/>
<rect x="936" y="408" width="12" height="12" fill="#2a2a2a"/>
<rect x="948" y="408" width="12" height="12" fill="#282828"/>
<rect x="960" y="408" width="12" height="12" fill="#272727"/>
<rect x="972" y="408" width="12" height="12" fill="#252525"/>
<rect x="984" y="408" width="12" height="12" fill="#242424"/>
<rect x="996" y="408" width="12" height="12" fill="#232323"/>
<rect x="1008" y="408" width="12" height="12" fill="#222222"/>
<rect x="1020" y="408" width="12" height="12" fill="#212121"/>
<rect x="1032" y="408" width="12" height="12" fill="#212121"/>
<rect x="1044" y="408" width="12" height="12" fill="#212121"/>
<rect x="1056" y="408" width="12" height="12" fill="#202020"/>
<rect x="1068" y="408" width="12" height="12" fill="#202020"/>
<rect x="1080" y="408" width="12" height="12" fill="#202020"/>
<rect x="276" y="420" width="12" height="12" fill="#3c3c3c"/>
<rect x="288" y="420" width="12" height="12" fill="#3d3d3d"/>
<rect x="300" y="420" width="12" height="12" fill="#3e3e3e"/>
<rect x="312" y="420" width="12" height="12" fill="#3e3e3e"/>
<rect x="324" y="420" width="12" height="12" fill="#3f3f3f"/>
<rect x="336" y="420" width="12" height="12" fill="#3f3f3f"/>
<rect x="348" y="420" width="12" height="12" fill="#404040"/>
<rect x="360" y="420" width="12" height="12" fill="#414141"/>
<rect x="372" y="420" width="12" height="12" fill="#424242"/>
<rect x="384" y="420" width="12" height="12" fill="#434343"/>
<rect x="396" y="420" width="12" height="12" fill="#444444"/>
<rect x="408" y="420" width="12" height="12" fill="#454545"/>
<rect x="420" y="420" width="12" height="12" fill="#464646"/>
<rect x="432" y="420" width="12" height="12" fill="#464646"/>
<rect x="444" y="420" width="12" height="12" fill="#464646"/>
<rect x="456" y="420" width="12" height="12" fill="#464646"/>
<rect x="468" y="420" width="12" height="12" fill="#474747"/>
<rect x="480" y="420" width="12" height="12" fill="#474747"/>
<rect x="492" y="420" width="12" height="12" fill="#484848"/>
<rect x="504" y="420" width="12" height="12" fill="#494949"/>
<rect x="516" y="420" width="12" height="12" fill="#4b4b4b"/>
<rect x="528" y="420" width="12" height="12" fill="#4c4c4c"/>
<rect x="540" y="420" width="12" height="12" fill="#4e4e4e"/>
<rect x="552" y="420" width="12" height="12" fill="#505050"/>
<rect x="564" y="420" width="12" height="12" fill="#525252"/>
<rect x="576" y="420" width="12" height="12" fill="#545454"/>
<rect x="588" y="420" width="12" height="12" fill="#565656"/>
<rect x="600" y="420" width="12" height="12" fill="#585858"/>
<rect x="612" y="420" width="12" height="12" fill="#595959"/>
<rect x="624" y="420" width="12" height="12" fill="#5b5b5b"/>
<rect x="636" y="420" width="12" height="12" fill="#5b5b5b"/>
<rect x="648" y="420" width="12" height="12" fill="#5c5c5c"/>
<rect x="660" y="420" width="12" height="12" fill="#5c5c5c"/>
<rect x="672" y="420" width="12" height="12" fill="#5b5b5b"/>
<rect x="684" y="420" width="12" height="12" fill="#5a5a5a"/>
<rect x="696" y="420" width="12" height="12" fill="#585858"/>
<rect x="708" y="420" width="12" height="12" fill="#565656"/>
<rect x="720" y="420" width="12" height="12" fill="#535353"/>
<rect x="732" y="420" width="12" height="12" fill="#505050"/>
<rect x="744" y="420" width="12" height="12" fill="#4d4d4d"/>
<rect x="756" y="420" width="12" height="12" fill="#4a4a4a"/>
<rect x="768" y="420" width="12" height="12" fill="#484848"/>
<rect x="780" y="420" width="12" height="12" fill="#464646"/>
<rect x="792" y="420" width="12" height="12" fill="#434343"/>
<rect x="804" y="420" width="12" height="12" fill="#414141"/>
<rect x="816" y="420" width="12" height="12" fill="#3e3e3e"/>
<rect x="828" y="420" width="12" height="12" fill="#3b3b3b"/>
<rect x="840" y="420" width="12" height="12" fill="#393939"/>
<rect x="852" y="420" width="12" height="12" fill="#373737"/>
<rect x="864" y="420" width="12" height="12" fill="#363636"/>
<rect x="876" y="420" width="12" height="12" fill="#353535"/>
<rect x="888" y="420" width="12" height="12" fill="#343434"/>
<rect x="900" y="420" width="12" height="12" fill="#333333"/>
<rect x="912" y="420" width="12" height="12" fill="#313131"/>
<rect x="924" y="420" width="12" height="12" fill="#2f2f2f"/>
<rect x="936" y="420" width="12" height="12" fill="#2d2d2d"/>
<rect x="948" y="420" width="12" height="12" fill="#2b2b2b"/>
<rect x="960" y="420" width="12" height="12" fill="#292929"/>
<rect x="972" y="420" width="12" height="12" fill="#282828"/>
<rect x="984" y="420" width="12" height="12" fill="#262626"/>
<rect x="996" y="420" width="12" height="12" fill="#252525"/>
<rect x="1008" y="420" width="12" height="12" fill="#242424"/>
<rect x="1020" y="420" width="12" height="12" fill="#242424"/>
<rect x="1032" y="420" width="12" height="12" fill="#232323"/>
<rect x="1044" y="420" width="12" height="12" fill="#222222"/>
<rect x="1056" y="420" width="12" height="12" fill="#222222"/>
<rect x="1068" y="420" width="12" height="12" fill="#222222"/>
<rect x="1080" y="420" width="12" height="12" fill="#212121"/>
<rect x="276" y="432" width="12" height="12" fill="#3c3c3c"/>
<rect x="288" y="432" width="12" height="12" fill="#3d3d3d"/>
<rect x="300" y="432" width="12" height="12" fill="#3d3d3d"/>
<rect x="312" y="432" width="12" height="12" fill="#3e3e3e"/>
<rect x="324" y="432" width="12" height="12" fill="#3e3e3e"/>
<rect x="336" y="432" width="12" height="12" fill="#3f3f3f"/>
<rect x="348" y="432" width="12" height="12" fill="#404040"/>
<rect x="360" y="432" width="12" height="12" fill="#414141"/>
<rect x="372" y="432" width="12" height="12" fill="#424242"/>
<rect x="384" y="432" width="12" height="12" fill="#434343"/>
<rect x="396" y="432" width="12" height="12" fill="#434343"/>
<rect x="408" y="432" width="12" height="12" fill="#444444"/>
<rect x="420" y="432" width="12" height="12" fill="#454545"/>
<rect x="432" y="432" width="12" height="12" fill="#464646"/>
<rect x="444" y="432" width="12" height="12" fill="#464646"/>
<rect x="456" y="432" width="12" height="12" fill="#464646"/>
<rect x="468" y="432" width="12" height="12" fill="#464646"/>
<rect x="480" y="432" width="12" height="12" fill="#474747"/>
<rect x="492" y="432" width="12" height="12" fill="#484848"/>
<rect x="504" y="432" width="12" height="12" fill="#494949"/>
<rect x="516" y="432" width="12" height="12" fill="#4a4a4a"/>
<rect x="528" y="432" width="12" height="12" fill="#4c4c4c"/>
<rect x="540" y="432" width="12" height="12" fill="#4e4e4e"/>
<rect x="552" y="432" width="12" height="12" fill="#505050"/>
<rect x="564" y="432" width="12" height="12" fill="#525252"/>
<rect x="576" y="432" width="12" height="12" fill="#545454"/>
<rect x="588" y="432" width="12" height="12" fill="#565656"/>
<rect x="600" y="432" width="12" height="12" fill="#575757"/>
<rect x="612" y="432" width="12" height="12" fill="#595959"/>
<rect x="624" y="432" width="12" height="12" fill="#5a5a5a"/>
<rect x="636" y="432" width="12" height="12" fill="#5b5b5b"/>
<rect x="648" y="432" width="12" height="12" fill="#5b5b5b"/>
<rect x="660" y="432" width="12" height="12" fill="#5b5b5b"/>
<rect x="672" y="432" width="12" height="12" fill="#5b5b5b"/>
<rect x="684" y="432" width="12" height="12" fill="#5a5a5a"/>
<rect x="696" y="432" width="12" height="12" fill="#585858"/>
<rect x="708" y="432" width="12" height="12" fill="#565656"/>
<rect x="720" y="432" width="12" height="12" fill="#545454"/>
<rect x="732" y="432" width="12" height="12" fill="#515151"/>
<rect x="744" y="432" width="12" height="12" fill="#4f4f4f"/>
<rect x="756" y="432" width="12" height="12" fill="#4c4c4c"/>
<rect x="768" y="432" width="12" height="12" fill="#4a4a4a"/>
<rect x="780" y="432" width="12" height="12" fill="#484848"/>
<rect x="792" y="432" width="12" height="12" fill="#464646"/>
<rect x="804" y="432" width="12" height="12" fill="#434343"/>
<rect x="816" y="432" width="12" height="12" fill="#404040"/>
<rect x="828" y="432" width="12" height="12" fill="#3d3d3d"/>
<rect x="840" y="432" width="12" height="12" fill="#3b3b3b"/>
<rect x="852" y="432" width="12" height="12" fill="#393939"/>
<rect x="864" y="432" width="12" height="12" fill="#373737"/>
<rect x="876" y="432" width="12" height="12" fill="#363636"/>
<rect x="888" y="432" width="12" height="12" fill="#353535"/>
<rect x="900" y="432" width="12" height="12" fill="#343434"/>
<rect x="912" y="432" width="12" height="12" fill="#323232"/>
<rect x="924" y="432" width="12" height="12" fill="#313131"/>
<rect x="936" y="432" width="12" height="12" fill="#2f2f2f"/>
<rect x="948" y="432" width="12" height="12" fill="#2d2d2d"/>
<rect x="960" y="432" width="12" height="12" fill="#2c2c2c"/>
<rect x="972" y="432" width="12" height="12" fill="#2a2a2a"/>
<rect x="984" y="432" width="12" height="12" fill="#292929"/>
<rect x="996" y="432" width="12" height="12" fill="#282828"/>
<rect x="1008" y="432" width="12" height="12" fill="#272727"/>
<rect x="1020" y="432" width="12" height="12" fill="#262626"/>
<rect x="1032" y="432" width="12" height="12" fill="#252525"/>
<rect x="1044" y="432" width="12" height="12" fill="#252525"/>
<rect x="1056" y="432" width="12" height="12" fill="#242424"/>
<rect x="1068" y="432" width="12" height="12" fill="#242424"/>
<rect x="1080" y="432" width="12" height="12" fill="#232323"/>
<rect x="276" y="444" width="12" height="12" fill="#3c3c3c"/>
<rect x="288" y="444" width="12" height="12" fill="#3c3c3c"/>
<rect x="300" y="444" width="12" height="12" fill="#3d3d3d"/>
<rect x="312" y="444" width="12" height="12" fill="#3d3d3d"/>
<rect x="324" y="444" width="12" height="12" fill="#3e3e3e"/>
<rect x="336" y="444" width="12" height="12" fill="#3f3f3f"/>
<rect x="348" y="444" width="12" height="12" fill="#404040"/>
<rect x="360" y="444" width="12" height="12" fill="#404040"/>
<rect x="372" y="444" width="12" height="12" fill="#414141"/>
<rect x="384" y="444" width="12" height="12" fill="#424242"/>
<rect x="396" y="444" width="12" height="12" fill="#434343"/>
<rect x="408" y="444" width="12" height="12" fill="#444444"/>
<rect x="420" y="444" width="12" height="12" fill="#444444"/>
<rect x="432" y="444" width="12" height="12" fill="#454545"/>
<rect x="444" y="444" width="12" height="12" fill="#454545"/>
<rect x="456" y="444" width="12" height="12" fill="#454545"/>
<rect x="468" y="444" width="12" height="12" fill="#464646"/>
<rect x="480" y="444" width="12" height="12" fill="#464646"/>
<rect x="492" y="444" width="12" height="12" fill="#474747"/>
<rect x="504" y="444" width="12" height="12" fill="#484848"/>
<rect x="516" y="444" width="12" height="12" fill="#4a4a4a"/>
<rect x="528" y="444" width="12" height="12" fill="#4b4b4b"/>
<rect x="540" y="444" width="12" height="12" fill="#4d4d4d"/>
<rect x="552" y="444" width="12" height="12" fill="#4f4f4f"/>
<rect x="564" y="444" width="12" height="12" fill="#515151"/>
<rect x="576" y="444" width="12" height="12" fill="#535353"/>
<rect x="588" y="444" width="12" height="12" fill="#555555"/>
<rect x="600" y="444" width="12" height="12" fill="#565656"/>
<rect x="612" y="444" width="12" height="12" fill="#585858"/>
<rect x="624" y="444" width="12" height="12" fill="#595959"/>
<rect x="636" y="444" width="12" height="12" fill="#5a5a5a"/>
<rect x="648" y="444" width="12" height="12" fill="#5b5b5b"/>
<rect x="660" y="444" width="12" height="12" fill="#5b5b5b"/>
<rect x="672" y="444" width="12" height="12" fill="#5b5b5b"/>
<rect x="684" y="444" width="12" height="12" fill="#5a5a5a"/>
<rect x="696" y="444" width="12" height="12" fill="#595959"/>
<rect x="708" y="444" width="12" height="12" fill="#575757"/>
<rect x="720" y="444" width="12" height="12" fill="#555555"/>
<rect x="732" y="444" width="12" height="12" fill="#525252"/>
<rect x="744" y="444" width="12" height="12" fill="#505050"/>
<rect x="756" y="444" width="12" height="12" fill="#4e4e4e"/>
<rect x="768" y="444" width="12" height="12" fill="#4c4c4c"/>
<rect x="780" y="444" width="12" height="12" fill="#4a4a4a"/>
<rect x="792" y="444" width="12" height="12" fill="#484848"/>
<rect x="804" y="444" width="12" height="12" fill="#464646"/>
<rect x="816" y="444" width="12" height="12" fill="#434343"/>
<rect x="828" y="444" width="12" height="12" fill="#404040"/>
<rect x="840" y="444" width="12" height="12" fill="#3d3d3d"/>
<rect x="852" y="444" width="12" height="12" fill="#3b3b3b"/>
<rect x="864" y="444" width="12" height="12" fill="#393939"/>
<rect x="876" y="444" width="12" height="12" fill="#373737"/>
<rect x="888" y="444" width="12" height="12" fill="#363636"/>
<rect x="900" y="444" width="12" height="12" fill="#353535"/>
<rect x="912" y="444" width="12" height="12" fill="#343434"/>
<rect x="924" y="444" width="12" height="12" fill="#333333"/>
<rect x="936" y="444" width="12" height="12" fill="#313131"/>
<rect x="948" y="444" width="12" height="12" fill="#303030"/>
<rect x="960" y="444" width="12" height="12" fill="#2e2e2e"/>
<rect x="972" y="444" width="12" height="12" fill="#2d2d2d"/>
<rect x="984" y="444" width="12" height="12" fill="#2b2b2b"/>
<rect x="996" y="444" width="12" height="12" fill="#2a2a2a"/>
<rect x="1008" y="444" width="12" height="12" fill="#292929"/>
<rect x="1020" y="444" width="12" height="12" fill="#282828"/>
<rect x="1032" y="444" width="12" height="12" fill="#272727"/>
<rect x="1044" y="444" width="12" height="12" fill="#272727"/>
<rect x="1056" y="444" width="12" height="12" fill="#262626"/>
<rect x="1068" y="444" width="12" height="12" fill="#262626"/>
<rect x="1080" y="444" width="12" height="12" fill="#252525"/>
<rect x="276" y="456" width="12" height="12" fill="#3b3b3b"/>
<rect x="288" y="456" width="12" height="12" fill="#3c3c3c"/>
<rect x="300" y="456" width="12" height="12" fill="#3c3c3c"/>
<rect x="312" y="456" width="12" height="12" fill="#3d3d3d"/>
<rect x="324" y="456" width="12" height="12" fill="#3e3e3e"/>
<rect x="336" y="456" width="12" height="12" fill="#3e3e3e"/>
<rect x="348" y="456" width="12" height="12" fill="#3f3f3f"/>
<rect x="360" y="456" width="12" height="12" fill="#404040"/>
<rect x="372" y="456" width="12" height="12" fill="#414141"/>
<rect x="384" y="456" width="12" height="12" fill="#414141"/>
<rect x="396" y="456" width="12" height="12" fill="#424242"/>
<rect x="408" y="456" width="12" height="12" fill="#434343"/>
<rect x="420" y="456" width="12" height="12" fill="#434343"/>
<rect x="432" y="456" width="12" height="12" fill="#444444"/>
<rect x="444" y="456" width="12" height="12" fill="#444444"/>
<rect x="456" y="456" width="12" height="12" fill="#454545"/>
<rect x="468" y="456" width="12" height="12" fill="#454545"/>
<rect x="480" y="456" width="12" height="12" fill="#464646"/>
<rect x="492" y="456" width="12" height="12" fill="#464646"/>
<rect x="504" y="456" width="12" height="12" fill="#484848"/>
<rect x="516" y="456" width="12" height="12" fill="#494949"/>
<rect x="528" y="456" width="12" height="12" fill="#4a4a4a"/>
<rect x="540" y="456" width="12" height="12" fill="#4c4c4c"/>
<rect x="552" y="456" width="12" height="12" fill="#4e4e4e"/>
<rect x="564" y="456" width="12" height="12" fill="#505050"/>
<rect x="576" y="456" width="12" height="12" fill="#525252"/>
<rect x="588" y="456" width="12" height="12" fill="#545454"/>
<rect x="600" y="456" width="12" height="12" fill="#555555"/>
<rect x="612" y="456" width="12" height="12" fill="#575757"/>
<rect x="624" y="456" width="12" height="12" fill="#595959"/>
<rect x="636" y="456" width="12" height="12" fill="#5a5a5a"/>
<rect x="648" y="456" width="12" height="12" fill="#5b5b5b"/>
<rect x="660" y="456" width="12" height="12" fill="#5b5b5b"/>
<rect x="672" y="456" width="12" height="12" fill="#5b5b5b"/>
<rect x="684" y="456" width="12" height="12" fill="#5a5a5a"/>
<rect x="696" y="456" width="12" height="12" fill="#595959"/>
<rect x="708" y="456" width="12" height="12" fill="#585858"/>
<rect x="720" y="456" width="12" height="12" fill="#565656"/>
<rect x="732" y="456" width="12" height="12" fill="#545454"/>
<rect x="744" y="456" width="12" height="12" fill="#525252"/>
<rect x="756" y="456" width="12" height="12" fill="#505050"/>
<rect x="768" y="456" width="12" height="12" fill="#4e4e4e"/>
<rect x="780" y="456" width="12" height="12" fill="#4c4c4c"/>
<rect x="792" y="456" width="12" height="12" fill="#4b4b4b"/>
<rect x="804" y="456" width="12" height="12" fill="#4a4a4a"/>
<rect x="816" y="456" width="12" height="12" fill="#474747"/>
<rect x="828" y="456" width="12" height="12" fill="#444444"/>
<rect x="840" y="456" width="12" height="12" fill="#404040"/>
<rect x="852" y="456" width="12" height="12" fill="#3d3d3d"/>
<rect x="864" y="456" width="12" height="12" fill="#3b3b3b"/>
<rect x="876" y="456" width="12" height="12" fill="#393939"/>
<rect x="888" y="456" width="12" height="12" fill="#383838"/>
<rect x="900" y="456" width="12" height="12" fill="#373737"/>
<rect x="912" y="456" width="12" height="12" fill="#363636"/>
<rect x="924" y="456" width="12" height="12" fill="#353535"/>
<rect x="936" y="456" width="12" height="12" fill="#343434"/>
<rect x="948" y="456" width="12" height="12" fill="#323232"/>
<rect x="960" y="456" width="12" height="12" fill="#313131"/>
<rect x="972" y="456" width="12" height="12" fill="#2f2f2f"/>
<rect x="984" y="456" width="12" height="12" fill="#2e2e2e"/>
<rect x="996" y="456" width="12" height="12" fill="#2d2d2d"/>
<rect x="1008" y="456" width="12" height="12" fill="#2c2c2c"/>
<rect x="1020" y="456" width="12" height="12" fill="#2b2b2b"/>
<rect x="1032" y="456" width="12" height="12" fill="#2a2a2a"/>
<rect x="1044" y="456" width="12" height="12" fill="#292929"/>
<rect x="1056" y="456" width="12" height="12" fill="#282828"/>
<rect x="1068" y="456" width="12" height="12" fill="#282828"/>
<rect x="1080" y="456" width="12" height="12" fill="#272727"/>
<rect x="276" y="468" width="12" height="12" fill="#3b3b3b"/>
<rect x="288" y="468" width="12" height="12" fill="#3b3b3b"/>
<rect x="300" y="468" width="12" height="12" fill="#3c3c3c"/>
<rect x="312" y="468" width="12" height="12" fill="#3c3c3c"/>
<rect x="324" y="468" width="12" height="12" fill="#3d3d3d"/>
<rect x="336" y="468" width="12" height="12" fill="#3e3e3e"/>
<rect x="348" y="468" width="12" height="12" fill="#3e3e3e"/>
<rect x="360" y="468" width="12" height="12" fill="#3f3f3f"/>
<rect x="372" y="468" width="12" height="12" fill="#404040"/>
<rect x="384" y="468" width="12" height="12" fill="#404040"/>
<rect x="396" y="468" width="12" height="12" fill="#414141"/>
<rect x="408" y="468" width="12" height="12" fill="#424242"/>
<rect x="420" y="468" width="12" height="12" fill="#424242"/>
<rect x="432" y="468" width="12" height="12" fill="#434343"/>
<rect x="444" y="468" width="12" height="12" fill="#434343"/>
<rect x="456" y="468" width="12" height="12" fill="#444444"/>
<rect x="468" y="468" width="12" height="12" fill="#444444"/>
<rect x="480" y="468" width="12" height="12" fill="#454545"/>
<rect x="492" y="468" width="12" height="12" fill="#464646"/>
<rect x="504" y="468" width="12" height="12" fill="#474747"/>
<rect x="516" y="468" width="12" height="12" fill="#484848"/>
<rect x="528" y="468" width="12" height="12" fill="#494949"/>
<rect x="540" y="468" width="12" height="12" fill="#4b4b4b"/>
<rect x="552" y="468" width="12" height="12" fill="#4d4d4d"/>
<rect x="564" y="468" width="12" height="12" fill="#4f4f4f"/>
<rect x="576" y="468" width="12" height="12" fill="#515151"/>
<rect x="588" y="468" width="12" height="12" fill="#535353"/>
<rect x="600" y="468" width="12" height="12" fill="#555555"/>
<rect x="612" y="468" width="12" height="12" fill="#565656"/>
<rect x="624" y="468" width="12" height="12" fill="#585858"/>
<rect x="636" y="468" width="12" height="12" fill="#595959"/>
<rect x="648" y="468" width="12" height="12" fill="#5a5a5a"/>
<rect x="660" y="468" width="12" height="12" fill="#5b5b5b"/>
<rect x="672" y="468" width="12" height="12" fill="#5b5b5b"/>
<rect x="684" y="468" width="12" height="12" fill="#5b5b5b"/>
<rect x="696" y="468" width="12" height="12" fill="#5a5a5a"/>
<rect x="708" y="468" width="12" height="12" fill="#595959"/>
<rect x="720" y="468" width="12" height="12" fill="#575757"/>
<rect x="732" y="468" width="12" height="12" fill="#555555"/>
<rect x="744" y="468" width="12" height="12" fill="#535353"/>
<rect x="756" y="468" width="12" height="12" fill="#515151"/>
<rect x="768" y="468" width="12" height="12" fill="#505050"/>
<rect x="780" y="468" width="12" height="12" fill="#4f4f4f"/>
<rect x="792" y="468" width="12" height="12" fill="#4e4e4e"/>
<rect x="804" y="468" width="12" height="12" fill="#4e4e4e"/>
<rect x="816" y="468" width="12" height="12" fill="#4c4c4c"/>
<rect x="828" y="468" width="12" height="12" fill="#484848"/>
<rect x="840" y="468" width="12" height="12" fill="#454545"/>
<rect x="852" y="468" width="12" height="12" fill="#414141"/>
<rect x="864" y="468" width="12" height="12" fill="#3d3d3d"/>
<rect x="876" y="468" width="12" height="12" fill="#3b3b3b"/>
<rect x="888" y="468" width="12" height="12" fill="#3a3a3a"/>
<rect x="900" y="468" width="12" height="12" fill="#393939"/>
<rect x="912" y="468" width="12" height="12" fill="#383838"/>
<rect x="924" y="468" width="12" height="12" fill="#373737"/>
<rect x="936" y="468" width="12" height="12" fill="#363636"/>
<rect x="948" y="468" width="12" height="12" fill="#353535"/>
<rect x="960" y="468" width="12" height="12" fill="#343434"/>
<rect x="972" y="468" width="12" height="12" fill="#323232"/>
<rect x="984" y="468" width="12" height="12" fill="#313131"/>
<rect x="996" y="468" width="12" height="12" fill="#303030"/>
<rect x="1008" y="468" width="12" height="12" fill="#2e2e2e"/>
<rect x="1020" y="468" width="12" height="12" fill="#2d2d2d"/>
<rect x="1032" y="468" width="12" height="12" fill="#2c2c2c"/>
<rect x="1044" y="468" width="12" height="12" fill="#2b2b2b"/>
<rect x="1056" y="468" width="12" height="12" fill="#2b2b2b"/>
<rect x="1068" y="468" width="12" height="12" fill="#2a2a2a"/>
<rect x="1080" y="468" width="12" height="12" fill="#292929"/>
<rect x="276" y="480" width="12" height="12" fill="#3a3a3a"/>
<rect x="288" y="480" width="12" height="12" fill="#3b3b3b"/>
<rect x="300" y="480" width="12" height="12" fill="#3b3b3b"/>
<rect x="312" y="480" width="12" height="12" fill="#3c3c3c"/>
<rect x="324" y="480" width="12" height="12" fill="#3c3c3c"/>
<rect x="336" y="480" width="12" height="12" fill="#3d3d3d"/>
<rect x="348" y="480" width="12" height="12" fill="#3e3e3e"/>
<rect x="360" y="480" width="12" height="12" fill="#3e3e3e"/>
<rect x="372" y="480" width="12" height="12" fill="#3f3f3f"/>
<rect x="384" y="480" width="12" height="12" fill="#404040"/>
<rect x="396" y="480" width="12" height="12" fill="#404040"/>
<rect x="408" y="480" width="12" height="12" fill="#414141"/>
<rect x="420" y="480" width="12" height="12" fill="#414141"/>
<rect x="432" y="480" width="12" height="12" fill="#414141"/>
<rect x="444" y="480" width="12" height="12" fill="#424242"/>
<rect x="456" y="480" width="12" height="12" fill="#434343"/>
<rect x="468" y="480" width="12" height="12" fill="#434343"/>
<rect x="480" y="480" width="12" height="12" fill="#444444"/>
<rect x="492" y="480" width="12" height="12" fill="#454545"/>
<rect x="504" y="480" width="12" height="12" fill="#464646"/>
<rect x="516" y="480" width="12" height="12" fill="#474747"/>
<rect x="528" y="480" width="12" height="12" fill="#484848"/>
<rect x="540" y="480" width="12" height="12" fill="#4a4a4a"/>
<rect x="552" y="480" width="12" height="12" fill="#4c4c4c"/>
<rect x="564" y="480" width="12" height="12" fill="#4e4e4e"/>
<rect x="576" y="480" width="12" height="12" fill="#505050"/>
<rect x="588" y="480" width="12" height="12" fill="#525252"/>
<rect x="600" y="480" width="12" height="12" fill="#545454"/>
<rect x="612" y="480" width="12" height="12" fill="#555555"/>
<rect x="624" y="480" width="12" height="12" fill="#575757"/>
<rect x="636" y="480" width="12" height="12" fill="#595959"/>
<rect x="648" y="480" width="12" height="12" fill="#5a5a5a"/>
<rect x="660" y="480" width="12" height="12" fill="#5b5b5b"/>
<rect x="672" y="480" width="12" height="12" fill="#5b5b5b"/>
<rect x="684" y="480" width="12" height="12" fill="#5b5b5b"/>
<rect x="696" y="480" width="12" height="12" fill="#5a5a5a"/>
<rect x="708" y="480" width="12" height="12" fill="#595959"/>
<rect x="720" y="480" width="12" height="12" fill="#585858"/>
<rect x="732" y="480" width="12" height="12" fill="#575757"/>
<rect x="744" y="480" width="12" height="12" fill="#555555"/>
<rect x="756" y="480" width="12" height="12" fill="#535353"/>
<rect x="768" y="480" width="12" height="12" fill="#525252"/>
<rect x="780" y="480" width="12" height="12" fill="#515151"/>
<rect x="792" y="480" width="12" height="12" fill="#515151"/>
<rect x="804" y="480" width="12" height="12" fill="#515151"/>
<rect x="816" y="480" width="12" height="12" fill="#4f4f4f"/>
<rect x="828" y="480" width="12" height="12" fill="#4c4c4c"/>
<rect x="840" y="480" width="12" height="12" fill="#494949"/>
<rect x="852" y="480" width="12" height="12" fill="#454545"/>
<rect x="864" y="480" width="12" height="12" fill="#424242"/>
<rect x="876" y="480" width="12" height="12" fill="#3f3f3f"/>
<rect x="888" y="480" width="12" height="12" fill="#3e3e3e"/>
<rect x="900" y="480" width="12" height="12" fill="#3d3d3d"/>
<rect x="912" y="480" width="12" height="12" fill="#3b3b3b"/>
<rect x="924" y="480" width="12" height="12" fill="#3a3a3a"/>
<rect x="936" y="480" width="12" height="12" fill="#393939"/>
<rect x="948" y="480" width="12" height="12" fill="#383838"/>
<rect x="960" y="480" width="12" height="12" fill="#363636"/>
<rect x="972" y="480" width="12" height="12" fill="#353535"/>
<rect x="984" y="480" width="12" height="12" fill="#343434"/>
<rect x="996" y="480" width="12" height="12" fill="#323232"/>
<rect x="1008" y="480" width="12" height="12" fill="#313131"/>
<rect x="1020" y="480" width="12" height="12" fill="#303030"/>
<rect x="1032" y="480" width="12" height="12" fill="#2f2f2f"/>
<rect x="1044" y="480" width="12" height="12" fill="#2e2e2e"/>
<rect x="1056" y="480" width="12" height="12" fill="#2d2d2d"/>
<rect x="1068" y="480" width="12" height="12" fill="#2c2c2c"/>
<rect x="1080" y="480" width="12" height="12" fill="#2b2b2b"/>
<rect x="276" y="492" width="12" height="12" fill="#3a3a3a"/>
<rect x="288" y="492" width="12" height="12" fill="#3a3a3a"/>
<rect x="300" y="492" width="12" height="12" fill="#3b3b3b"/>
<rect x="312" y="492" width="12" height="12" fill="#3b3b3b"/>
<rect x="324" y="492" width="12" height="12" fill="#3c3c3c"/>
<rect x="336" y="492" width="12" height="12" fill="#3c3c3c"/>
<rect x="348" y="492" width="12" height="12" fill="#3d3d3d"/>
<rect x="360" y="492" width="12" height="12" fill="#3d3d3d"/>
<rect x="372" y="492" width="12" height="12" fill="#3e3e3e"/>
<rect x="384" y="492" width="12" height="12" fill="#3f3f3f"/>
<rect x="396" y="492" width="12" height="12" fill="#3f3f3f"/>
<rect x="408" y="492" width="12" height="12" fill="#404040"/>
<rect x="420" y="492" width="12" height="12" fill="#404040"/>
<rect x="432" y="492" width="12" height="12" fill="#404040"/>
<rect x="444" y="492" width="12" height="12" fill="#414141"/>
<rect x="456" y="492" width="12" height="12" fill="#424242"/>
<rect x="468" y="492" width="12" height="12" fill="#424242"/>
<rect x="480" y="492" width="12" height="12" fill="#434343"/>
<rect x="492" y="492" width="12" height="12" fill="#444444"/>
<rect x="504" y="492" width="12" height="12" fill="#454545"/>
<rect x="516" y="492" width="12" height="12" fill="#464646"/>
<rect x="528" y="492" width="12" height="12" fill="#474747"/>
<rect x="540" y="492" width="12" height="12" fill="#494949"/>
<rect x="552" y="492" width="12" height="12" fill="#4b4b4b"/>
<rect x="564" y="492" width="12" height="12" fill="#4d4d4d"/>
<rect x="576" y="492" width="12" height="12" fill="#4e4e4e"/>
<rect x="588" y="492" width="12" height="12" fill="#515151"/>
<rect x="600" y="492" width="12" height="12" fill="#535353"/>
<rect x="612" y="492" width="12" height="12" fill="#545454"/>
<rect x="624" y="492" width="12" height="12" fill="#565656"/>
<rect x="636" y="492" width="12" height="12" fill="#585858"/>
<rect x="648" y="492" width="12" height="12" fill="#595959"/>
<rect x="660" y="492" width="12" height="12" fill="#5a5a5a"/>
<rect x="672" y="492" width="12" height="12" fill="#5b5b5b"/>
<rect x="684" y="492" width="12" height="12" fill="#5b5b5b"/>
<rect x="696" y="492" width="12" height="12" fill="#5b5b5b"/>
<rect x="708" y="492" width="12" height="12" fill="#5a5a5a"/>
<rect x="720" y="492" width="12" height="12" fill="#595959"/>
<rect x="732" y="492" width="12" height="12" fill="#585858"/>
<rect x="744" y="492" width="12" height="12" fill="#575757"/>
<rect x="756" y="492" width="12" height="12" fill="#555555"/>
<rect x="768" y="492" width="12" height="12" fill="#545454"/>
<rect x="780" y="492" width="12" height="12" fill="#545454"/>
<rect x="792" y="492" width="12" height="12" fill="#545454"/>
<rect x="804" y="492" width="12" height="12" fill="#535353"/>
<rect x="816" y="492" width="12" height="12" fill="#525252"/>
<rect x="828" y="492" width="12" height="12" fill="#4f4f4f"/>
<rect x="840" y="492" width="12" height="12" fill="#4c4c4c"/>
<rect x="852" y="492" width="12" height="12" fill="#494949"/>
<rect x="864" y="492" width="12" height="12" fill="#464646"/>
<rect x="876" y="492" width="12" height="12" fill="#444444"/>
<rect x="888" y="492" width="12" height="12" fill="#424242"/>
<rect x="900" y="492" width="12" height="12" fill="#404040"/>
<rect x="912" y="492" width="12" height="12" fill="#3f3f3f"/>
<rect x="924" y="492" width="12" height="12" fill="#3e3e3e"/>
<rect x="936" y="492" width="12" height="12" fill="#3c3c3c"/>
<rect x="948" y="492" width="12" height="12" fill="#3b3b3b"/>
<rect x="960" y="492" width="12" height="12" fill="#393939"/>
<rect x="972" y="492" width="12" height="12" fill="#383838"/>
<rect x="984" y="492" width="12" height="12" fill="#363636"/>
<rect x="996" y="492" width="12" height="12" fill="#353535"/>
<rect x="1008" y="492" width="12" height="12" fill="#343434"/>
<rect x="1020" y="492" width="12" height="12" fill="#323232"/>
<rect x="1032" y="492" width="12" height="12" fill="#313131"/>
<rect x="1044" y="492" width="12" height="12" fill="#303030"/>
<rect x="1056" y="492" width="12" height="12" fill="#2f2f2f"/>
<rect x="1068" y="492" width="12" height="12" fill="#2e2e2e"/>
<rect x="1080" y="492" width="12" height="12" fill="#2d2d2d"/>
<rect x="276" y="504" width="12" height="12" fill="#393939"/>
<rect x="288" y="504" width="12" height="12" fill="#393939"/>
<rect x="300" y="504" width="12" height="12" fill="#3a3a3a"/>
<rect x="312" y="504" width="12" height="12" fill="#3a3a3a"/>
<rect x="324" y="504" width="12" height="12" fill="#3b3b3b"/>
<rect x="336" y="504" width="12" height="12" fill="#3c3c3c"/>
<rect x="348" y="504" width="12" height="12" fill="#3c3c3c"/>
<rect x="360" y="504" width="12" height="12" fill="#3d3d3d"/>
<rect x="372" y="504" width="12" height="12" fill="#3d3d3d"/>
<rect x="384" y="504" width="12" height="12" fill="#3e3e3e"/>
<rect x="396" y="504" width="12" height="12" fill="#3e3e3e"/>
<rect x="408" y="504" width="12" height="12" fill="#3f3f3f"/>
<rect x="420" y="504" width="12" height="12" fill="#3f3f3f"/>
<rect x="432" y="504" width="12" height="12" fill="#3f3f3f"/>
<rect x="444" y="504" width="12" height="12" fill="#404040"/>
<rect x="456" y="504" width="12" height="12" fill="#414141"/>
<rect x="468" y="504" width="12" height="12" fill="#414141"/>
<rect x="480" y="504" width="12" height="12" fill="#424242"/>
<rect x="492" y="504" width="12" height="12" fill="#434343"/>
<rect x="504" y="504" width="12" height="12" fill="#444444"/>
<rect x="516" y="504" width="12" height="12" fill="#454545"/>
<rect x="528" y="504" width="12" height="12" fill="#464646"/>
<rect x="540" y="504" width="12" height="12" fill="#484848"/>
<rect x="552" y="504" width="12" height="12" fill="#494949"/>
<rect x="564" y="504" width="12" height="12" fill="#4b4b4b"/>
<rect x="576" y="504" width="12" height="12" fill="#4d4d4d"/>
<rect x="588" y="504" width="12" height="12" fill="#4f4f4f"/>
<rect x="600" y="504" width="12" height="12" fill="#515151"/>
<rect x="612" y="504" width="12" height="12" fill="#545454"/>
<rect x="624" y="504" width="12" height="12" fill="#555555"/>
<rect x="636" y="504" width="12" height="12" fill="#575757"/>
<rect x="648" y="504" width="12" height="12" fill="#595959"/>
<rect x="660" y="504" width="12" height="12" fill="#5a5a5a"/>
<rect x="672" y="504" width="12" height="12" fill="#5b5b5b"/>
<rect x="684" y="504" width="12" height="12" fill="#5c5c5c"/>
<rect x="696" y="504" width="12" height="12" fill="#5c5c5c"/>
<rect x="708" y="504" width="12" height="12" fill="#5b5b5b"/>
<rect x="720" y="504" width="12" height="12" fill="#5a5a5a"/>
<rect x="732" y="504" width="12" height="12" fill="#595959"/>
<rect x="744" y="504" width="12" height="12" fill="#585858"/>
<rect x="756" y="504" width="12" height="12" fill="#575757"/>
<rect x="768" y="504" width="12" height="12" fill="#575757"/>
<rect x="780" y="504" width="12" height="12" fill="#565656"/>
<rect x="792" y="504" width="12" height="12" fill="#565656"/>
<rect x="804" y="504" width="12" height="12" fill="#555555"/>
<rect x="816" y="504" width="12" height="12" fill="#545454"/>
<rect x="828" y="504" width="12" height="12" fill="#525252"/>
<rect x="840" y="504" width="12" height="12" fill="#4f4f4f"/>
<rect x="852" y="504" width="12" height="12" fill="#4d4d4d"/>
<rect x="864" y="504" width="12" height="12" fill="#4a4a4a"/>
<rect x="876" y="504" width="12" height="12" fill="#484848"/>
<rect x="888" y="504" width="12" height="12" fill="#464646"/>
<rect x="900" y="504" width="12" height="12" fill="#444444"/>
<rect x="912" y="504" width="12" height="12" fill="#434343"/>
<rect x="924" y="504" width="12" height="12" fill="#414141"/>
<rect x="936" y="504" width="12" height="12" fill="#404040"/>
<rect x="948" y="504" width="12" height="12" fill="#3e3e3e"/>
<rect x="960" y="504" width="12" height="12" fill="#3c3c3c"/>
<rect x="972" y="504" width="12" height="12" fill="#3b3b3b"/>
<rect x="984" y="504" width="12" height="12" fill="#393939"/>
<rect x="996" y="504" width="12" height="12" fill="#383838"/>
<rect x="1008" y="504" width="12" height="12" fill="#363636"/>
<rect x="1020" y="504" width="12" height="12" fill="#353535"/>
<rect x="1032" y="504" width="12" height="12" fill="#343434"/>
<rect x="1044" y="504" width="12" height="12" fill="#333333"/>
<rect x="1056" y="504" width="12" height="12" fill="#323232"/>
<rect x="1068" y="504" width="12" height="12" fill="#313131"/>
<rect x="1080" y="504" width="12" height="12" fill="#303030"/>
<rect x="276" y="516" width="12" height="12" fill="#383838"/>
<rect x="288" y="516" width="12" height="12" fill="#393939"/>
<rect x="300" y="516" width="12" height="12" fill="#393939"/>
<rect x="312" y="516" width="12" height="12" fill="#3a3a3a"/>
<rect x="324" y="516" width="12" height="12" fill="#3a3a3a"/>
<rect x="336" y="516" width="12" height="12" fill="#3b3b3b"/>
<rect x="348" y="516" width="12" height="12" fill="#3b3b3b"/>
<rect x="360" y="516" width="12" height="12" fill="#3c3c3c"/>
<rect x="372" y="516" width="12" height="12" fill="#3c3c3c"/>
<rect x="384" y="516" width="12" height="12" fill="#3d3d3d"/>
<rect x="396" y="516" width="12" height="12" fill="#3d3d3d"/>
<rect x="408" y="516" width="12" height="12" fill="#3e3e3e"/>
<rect x="420" y="516" width="12" height="12" fill="#3e3e3e"/>
<rect x="432" y="516" width="12" height="12" fill="#3e3e3e"/>
<rect x="444" y="516" width="12" height="12" fill="#3f3f3f"/>
<rect x="456" y="516" width="12" height="12" fill="#404040"/>
<rect x="468" y="516" width="12" height="12" fill="#404040"/>
<rect x="480" y="516" width="12" height="12" fill="#414141"/>
<rect x="492" y="516" width="12" height="12" fill="#424242"/>
<rect x="504" y="516" width="12" height="12" fill="#434343"/>
<rect x="516" y="516" width="12" height="12" fill="#444444"/>
<rect x="528" y="516" width="12" height="12" fill="#454545"/>
<rect x="540" y="516" width="12" height="12" fill="#464646"/>
<rect x="552" y="516" width="12" height="12" fill="#484848"/>
<rect x="564" y="516" width="12" height="12" fill="#4a4a4a"/>
<rect x="576" y="516" width="12" height="12" fill="#4c4c4c"/>
<rect x="588" y="516" width="12" height="12" fill="#4e4e4e"/>
<rect x="600" y="516" width="12" height="12" fill="#505050"/>
<rect x="612" y="516" width="12" height="12" fill="#525252"/>
<rect x="624" y="516" width="12" height="12" fill="#545454"/>
<rect x="636" y="516" width="12" height="12" fill="#565656"/>
<rect x="648" y="516" width="12" height="12" fill="#585858"/>
<rect x="660" y="516" width="12" height="12" fill="#595959"/>
<rect x="672" y="516" width="12" height="12" fill="#5b5b5b"/>
<rect x="684" y="516" width="12" height="12" fill="#5c5c5c"/>
<rect x="696" y="516" width="12" height="12" fill="#5c5c5c"/>
<rect x="708" y="516" width="12" height="12" fill="#5c5c5c"/>
<rect x="720" y="516" width="12" height="12" fill="#5b5b5b"/>
<rect x="732" y="516" width="12" height="12" fill="#5a5a5a"/>
<rect x="744" y="516" width="12" height="12" fill="#5a5a5a"/>
<rect x="756" y="516" width="12" height="12" fill="#595959"/>
<rect x="768" y="516" width="12" height="12" fill="#585858"/>
<rect x="780" y="516" width="12" height="12" fill="#585858"/>
<rect x="792" y="516" width="12" height="12" fill="#585858"/>
<rect x="804" y="516" width="12" height="12" fill="#575757"/>
<rect x="816" y="516" width="12" height="12" fill="#565656"/>
<rect x="828" y="516" width="12" height="12" fill="#545454"/>
<rect x="840" y="516" width="12" height="12" fill="#525252"/>
<rect x="852" y="516" width="12" height="12" fill="#505050"/>
<rect x="864" y="516" width="12" height="12" fill="#4e4e4e"/>
<rect x="876" y="516" width="12" height="12" fill="#4c4c4c"/>
<rect x="888" y="516" width="12" height="12" fill="#4a4a4a"/>
<rect x="900" y="516" width="12" height="12" fill="#484848"/>
<rect x="912" y="516" width="12" height="12" fill="#464646"/>
<rect x="924" y="516" width="12" height="12" fill="#454545"/>
<rect x="936" y="516" width="12" height="12" fill="#434343"/>
<rect x="948" y="516" width="12" height="12" fill="#414141"/>
<rect x="960" y="516" width="12" height="12" fill="#404040"/>
<rect x="972" y="516" width="12" height="12" fill="#3e3e3e"/>
<rect x="984" y="516" width="12" height="12" fill="#3c3c3c"/>
<rect x="996" y="516" width="12" height="12" fill="#3b3b3b"/>
<rect x="1008" y="516" width="12" height="12" fill="#393939"/>
<rect x="1020" y="516" width="12" height="12" fill="#383838"/>
<rect x="1032" y="516" width="12" height="12" fill="#363636"/>
<rect x="1044" y="516" width="12" height="12" fill="#353535"/>
<rect x="1056" y="516" width="12" height="12" fill="#343434"/>
<rect x="1068" y="516" width="12" height="12" fill="#333333"/>
<rect x="1080" y="516" width="12" height="12" fill="#323232"/>
<rect x="276" y="528" width="12" height="12" fill="#383838"/>
<rect x="288" y="528" width="12" height="12" fill="#383838"/>
<rect x="300" y="528" width="12" height="12" fill="#393939"/>
<rect x="312" y="528" width="12" height="12" fill="#393939"/>
<rect x="324" y="528" width="12" height="12" fill="#393939"/>
<rect x="336" y="528" width="12" height="12" fill="#3a3a3a"/>
<rect x="348" y="528" width="12" height="12" fill="#3a3a3a"/>
<rect x="360" y="528" width="12" height="12" fill="#3b3b3b"/>
<rect x="372" y="528" width="12" height="12" fill="#3b3b3b"/>
<rect x="384" y="528" width="12" height="12" fill="#3c3c3c"/>
<rect x="396" y="528" width="12" height="12" fill="#3c3c3c"/>
<rect x="408" y="528" width="12" height="12" fill="#3d3d3d"/>
<rect x="420" y="528" width="12" height="12" fill="#3d3d3d"/>
<rect x="432" y="528" width="12" height="12" fill="#3e3e3e"/>
<rect x="444" y="528" width="12" height="12" fill="#3e3e3e"/>
<rect x="456" y="528" width="12" height="12" fill="#3f3f3f"/>
<rect x="468" y="528" width="12" height="12" fill="#3f3f3f"/>
<rect x="480" y="528" width="12" height="12" fill="#404040"/>
<rect x="492" y="528" width="12" height="12" fill="#414141"/>
<rect x="504" y="528" width="12" height="12" fill="#424242"/>
<rect x="516" y="528" width="12" height="12" fill="#434343"/>
<rect x="528" y="528" width="12" height="12" fill="#444444"/>
<rect x="540" y="528" width="12" height="12" fill="#454545"/>
<rect x="552" y="528" width="12" height="12" fill="#474747"/>
<rect x="564" y="528" width="12" height="12" fill="#494949"/>
<rect x="576" y="528" width="12" height="12" fill="#4b4b4b"/>
<rect x="588" y="528" width="12" height="12" fill="#4d4d4d"/>
<rect x="600" y="528" width="12" height="12" fill="#4f4f4f"/>
<rect x="612" y="528" width="12" height="12" fill="#515151"/>
<rect x="624" y="528" width="12" height="12" fill="#535353"/>
<rect x="636" y="528" width="12" height="12" fill="#555555"/>
<rect x="648" y="528" width="12" height="12" fill="#575757"/>
<rect x="660" y="528" width="12" height="12" fill="#595959"/>
<rect x="672" y="528" width="12" height="12" fill="#5a5a5a"/>
<rect x="684" y="528" width="12" height="12" fill="#5b5b5b"/>
<rect x="696" y="528" width="12" height="12" fill="#5c5c5c"/>
<rect x="708" y="528" width="12" height="12" fill="#5c5c5c"/>
<rect x="720" y="528" width="12" height="12" fill="#5b5b5b"/>
<rect x="732" y="528" width="12" height="12" fill="#5b5b5b"/>
<rect x="744" y="528" width="12" height="12" fill="#5a5a5a"/>
<rect x="756" y="528" width="12" height="12" fill="#5a5a5a"/>
<rect x="768" y="528" width="12" height="12" fill="#5a5a5a"/>
<rect x="780" y="528" width="12" height="12" fill="#595959"/>
<rect x="792" y="528" width="12" height="12" fill="#595959"/>
<rect x="804" y="528" width="12" height="12" fill="#585858"/>
<rect x="816" y="528" width="12" height="12" fill="#575757"/>
<rect x="828" y="528" width="12" height="12" fill="#565656"/>
<rect x="840" y="528" width="12" height="12" fill="#555555"/>
<rect x="852" y="528" width="12" height="12" fill="#535353"/>
<rect x="864" y="528" width="12" height="12" fill="#515151"/>
<rect x="876" y="528" width="12" height="12" fill="#4f4f4f"/>
<rect x="888" y="528" width="12" height="12" fill="#4d4d4d"/>
<rect x="900" y="528" width="12" height="12" fill="#4b4b4b"/>
<rect x="912" y="528" width="12" height="12" fill="#4a4a4a"/>
<rect x="924" y="528" width="12" height="12" fill="#484848"/>
<rect x="936" y="528" width="12" height="12" fill="#464646"/>
<rect x="948" y="528" width="12" height="12" fill="#454545"/>
<rect x="960" y="528" width="12" height="12" fill="#434343"/>
<rect x="972" y="528" width="12" height="12" fill="#414141"/>
<rect x="984" y="528" width="12" height="12" fill="#3f3f3f"/>
<rect x="996" y="528" width="12" height="12" fill="#3d3d3d"/>
<rect x="1008" y="528" width="12" height="12" fill="#3c3c3c"/>
<rect x="1020" y="528" width="12" height="12" fill="#3a3a3a"/>
<rect x="1032" y="528" width="12" height="12" fill="#393939"/>
<rect x="1044" y="528" width="12" height="12" fill="#373737"/>
<rect x="1056" y="528" width="12" height="12" fill="#363636"/>
<rect x="1068" y="528" width="12" height="12" fill="#353535"/>
<rect x="1080" y="528" width="12" height="12" fill="#343434"/>
<rect x="276" y="540" width="12" height="12" fill="#373737"/>
<rect x="288" y="540" width="12" height="12" fill="#373737"/>
<rect x="300" y="540" width="12" height="12" fill="#383838"/>
<rect x="312" y="540" width="12" height="12" fill="#383838"/>
<rect x="324" y="540" width="12" height="12" fill="#393939"/>
<rect x="336" y="540" width="12" height="12" fill="#393939"/>
<rect x="348" y="540" width="12" height="12" fill="#3a3a3a"/>
<rect x="360" y="540" width="12" height="12" fill="#3a3a3a"/>
<rect x="372" y="540" width="12" height="12" fill="#3a3a3a"/>
<rect x="384" y="540" width="12" height="12" fill="#3b3b3b"/>
<rect x="396" y="540" width="12" height="12" fill="#3b3b3b"/>
<rect x="408" y="540" width="12" height="12" fill="#3c3c3c"/>
<rect x="420" y="540" width="12" height="12" fill="#3c3c3c"/>
<rect x="432" y="540" width="12" height="12" fill="#3d3d3d"/>
<rect x="444" y="540" width="12" height="12" fill="#3d3d3d"/>
<rect x="456" y="540" width="12" height="12" fill="#3e3e3e"/>
<rect x="468" y="540" width="12" height="12" fill="#3f3f3f"/>
<rect x="480" y="540" width="12" height="12" fill="#3f3f3f"/>
<rect x="492" y="540" width="12" height="12" fill="#404040"/>
<rect x="504" y="540" width="12" height="12" fill="#414141"/>
<rect x="516" y="540" width="12" height="12" fill="#424242"/>
<rect x="528" y="540" width="12" height="12" fill="#434343"/>
<rect x="540" y="540" width="12" height="12" fill="#444444"/>
<rect x="552" y="540" width="12" height="12" fill="#464646"/>
<rect x="564" y="540" width="12" height="12" fill="#484848"/>
<rect x="576" y="540" width="12" height="12" fill="#4a4a4a"/>
<rect x="588" y="540" width="12" height="12" fill="#4c4c4c"/>
<rect x="600" y="540" width="12" height="12" fill="#4e4e4e"/>
<rect x="612" y="540" width="12" height="12" fill="#505050"/>
<rect x="624" y="540" width="12" height="12" fill="#525252"/>
<rect x="636" y="540" width="12" height="12" fill="#545454"/>
<rect x="648" y="540" width="12" height="12" fill="#565656"/>
<rect x="660" y="540" width="12" height="12" fill="#585858"/>
<rect x="672" y="540" width="12" height="12" fill="#595959"/>
<rect x="684" y="540" width="12" height="12" fill="#5a5a5a"/>
<rect x="696" y="540" width="12" height="12" fill="#5b5b5b"/>
<rect x="708" y="540" width="12" height="12" fill="#5b5b5b"/>
<rect x="720" y="540" width="12" height="12" fill="#5b5b5b"/>
<rect x="732" y="540" width="12" height="12" fill="#5b5b5b"/>
<rect x="744" y="540" width="12" height="12" fill="#5b5b5b"/>
<rect x="756" y="540" width="12" height="12" fill="#5b5b5b"/>
<rect x="768" y="540" width="12" height="12" fill="#5b5b5b"/>
<rect x="780" y="540" width="12" height="12" fill="#5a5a5a"/>
<rect x="792" y="540" width="12" height="12" fill="#5a5a5a"/>
<rect x="804" y="540" width="12" height="12" fill="#5a5a5a"/>
<rect x="816" y="540" width="12" height="12" fill="#595959"/>
<rect x="828" y="540" width="12" height="12" fill="#585858"/>
<rect x="840" y="540" width="12" height="12" fill="#575757"/>
<rect x="852" y="540" width="12" height="12" fill="#555555"/>
<rect x="864" y="540" width="12" height="12" fill="#545454"/>
<rect x="876" y="540" width="12" height="12" fill="#525252"/>
<rect x="888" y="540" width="12" height="12" fill="#505050"/>
<rect x="900" y="540" width="12" height="12" fill="#4f4f4f"/>
<rect x="912" y="540" width="12" height="12" fill="#4d4d4d"/>
<rect x="924" y="540" width="12" height="12" fill="#4b4b4b"/>
<rect x="936" y="540" width="12" height="12" fill="#4a4a4a"/>
<rect x="948" y="540" width="12" height="12" fill="#484848"/>
<rect x="960" y="540" width="12" height="12" fill="#464646"/>
<rect x="972" y="540" width="12" height="12" fill="#444444"/>
<rect x="984" y="540" width="12" height="12" fill="#424242"/>
<rect x="996" y="540" width="12" height="12" fill="#404040"/>
<rect x="1008" y="540" width="12" height="12" fill="#3e3e3e"/>
<rect x="1020" y="540" width="12" height="12" fill="#3d3d3d"/>
<rect x="1032" y="540" width="12" height="12" fill="#3b3b3b"/>
<rect x="1044" y="540" width="12" height="12" fill="#3a3a3a"/>
<rect x="1056" y="540" width="12" height="12" fill="#393939"/>
<rect x="1068" y="540" width="12" height="12" fill="#373737"/>
<rect x="1080" y="540" width="12" height="12" fill="#363636"/>
<rect x="276" y="552" width="12" height="12" fill="#363636"/>
<rect x="288" y="552" width="12" height="12" fill="#373737"/>
<rect x="300" y="552" width="12" height="12" fill="#373737"/>
<rect x="312" y="552" width="12" height="12" fill="#383838"/>
<rect x="324" y="552" width="12" height="12" fill="#383838"/>
<rect x="336" y="552" width="12" height="12" fill="#383838"/>
<rect x="348" y="552" width="12" height="12" fill="#393939"/>
<rect x="360" y="552" width="12" height="12" fill="#393939"/>
<rect x="372" y="552" width="12" height="12" fill="#3a3a3a"/>
<rect x="384" y="552" width="12" height="12" fill="#3a3a3a"/>
<rect x="396" y="552" width="12" height="12" fill="#3a3a3a"/>
<rect x="408" y="552" width="12" height="12" fill="#3b3b3b"/>
<rect x="420" y="552" width="12" height="12" fill="#3b3b3b"/>
<rect x="432" y="552" width="12" height="12" fill="#3c3c3c"/>
<rect x="444" y="552" width="12" height="12" fill="#3c3c3c"/>
<rect x="456" y="552" width="12" height="12" fill="#3d3d3d"/>
<rect x="468" y="552" width="12" height="12" fill="#3e3e3e"/>
<rect x="480" y="552" width="12" height="12" fill="#3e3e3e"/>
<rect x="492" y="552" width="12" height="12" fill="#3f3f3f"/>
<rect x="504" y="552" width="12" height="12" fill="#404040"/>
<rect x="516" y="552" width="12" height="12" fill="#414141"/>
<rect x="528" y="552" width="12" height="12" fill="#424242"/>
<rect x="540" y="552" width="12" height="12" fill="#434343"/>
<rect x="552" y="552" width="12" height="12" fill="#454545"/>
<rect x="564" y="552" width="12" height="12" fill="#474747"/>
<rect x="576" y="552" width="12" height="12" fill="#494949"/>
<rect x="588" y="552" width="12" height="12" fill="#4b4b4b"/>
<rect x="600" y="552" width="12" height="12" fill="#4d4d4d"/>
<rect x="612" y="552" width="12" height="12" fill="#4f4f4f"/>
<rect x="624" y="552" width="12" height="12" fill="#515151"/>
<rect x="636" y="552" width="12" height="12" fill="#535353"/>
<rect x="648" y="552" width="12" height="12" fill="#555555"/>
<rect x="660" y="552" width="12" height="12" fill="#575757"/>
<rect x="672" y="552" width="12" height="12" fill="#585858"/>
<rect x="684" y="552" width="12" height="12" fill="#595959"/>
<rect x="696" y="552" width="12" height="12" fill="#5a5a5a"/>
<rect x="708" y="552" width="12" height="12" fill="#5b5b5b"/>
<rect x="720" y="552" width="12" height="12" fill="#5b5b5b"/>
<rect x="732" y="552" width="12" height="12" fill="#5b5b5b"/>
<rect x="744" y="552" width="12" height="12" fill="#5b5b5b"/>
<rect x="756" y="552" width="12" height="12" fill="#5b5b5b"/>
<rect x="768" y="552" width="12" height="12" fill="#5b5b5b"/>
<rect x="780" y="552" width="12" height="12" fill="#5b5b5b"/>
<rect x="792" y="552" width="12" height="12" fill="#5b5b5b"/>
<rect x="804" y="552" width="12" height="12" fill="#5b5b5b"/>
<rect x="816" y="552" width="12" height="12" fill="#5a5a5a"/>
<rect x="828" y="552" width="12" height="12" fill="#5a5a5a"/>
<rect x="840" y="552" width="12" height="12" fill="#595959"/>
<rect x="852" y="552" width="12" height="12" fill="#575757"/>
<rect x="864" y="552" width="12" height="12" fill="#565656"/>
<rect x="876" y="552" width="12" height="12" fill="#555555"/>
<rect x="888" y="552" width="12" height="12" fill="#535353"/>
<rect x="900" y="552" width="12" height="12" fill="#525252"/>
<rect x="912" y="552" width="12" height="12" fill="#505050"/>
<rect x="924" y="552" width="12" height="12" fill="#4f4f4f"/>
<rect x="936" y="552" width="12" height="12" fill="#4d4d4d"/>
<rect x="948" y="552" width="12" height="12" fill="#4b4b4b"/>
<rect x="960" y="552" width="12" height="12" fill="#494949"/>
<rect x="972" y="552" width="12" height="12" fill="#474747"/>
<rect x="984" y="552" width="12" height="12" fill="#454545"/>
<rect x="996" y="552" width="12" height="12" fill="#434343"/>
<rect x="1008" y="552" width="12" height="12" fill="#414141"/>
<rect x="1020" y="552" width="12" height="12" fill="#3f3f3f"/>
<rect x="1032" y="552" width="12" height="12" fill="#3e3e3e"/>
<rect x="1044" y="552" width="12" height="12" fill="#3c3c3c"/>
<rect x="1056" y="552" width="12" height="12" fill="#3b3b3b"/>
<rect x="1068" y="552" width="12" height="12" fill="#393939"/>
<rect x="1080" y="552" width="12" height="12" fill="#383838"/>
<rect x="276" y="564" width="12" height="12" fill="#363636"/>
<rect x="288" y="564" width="12" height="12" fill="#363636"/>
<rect x="300" y="564" width="12" height="12" fill="#373737"/>
<rect x="312" y="564" width="12" height="12" fill="#373737"/>
<rect x="324" y="564" width="12" height="12" fill="#373737"/>
<rect x="336" y="564" width="12" height="12" fill="#383838"/>
<rect x="348" y="564" width="12" height="12" fill="#383838"/>
<rect x="360" y="564" width="12" height="12" fill="#383838"/>
<rect x="372" y="564" width="12" height="12" fill="#393939"/>
<rect x="384" y="564" width="12" height="12" fill="#393939"/>
<rect x="396" y="564" width="12" height="12" fill="#393939"/>
<rect x="408" y="564" width="12" height="12" fill="#3a3a3a"/>
<rect x="420" y="564" width="12" height="12" fill="#3a3a3a"/>
<rect x="432" y="564" width="12" height="12" fill="#3b3b3b"/>
<rect x="444" y="564" width="12" height="12" fill="#3b3b3b"/>
<rect x="456" y="564" width="12" height="12" fill="#3c3c3c"/>
<rect x="468" y="564" width="12" height="12" fill="#3d3d3d"/>
<rect x="480" y="564" width="12" height="12" fill="#3e3e3e"/>
<rect x="492" y="564" width="12" height="12" fill="#3f3f3f"/>
<rect x="504" y="564" width="12" height="12" fill="#404040"/>
<rect x="516" y="564" width="12" height="12" fill="#404040"/>
<rect x="528" y="564" width="12" height="12" fill="#414141"/>
<rect x="540" y="564" width="12" height="12" fill="#424242"/>
<rect x="552" y="564" width="12" height="12" fill="#444444"/>
<rect x="564" y="564" width="12" height="12" fill="#464646"/>
<rect x="576" y="564" width="12" height="12" fill="#484848"/>
<rect x="588" y="564" width="12" height="12" fill="#4a4a4a"/>
<rect x="600" y="564" width="12" height="12" fill="#4c4c4c"/>
<rect x="612" y="564" width="12" height="12" fill="#4e4e4e"/>
<rect x="624" y="564" width="12" height="12" fill="#505050"/>
<rect x="636" y="564" width="12" height="12" fill="#525252"/>
<rect x="648" y="564" width="12" height="12" fill="#545454"/>
<rect x="660" y="564" width="12" height="12" fill="#565656"/>
<rect x="672" y="564" width="12" height="12" fill="#575757"/>
<rect x="684" y="564" width="12" height="12" fill="#585858"/>
<rect x="696" y="564" width="12" height="12" fill="#595959"/>
<rect x="708" y="564" width="12" height="12" fill="#5a5a5a"/>
<rect x="720" y="564" width="12" height="12" fill="#5a5a5a"/>
<rect x="732" y="564" width="12" height="12" fill="#5b5b5b"/>
<rect x="744" y="564" width="12" height="12" fill="#5b5b5b"/>
<rect x="756" y="564" width="12" height="12" fill="#5c5c5c"/>
<rect x="768" y="564" width="12" height="12" fill="#5c5c5c"/>
<rect x="780" y="564" width="12" height="12" fill="#5c5c5c"/>
<rect x="792" y="564" width="12" height="12" fill="#5c5c5c"/>
<rect x="804" y="564" width="12" height="12" fill="#5c5c5c"/>
<rect x="816" y="564" width="12" height="12" fill="#5b5b5b"/>
<rect x="828" y="564" width="12" height="12" fill="#5b5b5b"/>
<rect x="840" y="564" width="12" height="12" fill="#5a5a5a"/>
<rect x="852" y="564" width="12" height="12" fill="#595959"/>
<rect x="864" y="564" width="12" height="12" fill="#585858"/>
<rect x="876" y="564" width="12" height="12" fill="#575757"/>
<rect x="888" y="564" width="12" height="12" fill="#565656"/>
<rect x="900" y="564" width="12" height="12" fill="#555555"/>
<rect x="912" y="564" width="12" height="12" fill="#535353"/>
<rect x="924" y="564" width="12" height="12" fill="#525252"/>
<rect x="936" y="564" width="12" height="12" fill="#505050"/>
<rect x="948" y="564" width="12" height="12" fill="#4e4e4e"/>
<rect x="960" y="564" width="12" height="12" fill="#4b4b4b"/>
<rect x="972" y="564" width="12" height="12" fill="#494949"/>
<rect x="984" y="564" width="12" height="12" fill="#474747"/>
<rect x="996" y="564" width="12" height="12" fill="#454545"/>
<rect x="1008" y="564" width="12" height="12" fill="#434343"/>
<rect x="1020" y="564" width="12" height="12" fill="#414141"/>
<rect x="1032" y="564" width="12" height="12" fill="#404040"/>
<rect x="1044" y="564" width="12" height="12" fill="#3e3e3e"/>
<rect x="1056" y="564" width="12" height="12" fill="#3d3d3d"/>
<rect x="1068" y="564" width="12" height="12" fill="#3c3c3c"/>
<rect x="1080" y="564" width="12" height="12" fill="#3a3a3a"/>
<rect x="276" y="576" width="12" height="12" fill="#353535"/>
<rect x="288" y="576" width="12" height="12" fill="#363636"/>
<rect x="300" y="576" width="12" height="12" fill="#363636"/>
<rect x="312" y="576" width="12" height="12" fill="#363636"/>
<rect x="324" y="576" width="12" height="12" fill="#363636"/>
<rect x="336" y="576" width="12" height="12" fill="#373737"/>
<rect x="348" y="576" width="12" height="12" fill="#373737"/>
<rect x="360" y="576" width="12" height="12" fill="#373737"/>
<rect x="372" y="576" width="12" height="12" fill="#383838"/>
<rect x="384" y="576" width="12" height="12" fill="#383838"/>
<rect x="396" y="576" width="12" height="12" fill="#393939"/>
<rect x="408" y="576" width="12" height="12" fill="#393939"/>
<rect x="420" y="576" width="12" height="12" fill="#393939"/>
<rect x="432" y="576" width="12" height="12" fill="#3a3a3a"/>
<rect x="444" y="576" width="12" height="12" fill="#3b3b3b"/>
<rect x="456" y="576" width="12" height="12" fill="#3b3b3b"/>
<rect x="468" y="576" width="12" height="12" fill="#3c3c3c"/>
<rect x="480" y="576" width="12" height="12" fill="#3d3d3d"/>
<rect x="492" y="576" width="12" height="12" fill="#3e3e3e"/>
<rect x="504" y="576" width="12" height="12" fill="#3f3f3f"/>
<rect x="516" y="576" width="12" height="12" fill="#404040"/>
<rect x="528" y="576" width="12" height="12" fill="#414141"/>
<rect x="540" y="576" width="12" height="12" fill="#424242"/>
<rect x="552" y="576" width="12" height="12" fill="#434343"/>
<rect x="564" y="576" width="12" height="12" fill="#454545"/>
<rect x="576" y="576" width="12" height="12" fill="#474747"/>
<rect x="588" y="576" width="12" height="12" fill="#494949"/>
<rect x="600" y="576" width="12" height="12" fill="#4b4b4b"/>
<rect x="612" y="576" width="12" height="12" fill="#4d4d4d"/>
<rect x="624" y="576" width="12" height="12" fill="#4f4f4f"/>
<rect x="636" y="576" width="12" height="12" fill="#515151"/>
<rect x="648" y="576" width="12" height="12" fill="#535353"/>
<rect x="660" y="576" width="12" height="12" fill="#545454"/>
<rect x="672" y="576" width="12" height="12" fill="#565656"/>
<rect x="684" y="576" width="12" height="12" fill="#575757"/>
<rect x="696" y="576" width="12" height="12" fill="#585858"/>
<rect x="708" y="576" width="12" height="12" fill="#595959"/>
<rect x="720" y="576" width="12" height="12" fill="#5a5a5a"/>
<rect x="732" y="576" width="12" height="12" fill="#5b5b5b"/>
<rect x="744" y="576" width="12" height="12" fill="#5b5b5b"/>
<rect x="756" y="576" width="12" height="12" fill="#5c5c5c"/>
<rect x="768" y="576" width="12" height="12" fill="#5c5c5c"/>
<rect x="780" y="576" width="12" height="12" fill="#5c5c5c"/>
<rect x="792" y="576" width="12" height="12" fill="#5d5d5d"/>
<rect x="804" y="576" width="12" height="12" fill="#5d5d5d"/>
<rect x="816" y="576" width="12" height="12" fill="#5c5c5c"/>
<rect x="828" y="576" width="12" height="12" fill="#5c5c5c"/>
<rect x="840" y="576" width="12" height="12" fill="#5c5c5c"/>
<rect x="852" y="576" width="12" height="12" fill="#5b5b5b"/>
<rect x="864" y="576" width="12" height="12" fill="#5a5a5a"/>
<rect x="876" y="576" width="12" height="12" fill="#595959"/>
<rect x="888" y="576" width="12" height="12" fill="#585858"/>
<rect x="900" y="576" width="12" height="12" fill="#575757"/>
<rect x="912" y="576" width="12" height="12" fill="#565656"/>
<rect x="924" y="576" width="12" height="12" fill="#545454"/>
<rect x="936" y="576" width="12" height="12" fill="#535353"/>
<rect x="948" y="576" width="12" height="12" fill="#505050"/>
<rect x="960" y="576" width="12" height="12" fill="#4e4e4e"/>
<rect x="972" y="576" width="12" height="12" fill="#4b4b4b"/>
<rect x="984" y="576" width="12" height="12" fill="#494949"/>
<rect x="996" y="576" width="12" height="12" fill="#474747"/>
<rect x="1008" y="576" width="12" height="12" fill="#454545"/>
<rect x="1020" y="576" width="12" height="12" fill="#444444"/>
<rect x="1032" y="576" width="12" height="12" fill="#424242"/>
<rect x="1044" y="576" width="12" height="12" fill="#414141"/>
<rect x="1056" y="576" width="12" height="12" fill="#3f3f3f"/>
<rect x="1068" y="576" width="12" height="12" fill="#3e3e3e"/>
<rect x="1080" y="576" width="12" height="12" fill="#3c3c3c"/>
<rect x="276" y="588" width="12" height="12" fill="#353535"/>
<rect x="288" y="588" width="12" height="12" fill="#353535"/>
<rect x="300" y="588" width="12" height="12" fill="#353535"/>
<rect x="312" y="588" width="12" height="12" fill="#353535"/>
<rect x="324" y="588" width="12" height="12" fill="#363636"/>
<rect x="336" y="588" width="12" height="12" fill="#363636"/>
<rect x="348" y="588" width="12" height="12" fill="#363636"/>
<rect x="360" y="588" width="12" height="12" fill="#373737"/>
<rect x="372" y="588" width="12" height="12" fill="#373737"/>
<rect x="384" y="588" width="12" height="12" fill="#373737"/>
<rect x="396" y="588" width="12" height="12" fill="#383838"/>
<rect x="408" y="588" width="12" height="12" fill="#383838"/>
<rect x="420" y="588" width="12" height="12" fill="#393939"/>
<rect x="432" y="588" width="12" height="12" fill="#393939"/>
<rect x="444" y="588" width="12" height="12" fill="#3a3a3a"/>
<rect x="456" y="588" width="12" height="12" fill="#3a3a3a"/>
<rect x="468" y="588" width="12" height="12" fill="#3b3b3b"/>
<rect x="480" y="588" width="12" height="12" fill="#3c3c3c"/>
<rect x="492" y="588" width="12" height="12" fill="#3d3d3d"/>
<rect x="504" y="588" width="12" height="12" fill="#3e3e3e"/>
<rect x="516" y="588" width="12" height="12" fill="#3f3f3f"/>
<rect x="528" y="588" width="12" height="12" fill="#404040"/>
<rect x="540" y="588" width="12" height="12" fill="#414141"/>
<rect x="552" y="588" width="12" height="12" fill="#434343"/>
<rect x="564" y="588" width="12" height="12" fill="#444444"/>
<rect x="576" y="588" width="12" height="12" fill="#464646"/>
<rect x="588" y="588" width="12" height="12" fill="#484848"/>
<rect x="600" y="588" width="12" height="12" fill="#4a4a4a"/>
<rect x="612" y="588" width="12" height="12" fill="#4c4c4c"/>
<rect x="624" y="588" width="12" height="12" fill="#4e4e4e"/>
<rect x="636" y="588" width="12" height="12" fill="#505050"/>
<rect x="648" y="588" width="12" height="12" fill="#525252"/>
<rect x="660" y="588" width="12" height="12" fill="#535353"/>
<rect x="672" y="588" width="12" height="12" fill="#555555"/>
<rect x="684" y="588" width="12" height="12" fill="#565656"/>
<rect x="696" y="588" width="12" height="12" fill="#575757"/>
<rect x="708" y="588" width="12" height="12" fill="#585858"/>
<rect x="720" y="588" width="12" height="12" fill="#595959"/>
<rect x="732" y="588" width="12" height="12" fill="#5a5a5a"/>
<rect x="744" y="588" width="12" height="12" fill="#5b5b5b"/>
<rect x="756" y="588" width="12" height="12" fill="#5c5c5c"/>
<rect x="768" y="588" width="12" height="12" fill="#5c5c5c"/>
<rect x="780" y="588" width="12" height="12" fill="#5d5d5d"/>
<rect x="792" y="588" width="12" height="12" fill="#5d5d5d"/>
<rect x="804" y="588" width="12" height="12" fill="#5d5d5d"/>
<rect x="816" y="588" width="12" height="12" fill="#5d5d5d"/>
<rect x="828" y="588" width="12" height="12" fill="#5d5d5d"/>
<rect x="840" y="588" width="12" height="12" fill="#5d5d5d"/>
<rect x="852" y="588" width="12" height="12" fill="#5c5c5c"/>
<rect x="864" y="588" width="12" height="12" fill="#5c5c5c"/>
<rect x="876" y="588" width="12" height="12" fill="#5b5b5b"/>
<rect x="888" y="588" width="12" height="12" fill="#5a5a5a"/>
<rect x="900" y="588" width="12" height="12" fill="#595959"/>
<rect x="912" y="588" width="12" height="12" fill="#585858"/>
<rect x="924" y="588" width="12" height="12" fill="#575757"/>
<rect x="936" y="588" width="12" height="12" fill="#555555"/>
<rect x="948" y="588" width="12" height="12" fill="#535353"/>
<rect x="960" y="588" width="12" height="12" fill="#505050"/>
<rect x="972" y="588" width="12" height="12" fill="#4e4e4e"/>
<rect x="984" y="588" width="12" height="12" fill="#4b4b4b"/>
<rect x="996" y="588" width="12" height="12" fill="#494949"/>
<rect x="1008" y="588" width="12" height="12" fill="#484848"/>
<rect x="1020" y="588" width="12" height="12" fill="#464646"/>
<rect x="1032" y="588" width="12" height="12" fill="#444444"/>
<rect x="1044" y="588" width="12" height="12" fill="#434343"/>
<rect x="1056" y="588" width="12" height="12" fill="#414141"/>
<rect x="1068" y="588" width="12" height="12" fill="#404040"/>
<rect x="1080" y="588" width="12" height="12" fill="#3e3e3e"/>
<rect x="276" y="600" width="12" height="12" fill="#343434"/>
<rect x="288" y="600" width="12" height="12" fill="#343434"/>
<rect x="300" y="600" width="12" height="12" fill="#353535"/>
<rect x="312" y="600" width="12" height="12" fill="#353535"/>
<rect x="324" y="600" width="12" height="12" fill="#353535"/>
<rect x="336" y="600" width="12" height="12" fill="#353535"/>
<rect x="348" y="600" width="12" height="12" fill="#363636"/>
<rect x="360" y="600" width="12" height="12" fill="#363636"/>
<rect x="372" y="600" width="12" height="12" fill="#363636"/>
<rect x="384" y="600" width="12" height="12" fill="#373737"/>
<rect x="396" y="600" width="12" height="12" fill="#373737"/>
<rect x="408" y="600" width="12" height="12" fill="#373737"/>
<rect x="420" y="600" width="12" height="12" fill="#383838"/>
<rect x="432" y="600" width="12" height="12" fill="#383838"/>
<rect x="444" y="600" width="12" height="12" fill="#393939"/>
<rect x="456" y="600" width="12" height="12" fill="#393939"/>
<rect x="468" y="600" width="12" height="12" fill="#3a3a3a"/>
<rect x="480" y="600" width="12" height="12" fill="#3b3b3b"/>
<rect x="492" y="600" width="12" height="12" fill="#3c3c3c"/>
<rect x="504" y="600" width="12" height="12" fill="#3d3d3d"/>
<rect x="516" y="600" width="12" height="12" fill="#3e3e3e"/>
<rect x="528" y="600" width="12" height="12" fill="#3f3f3f"/>
<rect x="540" y="600" width="12" height="12" fill="#404040"/>
<rect x="552" y="600" width="12" height="12" fill="#424242"/>
<rect x="564" y="600" width="12" height="12" fill="#444444"/>
<rect x="576" y="600" width="12" height="12" fill="#454545"/>
<rect x="588" y="600" width="12" height="12" fill="#474747"/>
<rect x="600" y="600" width="12" height="12" fill="#494949"/>
<rect x="612" y="600" width="12" height="12" fill="#4b4b4b"/>
<rect x="624" y="600" width="12" height="12" fill="#4d4d4d"/>
<rect x="636" y="600" width="12" height="12" fill="#4f4f4f"/>
<rect x="648" y="600" width="12" height="12" fill="#515151"/>
<rect x="660" y="600" width="12" height="12" fill="#525252"/>
<rect x="672" y="600" width="12" height="12" fill="#545454"/>
<rect x="684" y="600" width="12" height="12" fill="#555555"/>
<rect x="696" y="600" width="12" height="12" fill="#565656"/>
<rect x="708" y="600" width="12" height="12" fill="#585858"/>
<rect x="720" y="600" width="12" height="12" fill="#595959"/>
<rect x="732" y="600" width="12" height="12" fill="#5a5a5a"/>
<rect x="744" y="600" width="12" height="12" fill="#5b5b5b"/>
<rect x="756" y="600" width="12" height="12" fill="#5c5c5c"/>
<rect x="768" y="600" width="12" height="12" fill="#5c5c5c"/>
<rect x="780" y="600" width="12" height="12" fill="#5d5d5d"/>
<rect x="792" y="600" width="12" height="12" fill="#5d5d5d"/>
<rect x="804" y="600" width="12" height="12" fill="#5e5e5e"/>
<rect x="816" y="600" width="12" height="12" fill="#5e5e5e"/>
<rect x="828" y="600" width="12" height="12" fill="#5e5e5e"/>
<rect x="840" y="600" width="12" height="12" fill="#5e5e5e"/>
<rect x="852" y="600" width="12" height="12" fill="#5d5d5d"/>
<rect x="864" y="600" width="12" height="12" fill="#5d5d5d"/>
<rect x="876" y="600" width="12" height="12" fill="#5c5c5c"/>
<rect x="888" y="600" width="12" height="12" fill="#5c5c5c"/>
<rect x="900" y="600" width="12" height="12" fill="#5b5b5b"/>
<rect x="912" y="600" width="12" height="12" fill="#5a5a5a"/>
<rect x="924" y="600" width="12" height="12" fill="#585858"/>
<rect x="936" y="600" width="12" height="12" fill="#575757"/>
<rect x="948" y="600" width="12" height="12" fill="#555555"/>
<rect x="960" y="600" width="12" height="12" fill="#525252"/>
<rect x="972" y="600" width="12" height="12" fill="#505050"/>
<rect x="984" y="600" width="12" height="12" fill="#4d4d4d"/>
<rect x="996" y="600" width="12" height="12" fill="#4b4b4b"/>
<rect x="1008" y="600" width="12" height="12" fill="#4a4a4a"/>
<rect x="1020" y="600" width="12" height="12" fill="#484848"/>
<rect x="1032" y="600" width="12" height="12" fill="#464646"/>
<rect x="1044" y="600" width="12" height="12" fill="#454545"/>
<rect x="1056" y="600" width="12" height="12" fill="#434343"/>
<rect x="1068" y="600" width="12" height="12" fill="#424242"/>
<rect x="1080" y="600" width="12" height="12" fill="#404040"/>
<rect x="276" y="612" width="12" height="12" fill="#343434"/>
<rect x="288" y="612" width="12" height="12" fill="#343434"/>
<rect x="300" y="612" width="12" height="12" fill="#343434"/>
<rect x="312" y="612" width="12" height="12" fill="#343434"/>
<rect x="324" y="612" width="12" height="12" fill="#353535"/>
<rect x="336" y="612" width="12" height="12" fill="#353535"/>
<rect x="348" y="612" width="12" height="12" fill="#353535"/>
<rect x="360" y="612" width="12" height="12" fill="#353535"/>
<rect x="372" y="612" width="12" height="12" fill="#363636"/>
<rect x="384" y="612" width="12" height="12" fill="#363636"/>
<rect x="396" y="612" width="12" height="12" fill="#363636"/>
<rect x="408" y="612" width="12" height="12" fill="#373737"/>
<rect x="420" y="612" width="12" height="12" fill="#373737"/>
<rect x="432" y="612" width="12" height="12" fill="#373737"/>
<rect x="444" y="612" width="12" height="12" fill="#383838"/>
<rect x="456" y="612" width="12" height="12" fill="#393939"/>
<rect x="468" y="612" width="12" height="12" fill="#393939"/>
<rect x="480" y="612" width="12" height="12" fill="#3a3a3a"/>
<rect x="492" y="612" width="12" height="12" fill="#3b3b3b"/>
<rect x="504" y="612" width="12" height="12" fill="#3c3c3c"/>
<rect x="516" y="612" width="12" height="12" fill="#3d3d3d"/>
<rect x="528" y="612" width="12" height="12" fill="#3e3e3e"/>
<rect x="540" y="612" width="12" height="12" fill="#404040"/>
<rect x="552" y="612" width="12" height="12" fill="#414141"/>
<rect x="564" y="612" width="12" height="12" fill="#434343"/>
<rect x="576" y="612" width="12" height="12" fill="#454545"/>
<rect x="588" y="612" width="12" height="12" fill="#464646"/>
<rect x="600" y="612" width="12" height="12" fill="#484848"/>
<rect x="612" y="612" width="12" height="12" fill="#4a4a4a"/>
<rect x="624" y="612" width="12" height="12" fill="#4c4c4c"/>
<rect x="636" y="612" width="12" height="12" fill="#4e4e4e"/>
<rect x="648" y="612" width="12" height="12" fill="#505050"/>
<rect x="660" y="612" width="12" height="12" fill="#525252"/>
<rect x="672" y="612" width="12" height="12" fill="#535353"/>
<rect x="684" y="612" width="12" height="12" fill="#545454"/>
<rect x="696" y="612" width="12" height="12" fill="#565656"/>
<rect x="708" y="612" width="12" height="12" fill="#575757"/>
<rect x="720" y="612" width="12" height="12" fill="#585858"/>
<rect x="732" y="612" width="12" height="12" fill="#595959"/>
<rect x="744" y="612" width="12" height="12" fill="#5a5a5a"/>
<rect x="756" y="612" width="12" height="12" fill="#5b5b5b"/>
<rect x="768" y="612" width="12" height="12" fill="#5c5c5c"/>
<rect x="780" y="612" width="12" height="12" fill="#5d5d5d"/>
<rect x="792" y="612" width="12" height="12" fill="#5e5e5e"/>
<rect x="804" y="612" width="12" height="12" fill="#5e5e5e"/>
<rect x="816" y="612" width="12" height="12" fill="#5e5e5e"/>
<rect x="828" y="612" width="12" height="12" fill="#5e5e5e"/>
<rect x="840" y="612" width="12" height="12" fill="#5e5e5e"/>
<rect x="852" y="612" width="12" height="12" fill="#5e5e5e"/>
<rect x="864" y="612" width="12" height="12" fill="#5e5e5e"/>
<rect x="876" y="612" width="12" height="12" fill="#5d5d5d"/>
<rect x="888" y="612" width="12" height="12" fill="#5d5d5d"/>
<rect x="900" y="612" width="12" height="12" fill="#5c5c5c"/>
<rect x="912" y="612" width="12" height="12" fill="#5b5b5b"/>
<rect x="924" y="612" width="12" height="12" fill="#5a5a5a"/>
<rect x="936" y="612" width="12" height="12" fill="#585858"/>
<rect x="948" y="612" width="12" height="12" fill="#565656"/>
<rect x="960" y="612" width="12" height="12" fill="#545454"/>
<rect x="972" y="612" width="12" height="12" fill="#525252"/>
<rect x="984" y="612" width="12" height="12" fill="#4f4f4f"/>
<rect x="996" y="612" width="12" height="12" fill="#4d4d4d"/>
<rect x="1008" y="612" width="12" height="12" fill="#4c4c4c"/>
<rect x="1020" y="612" width="12" height="12" fill="#4a4a4a"/>
<rect x="1032" y="612" width="12" height="12" fill="#484848"/>
<rect x="1044" y="612" width="12" height="12" fill="#474747"/>
<rect x="1056" y="612" width="12" height="12" fill="#454545"/>
<rect x="1068" y="612" width="12" height="12" fill="#444444"/>
<rect x="1080" y="612" width="12" height="12" fill="#424242"/>
<rect x="276" y="624" width="12" height="12" fill="#333333"/>
<rect x="288" y="624" width="12" height="12" fill="#333333"/>
<rect x="300" y="624" width="12" height="12" fill="#333333"/>
<rect x="312" y="624" width="12" height="12" fill="#343434"/>
<rect x="324" y="624" width="12" height="12" fill="#343434"/>
<rect x="336" y="624" width="12" height="12" fill="#343434"/>
<rect x="348" y="624" width="12" height="12" fill="#343434"/>
<rect x="360" y="624" width="12" height="12" fill="#353535"/>
<rect x="372" y="624" width="12" height="12" fill="#353535"/>
<rect x="384" y="624" width="12" height="12" fill="#353535"/>
<rect x="396" y="624" width="12" height="12" fill="#363636"/>
<rect x="408" y="624" width="12" height="12" fill="#363636"/>
<rect x="420" y="624" width="12" height="12" fill="#363636"/>
<rect x="432" y="624" width="12" height="12" fill="#373737"/>
<rect x="444" y="624" width="12" height="12" fill="#373737"/>
<rect x="456" y="624" width="12" height="12" fill="#383838"/>
<rect x="468" y="624" width="12" height="12" fill="#383838"/>
<rect x="480" y="624" width="12" height="12" fill="#393939"/>
<rect x="492" y="624" width="12" height="12" fill="#3a3a3a"/>
<rect x="504" y="624" width="12" height="12" fill="#3b3b3b"/>
<rect x="516" y="624" width="12" height="12" fill="#3c3c3c"/>
<rect x="528" y="624" width="12" height="12" fill="#3d3d3d"/>
<rect x="540" y="624" width="12" height="12" fill="#3f3f3f"/>
<rect x="552" y="624" width="12" height="12" fill="#404040"/>
<rect x="564" y="624" width="12" height="12" fill="#424242"/>
<rect x="576" y="624" width="12" height="12" fill="#444444"/>
<rect x="588" y="624" width="12" height="12" fill="#464646"/>
<rect x="600" y="624" width="12" height="12" fill="#484848"/>
<rect x="612" y="624" width="12" height="12" fill="#4a4a4a"/>
<rect x="624" y="624" width="12" height="12" fill="#4b4b4b"/>
<rect x="636" y="624" width="12" height="12" fill="#4d4d4d"/>
<rect x="648" y="624" width="12" height="12" fill="#4f4f4f"/>
<rect x="660" y="624" width="12" height="12" fill="#515151"/>
<rect x="672" y="624" width="12" height="12" fill="#525252"/>
<rect x="684" y="624" width="12" height="12" fill="#545454"/>
<rect x="696" y="624" width="12" height="12" fill="#555555"/>
<rect x="708" y="624" width="12" height="12" fill="#575757"/>
<rect x="720" y="624" width="12" height="12" fill="#585858"/>
<rect x="732" y="624" width="12" height="12" fill="#595959"/>
<rect x="744" y="624" width="12" height="12" fill="#5a5a5a"/>
<rect x="756" y="624" width="12" height="12" fill="#5b5b5b"/>
<rect x="768" y="624" width="12" height="12" fill="#5c5c5c"/>
<rect x="780" y="624" width="12" height="12" fill="#5d5d5d"/>
<rect x="792" y="624" width="12" height="12" fill="#5e5e5e"/>
<rect x="804" y="624" width="12" height="12" fill="#5e5e5e"/>
<rect x="816" y="624" width="12" height="12" fill="#5f5f5f"/>
<rect x="828" y="624" width="12" height="12" fill="#5f5f5f"/>
<rect x="840" y="624" width="12" height="12" fill="#5f5f5f"/>
<rect x="852" y="624" width="12" height="12" fill="#5f5f5f"/>
<rect x="864" y="624" width="12" height="12" fill="#5f5f5f"/>
<rect x="876" y="624" width="12" height="12" fill="#5e5e5e"/>
<rect x="888" y="624" width="12" height="12" fill="#5e5e5e"/>
<rect x="900" y="624" width="12" height="12" fill="#5d5d5d"/>
<rect x="912" y="624" width="12" height="12" fill="#5c5c5c"/>
<rect x="924" y="624" width="12" height="12" fill="#5b5b5b"/>
<rect x="936" y="624" width="12" height="12" fill="#595959"/>
<rect x="948" y="624" width="12" height="12" fill="#575757"/>
<rect x="960" y="624" width="12" height="12" fill="#555555"/>
<rect x="972" y="624" width="12" height="12" fill="#535353"/>
<rect x="984" y="624" width="12" height="12" fill="#515151"/>
<rect x="996" y="624" width="12" height="12" fill="#4f4f4f"/>
<rect x="1008" y="624" width="12" height="12" fill="#4d4d4d"/>
<rect x="1020" y="624" width="12" height="12" fill="#4c4c4c"/>
<rect x="1032" y="624" width="12" height="12" fill="#4a4a4a"/>
<rect x="1044" y="624" width="12" height="12" fill="#484848"/>
<rect x="1056" y="624" width="12" height="12" fill="#474747"/>
<rect x="1068" y="624" width="12" height="12" fill="#454545"/>
<rect x="1080" y="624" width="12" height="12" fill="#444444"/>
<rect x="276" y="636" width="12" height="12" fill="#333333"/>
<rect x="288" y="636" width="12" height="12" fill="#333333"/>
<rect x="300" y="636" width="12" height="12" fill="#333333"/>
<rect x="312" y="636" width="12" height="12" fill="#333333"/>
<rect x="324" y="636" width="12" height="12" fill="#333333"/>
<rect x="336" y="636" width="12" height="12" fill="#343434"/>
<rect x="348" y="636" width="12" height="12" fill="#343434"/>
<rect x="360" y="636" width="12" height="12" fill="#343434"/>
<rect x="372" y="636" width="12" height="12" fill="#343434"/>
<rect x="384" y="636" width="12" height="12" fill="#353535"/>
<rect x="396" y="636" width="12" height="12" fill="#353535"/>
<rect x="408" y="636" width="12" height="12" fill="#353535"/>
<rect x="420" y="636" width="12" height="12" fill="#363636"/>
<rect x="432" y="636" width="12" height="12" fill="#363636"/>
<rect x="444" y="636" width="12" height="12" fill="#373737"/>
<rect x="456" y="636" width="12" height="12" fill="#373737"/>
<rect x="468" y="636" width="12" height="12" fill="#383838"/>
<rect x="480" y="636" width="12" height="12" fill="#383838"/>
<rect x="492" y="636" width="12" height="12" fill="#393939"/>
<rect x="504" y="636" width="12" height="12" fill="#3a3a3a"/>
<rect x="516" y="636" width="12" height="12" fill="#3b3b3b"/>
<rect x="528" y="636" width="12" height="12" fill="#3d3d3d"/>
<rect x="540" y="636" width="12" height="12" fill="#3e3e3e"/>
<rect x="552" y="636" width="12" height="12" fill="#404040"/>
<rect x="564" y="636" width="12" height="12" fill="#424242"/>
<rect x="576" y="636" width="12" height="12" fill="#434343"/>
<rect x="588" y="636" width="12" height="12" fill="#454545"/>
<rect x="600" y="636" width="12" height="12" fill="#474747"/>
<rect x="612" y="636" width="12" height="12" fill="#494949"/>
<rect x="624" y="636" width="12" height="12" fill="#4b4b4b"/>
<rect x="636" y="636" width="12" height="12" fill="#4d4d4d"/>
<rect x="648" y="636" width="12" height="12" fill="#4e4e4e"/>
<rect x="660" y="636" width="12" height="12" fill="#505050"/>
<rect x="672" y="636" width="12" height="12" fill="#525252"/>
<rect x="684" y="636" width="12" height="12" fill="#535353"/>
<rect x="696" y="636" width="12" height="12" fill="#555555"/>
<rect x="708" y="636" width="12" height="12" fill="#565656"/>
<rect x="720" y="636" width="12" height="12" fill="#575757"/>
<rect x="732" y="636" width="12" height="12" fill="#595959"/>
<rect x="744" y="636" width="12" height="12" fill="#5a5a5a"/>
<rect x="756" y="636" width="12" height="12" fill="#5b5b5b"/>
<rect x="768" y="636" width="12" height="12" fill="#5c5c5c"/>
<rect x="780" y="636" width="12" height="12" fill="#5d5d5d"/>
<rect x="792" y="636" width="12" height="12" fill="#5e5e5e"/>
<rect x="804" y="636" width="12" height="12" fill="#5e5e5e"/>
<rect x="816" y="636" width="12" height="12" fill="#5f5f5f"/>
<rect x="828" y="636" width="12" height="12" fill="#5f5f5f"/>
<rect x="840" y="636" width="12" height="12" fill="#5f5f5f"/>
<rect x="852" y="636" width="12" height="12" fill="#5f5f5f"/>
<rect x="864" y="636" width="12" height="12" fill="#5f5f5f"/>
<rect x="876" y="636" width="12" height="12" fill="#5f5f5f"/>
<rect x="888" y="636" width="12" height="12" fill="#5e5e5e"/>
<rect x="900" y="636" width="12" height="12" fill="#5e5e5e"/>
<rect x="912" y="636" width="12" height="12" fill="#5d5d5d"/>
<rect x="924" y="636" width="12" height="12" fill="#5c5c5c"/>
<rect x="936" y="636" width="12" height="12" fill="#5a5a5a"/>
<rect x="948" y="636" width="12" height="12" fill="#595959"/>
<rect x="960" y="636" width="12" height="12" fill="#575757"/>
<rect x="972" y="636" width="12" height="12" fill="#555555"/>
<rect x="984" y="636" width="12" height="12" fill="#535353"/>
<rect x="996" y="636" width="12" height="12" fill="#515151"/>
<rect x="1008" y="636" width="12" height="12" fill="#4f4f4f"/>
<rect x="1020" y="636" width="12" height="12" fill="#4d4d4d"/>
<rect x="1032" y="636" width="12" height="12" fill="#4c4c4c"/>
<rect x="1044" y="636" width="12" height="12" fill="#4a4a4a"/>
<rect x="1056" y="636" width="12" height="12" fill="#484848"/>
<rect x="1068" y="636" width="12" height="12" fill="#474747"/>
<rect x="1080" y="636" width="12" height="12" fill="#464646"/>
<rect x="276" y="648" width="12" height="12" fill="#323232"/>
<rect x="288" y="648" width="12" height="12" fill="#323232"/>
<rect x="300" y="648" width="12" height="12" fill="#323232"/>
<rect x="312" y="648" width="12" height="12" fill="#333333"/>
<rect x="324" y="648" width="12" height="12" fill="#333333"/>
<rect x="336" y="648" width="12" height="12" fill="#333333"/>
<rect x="348" y="648" width="12" height="12" fill="#333333"/>
<rect x="360" y="648" width="12" height="12" fill="#343434"/>
<rect x="372" y="648" width="12" height="12" fill="#343434"/>
<rect x="384" y="648" width="12" height="12" fill="#343434"/>
<rect x="396" y="648" width="12" height="12" fill="#343434"/>
<rect x="408" y="648" width="12" height="12" fill="#353535"/>
<rect x="420" y="648" width="12" height="12" fill="#353535"/>
<rect x="432" y="648" width="12" height="12" fill="#363636"/>
<rect x="444" y="648" width="12" height="12" fill="#363636"/>
<rect x="456" y="648" width="12" height="12" fill="#363636"/>
<rect x="468" y="648" width="12" height="12" fill="#373737"/>
<rect x="480" y="648" width="12" height="12" fill="#383838"/>
<rect x="492" y="648" width="12" height="12" fill="#393939"/>
<rect x="504" y="648" width="12" height="12" fill="#393939"/>
<rect x="516" y="648" width="12" height="12" fill="#3b3b3b"/>
<rect x="528" y="648" width="12" height="12" fill="#3c3c3c"/>
<rect x="540" y="648" width="12" height="12" fill="#3e3e3e"/>
<rect x="552" y="648" width="12" height="12" fill="#3f3f3f"/>
<rect x="564" y="648" width="12" height="12" fill="#414141"/>
<rect x="576" y="648" width="12" height="12" fill="#434343"/>
<rect x="588" y="648" width="12" height="12" fill="#454545"/>
<rect x="600" y="648" width="12" height="12" fill="#464646"/>
<rect x="612" y="648" width="12" height="12" fill="#484848"/>
<rect x="624" y="648" width="12" height="12" fill="#4a4a4a"/>
<rect x="636" y="648" width="12" height="12" fill="#4c4c4c"/>
<rect x="648" y="648" width="12" height="12" fill="#4e4e4e"/>
<rect x="660" y="648" width="12" height="12" fill="#505050"/>
<rect x="672" y="648" width="12" height="12" fill="#515151"/>
<rect x="684" y="648" width="12" height="12" fill="#535353"/>
<rect x="696" y="648" width="12" height="12" fill="#545454"/>
<rect x="708" y="648" width="12" height="12" fill="#565656"/>
<rect x="720" y="648" width="12" height="12" fill="#575757"/>
<rect x="732" y="648" width="12" height="12" fill="#585858"/>
<rect x="744" y="648" width="12" height="12" fill="#5a5a5a"/>
<rect x="756" y="648" width="12" height="12" fill="#5b5b5b"/>
<rect x="768" y="648" width="12" height="12" fill="#5c5c5c"/>
<rect x="780" y="648" width="12" height="12" fill="#5d5d5d"/>
<rect x="792" y="648" width="12" height="12" fill="#5e5e5e"/>
<rect x="804" y="648" width="12" height="12" fill="#5e5e5e"/>
<rect x="816" y="648" width="12" height="12" fill="#5f5f5f"/>
<rect x="828" y="648" width="12" height="12" fill="#5f5f5f"/>
<rect x="840" y="648" width="12" height="12" fill="#5f5f5f"/>
<rect x="852" y="648" width="12" height="12" fill="#5f5f5f"/>
<rect x="864" y="648" width="12" height="12" fill="#5f5f5f"/>
<rect x="876" y="648" width="12" height="12" fill="#5f5f5f"/>
<rect x="888" y="648" width="12" height="12" fill="#5f5f5f"/>
<rect x="900" y="648" width="12" height="12" fill="#5e5e5e"/>
<rect x="912" y="648" width="12" height="12" fill="#5d5d5d"/>
<rect x="924" y="648" width="12" height="12" fill="#5c5c5c"/>
<rect x="936" y="648" width="12" height="12" fill="#5b5b5b"/>
<rect x="948" y="648" width="12" height="12" fill="#595959"/>
<rect x="960" y="648" width="12" height="12" fill="#585858"/>
<rect x="972" y="648" width="12" height="12" fill="#565656"/>
<rect x="984" y="648" width="12" height="12" fill="#545454"/>
<rect x="996" y="648" width="12" height="12" fill="#525252"/>
<rect x="1008" y="648" width="12" height="12" fill="#505050"/>
<rect x="1020" y="648" width="12" height="12" fill="#4f4f4f"/>
<rect x="1032" y="648" width="12" height="12" fill="#4d4d4d"/>
<rect x="1044" y="648" width="12" height="12" fill="#4c4c4c"/>
<rect x="1056" y="648" width="12" height="12" fill="#4a4a4a"/>
<rect x="1068" y="648" width="12" height="12" fill="#494949"/>
<rect x="1080" y="648" width="12" height="12" fill="#474747"/>
<rect x="276" y="660" width="12" height="12" fill="#323232"/>
<rect x="288" y="660" width="12" height="12" fill="#323232"/>
<rect x="300" y="660" width="12" height="12" fill="#323232"/>
<rect x="312" y="660" width="12" height="12" fill="#323232"/>
<rect x="324" y="660" width="12" height="12" fill="#323232"/>
<rect x="336" y="660" width="12" height="12" fill="#333333"/>
<rect x="348" y="660" width="12" height="12" fill="#333333"/>
<rect x="360" y="660" width="12" height="12" fill="#333333"/>
<rect x="372" y="660" width="12" height="12" fill="#333333"/>
<rect x="384" y="660" width="12" height="12" fill="#343434"/>
<rect x="396" y="660" width="12" height="12" fill="#343434"/>
<rect x="408" y="660" width="12" height="12" fill="#343434"/>
<rect x="420" y="660" width="12" height="12" fill="#353535"/>
<rect x="432" y="660" width="12" height="12" fill="#353535"/>
<rect x="444" y="660" width="12" height="12" fill="#363636"/>
<rect x="456" y="660" width="12" height="12" fill="#363636"/>
<rect x="468" y="660" width="12" height="12" fill="#373737"/>
<rect x="480" y="660" width="12" height="12" fill="#373737"/>
<rect x="492" y="660" width="12" height="12" fill="#383838"/>
<rect x="504" y="660" width="12" height="12" fill="#393939"/>
<rect x="516" y="660" width="12" height="12" fill="#3a3a3a"/>
<rect x="528" y="660" width="12" height="12" fill="#3c3c3c"/>
<rect x="540" y="660" width="12" height="12" fill="#3d3d3d"/>
<rect x="552" y="660" width="12" height="12" fill="#3f3f3f"/>
<rect x="564" y="660" width="12" height="12" fill="#414141"/>
<rect x="576" y="660" width="12" height="12" fill="#424242"/>
<rect x="588" y="660" width="12" height="12" fill="#444444"/>
<rect x="600" y="660" width="12" height="12" fill="#464646"/>
<rect x="612" y="660" width="12" height="12" fill="#484848"/>
<rect x="624" y="660" width="12" height="12" fill="#4a4a4a"/>
<rect x="636" y="660" width="12" height="12" fill="#4c4c4c"/>
<rect x="648" y="660" width="12" height="12" fill="#4d4d4d"/>
<rect x="660" y="660" width="12" height="12" fill="#4f4f4f"/>
<rect x="672" y="660" width="12" height="12" fill="#515151"/>
<rect x="684" y="660" width="12" height="12" fill="#525252"/>
<rect x="696" y="660" width="12" height="12" fill="#545454"/>
<rect x="708" y="660" width="12" height="12" fill="#555555"/>
<rect x="720" y="660" width="12" height="12" fill="#575757"/>
<rect x="732" y="660" width="12" height="12" fill="#585858"/>
<rect x="744" y="660" width="12" height="12" fill="#595959"/>
<rect x="756" y="660" width="12" height="12" fill="#5b5b5b"/>
<rect x="768" y="660" width="12" height="12" fill="#5c5c5c"/>
<rect x="780" y="660" width="12" height="12" fill="#5d5d5d"/>
<rect x="792" y="660" width="12" height="12" fill="#5e5e5e"/>
<rect x="804" y="660" width="12" height="12" fill="#5e5e5e"/>
<rect x="816" y="660" width="12" height="12" fill="#5f5f5f"/>
<rect x="828" y="660" width="12" height="12" fill="#5f5f5f"/>
<rect x="840" y="660" width="12" height="12" fill="#5f5f5f"/>
<rect x="852" y="660" width="12" height="12" fill="#5f5f5f"/>
<rect x="864" y="660" width="12" height="12" fill="#5f5f5f"/>
<rect x="876" y="660" width="12" height="12" fill="#5f5f5f"/>
<rect x="888" y="660" width="12" height="12" fill="#5f5f5f"/>
<rect x="900" y="660" width="12" height="12" fill="#5f5f5f"/>
<rect x="912" y="660" width="12" height="12" fill="#5e5e5e"/>
<rect x="924" y="660" width="12" height="12" fill="#5d5d5d"/>
<rect x="936" y="660" width="12" height="12" fill="#5c5c5c"/>
<rect x="948" y="660" width="12" height="12" fill="#5a5a5a"/>
<rect x="960" y="660" width="12" height="12" fill="#595959"/>
<rect x="972" y="660" width="12" height="12" fill="#575757"/>
<rect x="984" y="660" width="12" height="12" fill="#555555"/>
<rect x="996" y="660" width="12" height="12" fill="#545454"/>
<rect x="1008" y="660" width="12" height="12" fill="#525252"/>
<rect x="1020" y="660" width="12" height="12" fill="#505050"/>
<rect x="1032" y="660" width="12" height="12" fill="#4f4f4f"/>
<rect x="1044" y="660" width="12" height="12" fill="#4d4d4d"/>
<rect x="1056" y="660" width="12" height="12" fill="#4c4c4c"/>
<rect x="1068" y="660" width="12" height="12" fill="#4a4a4a"/>
<rect x="1080" y="660" width="12" height="12" fill="#494949"/>
<rect x="276" y="672" width="12" height="12" fill="#313131"/>
<rect x="288" y="672" width="12" height="12" fill="#323232"/>
<rect x="300" y="672" width="12" height="12" fill="#323232"/>
<rect x="312" y="672" width="12" height="12" fill="#323232"/>
<rect x="324" y="672" width="12" height="12" fill="#323232"/>
<rect x="336" y="672" width="12" height="12" fill="#323232"/>
<rect x="348" y="672" width="12" height="12" fill="#333333"/>
<rect x="360" y="672" width="12" height="12" fill="#333333"/>
<rect x="372" y="672" width="12" height="12" fill="#333333"/>
<rect x="384" y="672" width="12" height="12" fill="#333333"/>
<rect x="396" y="672" width="12" height="12" fill="#343434"/>
<rect x="408" y="672" width="12" height="12" fill="#343434"/>
<rect x="420" y="672" width="12" height="12" fill="#343434"/>
<rect x="432" y="672" width="12" height="12" fill="#353535"/>
<rect x="444" y="672" width="12" height="12" fill="#353535"/>
<rect x="456" y="672" width="12" height="12" fill="#363636"/>
<rect x="468" y="672" width="12" height="12" fill="#363636"/>
<rect x="480" y="672" width="12" height="12" fill="#373737"/>
<rect x="492" y="672" width="12" height="12" fill="#383838"/>
<rect x="504" y="672" width="12" height="12" fill="#393939"/>
<rect x="516" y="672" width="12" height="12" fill="#3a3a3a"/>
<rect x="528" y="672" width="12" height="12" fill="#3c3c3c"/>
<rect x="540" y="672" width="12" height="12" fill="#3d3d3d"/>
<rect x="552" y="672" width="12" height="12" fill="#3f3f3f"/>
<rect x="564" y="672" width="12" height="12" fill="#404040"/>
<rect x="576" y="672" width="12" height="12" fill="#424242"/>
<rect x="588" y="672" width="12" height="12" fill="#444444"/>
<rect x="600" y="672" width="12" height="12" fill="#464646"/>
<rect x="612" y="672" width="12" height="12" fill="#474747"/>
<rect x="624" y="672" width="12" height="12" fill="#494949"/>
<rect x="636" y="672" width="12" height="12" fill="#4b4b4b"/>
<rect x="648" y="672" width="12" height="12" fill="#4d4d4d"/>
<rect x="660" y="672" width="12" height="12" fill="#4f4f4f"/>
<rect x="672" y="672" width="12" height="12" fill="#505050"/>
<rect x="684" y="672" width="12" height="12" fill="#525252"/>
<rect x="696" y="672" width="12" height="12" fill="#535353"/>
<rect x="708" y="672" width="12" height="12" fill="#555555"/>
<rect x="720" y="672" width="12" height="12" fill="#565656"/>
<rect x="732" y="672" width="12" height="12" fill="#585858"/>
<rect x="744" y="672" width="12" height="12" fill="#595959"/>
<rect x="756" y="672" width="12" height="12" fill="#5a5a5a"/>
<rect x="768" y="672" width="12" height="12" fill="#5b5b5b"/>
<rect x="780" y="672" width="12" height="12" fill="#5c5c5c"/>
<rect x="792" y="672" width="12" height="12" fill="#5d5d5d"/>
<rect x="804" y="672" width="12" height="12" fill="#5e5e5e"/>
<rect x="816" y="672" width="12" height="12" fill="#5f5f5f"/>
<rect x="828" y="672" width="12" height="12" fill="#5f5f5f"/>
<rect x="840" y="672" width="12" height="12" fill="#5f5f5f"/>
<rect x="852" y="672" width="12" height="12" fill="#5f5f5f"/>
<rect x="864" y="672" width="12" height="12" fill="#5f5f5f"/>
<rect x="876" y="672" width="12" height="12" fill="#5f5f5f"/>
<rect x="888" y="672" width="12" height="12" fill="#5f5f5f"/>
<rect x="900" y="672" width="12" height="12" fill="#5f5f5f"/>
<rect x="912" y="672" width="12" height="12" fill="#5e5e5e"/>
<rect x="924" y="672" width="12" height="12" fill="#5d5d5d"/>
<rect x="936" y="672" width="12" height="12" fill="#5c5c5c"/>
<rect x="948" y="672" width="12" height="12" fill="#5b5b5b"/>
<rect x="960" y="672" width="12" height="12" fill="#595959"/>
<rect x="972" y="672" width="12" height="12" fill="#585858"/>
<rect x="984" y="672" width="12" height="12" fill="#565656"/>
<rect x="996" y="672" width="12" height="12" fill="#555555"/>
<rect x="1008" y="672" width="12" height="12" fill="#535353"/>
<rect x="1020" y="672" width="12" height="12" fill="#515151"/>
<rect x="1032" y="672" width="12" height="12" fill="#505050"/>
<rect x="1044" y="672" width="12" height="12" fill="#4e4e4e"/>
<rect x="1056" y="672" width="12" height="12" fill="#4d4d4d"/>
<rect x="1068" y="672" width="12" height="12" fill="#4b4b4b"/>
<rect x="1080" y="672" width="12" height="12" fill="#4a4a4a"/>
<rect x="276" y="684" width="12" height="12" fill="#313131"/>
<rect x="288" y="684" width="12" height="12" fill="#313131"/>
<rect x="300" y="684" width="12" height="12" fill="#313131"/>
<rect x="312" y="684" width="12" height="12" fill="#323232"/>
<rect x="324" y="684" width="12" height="12" fill="#323232"/>
<rect x="336" y="684" width="12" height="12" fill="#323232"/>
<rect x="348" y="684" width="12" height="12" fill="#323232"/>
<rect x="360" y="684" width="12" height="12" fill="#323232"/>
<rect x="372" y="684" width="12" height="12" fill="#333333"/>
<rect x="384" y="684" width="12" height="12" fill="#333333"/>
<rect x="396" y="684" width="12" height="12" fill="#333333"/>
<rect x="408" y="684" width="12" height="12" fill="#343434"/>
<rect x="420" y="684" width="12" height="12" fill="#343434"/>
<rect x="432" y="684" width="12" height="12" fill="#343434"/>
<rect x="444" y="684" width="12" height="12" fill="#353535"/>
<rect x="456" y="684" width="12" height="12" fill="#363636"/>
<rect x="468" y="684" width="12" height="12" fill="#363636"/>
<rect x="480" y="684" width="12" height="12" fill="#373737"/>
<rect x="492" y="684" width="12" height="12" fill="#383838"/>
<rect x="504" y="684" width="12" height="12" fill="#393939"/>
<rect x="516" y="684" width="12" height="12" fill="#3a3a3a"/>
<rect x="528" y="684" width="12" height="12" fill="#3b3b3b"/>
<rect x="540" y="684" width="12" height="12" fill="#3d3d3d"/>
<rect x="552" y="684" width="12" height="12" fill="#3e3e3e"/>
<rect x="564" y="684" width="12" height="12" fill="#404040"/>
<rect x="576" y="684" width="12" height="12" fill="#424242"/>
<rect x="588" y="684" width="12" height="12" fill="#444444"/>
<rect x="600" y="684" width="12" height="12" fill="#454545"/>
<rect x="612" y="684" width="12" height="12" fill="#474747"/>
<rect x="624" y="684" width="12" height="12" fill="#494949"/>
<rect x="636" y="684" width="12" height="12" fill="#4b4b4b"/>
<rect x="648" y="684" width="12" height="12" fill="#4c4c4c"/>
<rect x="660" y="684" width="12" height="12" fill="#4e4e4e"/>
<rect x="672" y="684" width="12" height="12" fill="#505050"/>
<rect x="684" y="684" width="12" height="12" fill="#515151"/>
<rect x="696" y="684" width="12" height="12" fill="#535353"/>
<rect x="708" y="684" width="12" height="12" fill="#555555"/>
<rect x="720" y="684" width="12" height="12" fill="#565656"/>
<rect x="732" y="684" width="12" height="12" fill="#575757"/>
<rect x="744" y="684" width="12" height="12" fill="#595959"/>
<rect x="756" y="684" width="12" height="12" fill="#5a5a5a"/>
<rect x="768" y="684" width="12" height="12" fill="#5b5b5b"/>
<rect x="780" y="684" width="12" height="12" fill="#5c5c5c"/>
<rect x="792" y="684" width="12" height="12" fill="#5d5d5d"/>
<rect x="804" y="684" width="12" height="12" fill="#5e5e5e"/>
<rect x="816" y="684" width="12" height="12" fill="#5f5f5f"/>
<rect x="828" y="684" width="12" height="12" fill="#5f5f5f"/>
<rect x="840" y="684" width="12" height="12" fill="#5f5f5f"/>
<rect x="852" y="684" width="12" height="12" fill="#5f5f5f"/>
<rect x="864" y="684" width="12" height="12" fill="#5f5f5f"/>
<rect x="876" y="684" width="12" height="12" fill="#5f5f5f"/>
<rect x="888" y="684" width="12" height="12" fill="#5f5f5f"/>
<rect x="900" y="684" width="12" height="12" fill="#5f5f5f"/>
<rect x="912" y="684" width="12" height="12" fill="#5e5e5e"/>
<rect x="924" y="684" width="12" height="12" fill="#5d5d5d"/>
<rect x="936" y="684" width="12" height="12" fill="#5c5c5c"/>
<rect x="948" y="684" width="12" height="12" fill="#5b5b5b"/>
<rect x="960" y="684" width="12" height="12" fill="#5a5a5a"/>
<rect x="972" y="684" width="12" height="12" fill="#595959"/>
<rect x="984" y="684" width="12" height="12" fill="#575757"/>
<rect x="996" y="684" width="12" height="12" fill="#565656"/>
<rect x="1008" y="684" width="12" height="12" fill="#545454"/>
<rect x="1020" y="684" width="12" height="12" fill="#535353"/>
<rect x="1032" y="684" width="12" height="12" fill="#515151"/>
<rect x="1044" y="684" width="12" height="12" fill="#505050"/>
<rect x="1056" y="684" width="12" height="12" fill="#4e4e4e"/>
<rect x="1068" y="684" width="12" height="12" fill="#4d4d4d"/>
<rect x="1080" y="684" width="12" height="12" fill="#4b4b4b"/>
</g></defs>
<use href="#SH" clip-path="url(#landclip)"/>
<path d="M449.8,363.6 456.6,354.8 468.4,346.0 472.3,337.2 479.0,329.4 489.0,328.4 494.8,334.2 492.8,344.0 488.0,350.9 486.0,358.7 487.0,368.5 489.0,378.3 484.0,393.0 479.0,385.1 469.4,378.3 459.6,374.4 450.8,368.5ZM640.0,437.5 648.0,435.0 655.0,430.0 660.0,421.0 670.0,416.0 684.0,412.0 697.0,424.0 704.0,430.0 712.0,424.0 717.0,427.0 724.0,434.0 733.0,435.0 735.0,440.0 731.0,448.5 723.0,451.5 715.0,450.0 704.0,446.0 699.0,451.5 692.0,450.5 684.0,447.0 678.0,443.0 680.0,433.0 672.0,435.0 660.0,435.5 648.0,437.5ZM718.9,412.0 725.4,408.8 738.6,407.7 743.0,408.8 747.3,419.7 744.0,424.1 733.1,421.9 725.4,423.0 720.0,426.3 716.7,421.9 716.7,416.4ZM758.3,414.2 759.4,411.0 769.2,406.6 774.7,412.0 771.0,418.0 769.5,422.0 773.6,435.0 763.8,436.1 762.7,428.5 765.0,420.0 761.0,416.0ZM727.0,457.0 730.0,458.0 737.0,471.0 742.0,481.0 749.0,493.0 751.5,499.5 749.5,500.0 741.0,488.0 734.0,476.0 729.0,466.0 726.5,460.0ZM760.7,454.7 768.5,459.6 778.3,463.5 782.2,466.4 781.0,467.0 776.0,468.0 768.5,466.4 762.6,459.6ZM685.0,385.5 695.0,385.5 702.6,383.0 704.0,379.0 705.0,374.0 710.0,368.0 718.0,368.5 724.0,366.0 718.0,362.5 712.0,363.0 707.0,361.5 706.5,357.0 709.0,350.0 711.5,346.0 706.0,345.5 703.5,350.0 699.5,357.0 698.5,364.0 698.5,370.0 695.0,377.6 690.0,382.0 684.0,381.0ZM730.0,343.8 742.6,345.0 738.0,350.0 732.0,350.0ZM815.0,320.0 819.0,322.0 820.0,340.0 816.0,343.0ZM882.0,395.0 888.0,385.0 894.0,380.0 892.0,384.0 885.0,396.0Z" fill="#1c9de8"/>
<use href="#SH" clip-path="url(#topclip)"/>
<path d="M684.0,411.0 688.0,409.5 696.0,414.0 703.0,421.0 708.0,427.0 705.0,429.0 698.0,425.5 691.5,419.0Z" fill="#1c9de8"/>
<pattern id="grid" patternUnits="userSpaceOnUse" x="633.1" y="392.9" width="15.07" height="15.07"><rect width="1" height="1" fill="#000" opacity="0.3"/></pattern>
<rect x="163" y="58" width="1114" height="838" fill="url(#grid)"/>
<text x="1171" y="87.5" font-family="Liberation Sans" font-size="7.5" font-weight="bold" fill="#e8eef6" textLength="32" lengthAdjust="spacingAndGlyphs"><tspan fill="#7a9fe0">psd</tspan>Graphics</text>
<path d="M1183 90.5Q1195 92 1204 88.5" stroke="#4a6fb0" stroke-width="0.7" fill="none"/>
<g fill="#c8ccd2" opacity="0.75"><rect x="1173.5" y="89.6" width="25.5" height="0.9"/><rect x="1169" y="92.1" width="30" height="0.9"/><rect x="1175" y="94.6" width="24" height="0.9"/></g>
<path fill="#000" d="M891,298h5v5h-5zM872,315h5v5h-5zM899,317h5v5h-5zM908,317h5v5h-5zM906,323h5v5h-5zM902,325h5v5h-5zM907,329h5v5h-5zM886,333h5v5h-5zM916,334h5v5h-5zM910,338h5v5h-5zM916,340h5v5h-5zM922,343h5v5h-5zM916,345h5v5h-5zM925,347h5v5h-5zM911,347h5v5h-5zM907,349h5v5h-5zM903,342h5v5h-5zM891,344h5v5h-5zM907,354h5v5h-5zM918,354h5v5h-5zM927,353h5v5h-5zM937,353h5v5h-5zM942,354h5v5h-5zM938,344h5v5h-5zM947,358h5v5h-5zM952,360h5v5h-5zM956,350h5v5h-5zM984,349h5v5h-5zM986,355h5v5h-5zM940,365h5v5h-5zM946,366h5v5h-5zM951,365h5v5h-5zM902,364h5v5h-5zM893,366h5v5h-5zM900,369h5v5h-5zM907,374h5v5h-5zM911,365h5v5h-5zM916,373h5v5h-5zM920,372h5v5h-5zM930,367h5v5h-5zM921,377h5v5h-5zM903,380h5v5h-5zM908,381h5v5h-5zM915,380h5v5h-5zM911,387h5v5h-5zM921,385h5v5h-5zM907,394h5v5h-5zM924,392h5v5h-5zM968,390h5v5h-5zM964,307h5v5h-5zM775,573h5v5h-5zM780,580h5v5h-5zM771,586h5v5h-5zM747,607h5v5h-5zM768,607h5v5h-5zM1193,458h5v5h-5zM1198,482h5v5h-5zM1141,606h5v5h-5zM1131,581h5v5h-5zM1125,606h5v5h-5zM191,80h5v5h-5zM274,89h5v5h-5zM199,111h5v5h-5zM237,108h5v5h-5zM363,133h5v5h-5zM339,143h5v5h-5zM389,145h5v5h-5zM188,184h5v5h-5zM266,228h5v5h-5zM420,221h5v5h-5zM403,234h5v5h-5zM391,257h5v5h-5zM289,268h5v5h-5zM303,271h5v5h-5zM372,234h5v5h-5zM371,244h5v5h-5zM344,255h5v5h-5zM347,259h5v5h-5zM347,301h5v5h-5zM357,311h5v5h-5zM397,296h5v5h-5zM418,301h5v5h-5zM418,311h5v5h-5zM481,85h5v5h-5zM544,86h5v5h-5zM427,113h5v5h-5zM519,158h5v5h-5zM569,163h5v5h-5zM536,205h5v5h-5zM557,210h5v5h-5zM524,256h5v5h-5zM641,250h5v5h-5zM492,262h5v5h-5zM430,270h5v5h-5zM445,278h5v5h-5zM446,283h5v5h-5zM469,276h5v5h-5zM457,284h5v5h-5zM467,289h5v5h-5zM484,288h5v5h-5zM481,292h5v5h-5zM476,296h5v5h-5zM455,300h5v5h-5zM479,305h5v5h-5zM471,309h5v5h-5zM465,312h5v5h-5zM439,312h5v5h-5zM677,234h5v5h-5zM669,297h5v5h-5zM678,303h5v5h-5zM679,310h5v5h-5zM439,270h5v5h-5zM696,104h5v5h-5zM773,100h5v5h-5zM775,114h5v5h-5zM758,140h5v5h-5zM914,215h5v5h-5zM800,285h5v5h-5zM855,285h5v5h-5zM789,168h5v5h-5zM726,206h5v5h-5zM746,209h5v5h-5zM766,205h5v5h-5zM803,210h5v5h-5zM808,209h5v5h-5zM764,219h5v5h-5zM797,219h5v5h-5zM812,219h5v5h-5zM820,222h5v5h-5zM802,224h5v5h-5zM881,218h5v5h-5zM881,225h5v5h-5zM937,221h5v5h-5zM940,226h5v5h-5zM683,224h5v5h-5zM686,234h5v5h-5zM691,234h5v5h-5zM696,233h5v5h-5zM686,242h5v5h-5zM723,234h5v5h-5zM723,239h5v5h-5zM737,234h5v5h-5zM748,230h5v5h-5zM753,229h5v5h-5zM767,229h5v5h-5zM773,232h5v5h-5zM761,235h5v5h-5zM755,239h5v5h-5zM808,229h5v5h-5zM798,236h5v5h-5zM808,238h5v5h-5zM823,235h5v5h-5zM838,235h5v5h-5zM863,234h5v5h-5zM707,245h5v5h-5zM715,243h5v5h-5zM720,248h5v5h-5zM734,244h5v5h-5zM743,244h5v5h-5zM749,248h5v5h-5zM763,249h5v5h-5zM783,238h5v5h-5zM784,242h5v5h-5zM782,247h5v5h-5zM794,245h5v5h-5zM786,251h5v5h-5zM691,261h5v5h-5zM709,267h5v5h-5zM719,260h5v5h-5zM728,257h5v5h-5zM742,256h5v5h-5zM749,259h5v5h-5zM773,261h5v5h-5zM777,261h5v5h-5zM782,264h5v5h-5zM788,263h5v5h-5zM790,258h5v5h-5zM795,258h5v5h-5zM803,257h5v5h-5zM808,261h5v5h-5zM832,264h5v5h-5zM687,277h5v5h-5zM717,270h5v5h-5zM727,272h5v5h-5zM753,271h5v5h-5zM763,273h5v5h-5zM769,272h5v5h-5zM776,274h5v5h-5zM774,278h5v5h-5zM814,270h5v5h-5zM808,276h5v5h-5zM914,277h5v5h-5zM682,284h5v5h-5zM684,290h5v5h-5zM698,284h5v5h-5zM731,283h5v5h-5zM751,286h5v5h-5zM760,289h5v5h-5zM777,287h5v5h-5zM778,291h5v5h-5zM822,291h5v5h-5zM837,290h5v5h-5zM892,286h5v5h-5zM899,287h5v5h-5zM885,293h5v5h-5zM692,300h5v5h-5zM704,305h5v5h-5zM724,305h5v5h-5zM733,299h5v5h-5zM738,302h5v5h-5zM697,310h5v5h-5zM726,314h5v5h-5zM778,301h5v5h-5zM787,300h5v5h-5zM794,305h5v5h-5zM800,302h5v5h-5zM804,298h5v5h-5zM805,303h5v5h-5zM812,300h5v5h-5zM818,298h5v5h-5zM827,300h5v5h-5zM832,299h5v5h-5zM836,303h5v5h-5zM829,311h5v5h-5zM840,309h5v5h-5zM840,314h5v5h-5zM861,300h5v5h-5zM228,349h5v5h-5zM295,408h5v5h-5zM244,434h5v5h-5zM198,455h5v5h-5zM374,438h5v5h-5zM388,434h5v5h-5zM246,371h5v5h-5zM360,318h5v5h-5zM362,323h5v5h-5zM380,325h5v5h-5zM392,327h5v5h-5zM417,333h5v5h-5zM419,322h5v5h-5zM393,340h5v5h-5zM418,343h5v5h-5zM390,356h5v5h-5zM401,353h5v5h-5zM410,352h5v5h-5zM415,351h5v5h-5zM417,367h5v5h-5zM397,370h5v5h-5zM401,374h5v5h-5zM404,369h5v5h-5zM408,368h5v5h-5zM414,376h5v5h-5zM412,380h5v5h-5zM419,379h5v5h-5zM411,390h5v5h-5zM460,343h5v5h-5zM467,352h5v5h-5zM448,372h5v5h-5zM473,371h5v5h-5zM481,376h5v5h-5zM477,385h5v5h-5zM489,383h5v5h-5zM507,383h5v5h-5zM431,385h5v5h-5zM430,391h5v5h-5zM445,396h5v5h-5zM441,403h5v5h-5zM450,410h5v5h-5zM456,420h5v5h-5zM469,423h5v5h-5zM479,425h5v5h-5zM480,418h5v5h-5zM484,414h5v5h-5zM491,417h5v5h-5zM498,419h5v5h-5zM504,418h5v5h-5zM495,425h5v5h-5zM487,432h5v5h-5zM515,420h5v5h-5zM517,426h5v5h-5zM480,435h5v5h-5zM480,440h5v5h-5zM486,444h5v5h-5zM477,447h5v5h-5zM475,457h5v5h-5zM472,461h5v5h-5zM468,471h5v5h-5zM487,478h5v5h-5zM524,475h5v5h-5zM550,462h5v5h-5zM569,473h5v5h-5zM585,478h5v5h-5zM573,484h5v5h-5zM595,487h5v5h-5zM468,491h5v5h-5zM471,501h5v5h-5zM481,513h5v5h-5zM584,514h5v5h-5zM535,528h5v5h-5zM492,532h5v5h-5zM501,532h5v5h-5zM495,539h5v5h-5zM556,532h5v5h-5zM558,543h5v5h-5zM569,546h5v5h-5zM555,551h5v5h-5zM559,552h5v5h-5zM555,557h5v5h-5zM560,558h5v5h-5zM565,561h5v5h-5zM572,555h5v5h-5zM578,555h5v5h-5zM509,568h5v5h-5zM552,569h5v5h-5zM502,364h5v5h-5zM584,567h5v5h-5zM503,575h5v5h-5zM577,575h5v5h-5zM724,364h5v5h-5zM737,459h5v5h-5zM811,509h5v5h-5zM716,546h5v5h-5zM845,553h5v5h-5zM669,324h5v5h-5zM673,319h5v5h-5zM752,325h5v5h-5zM798,319h5v5h-5zM794,325h5v5h-5zM787,329h5v5h-5zM783,337h5v5h-5zM799,341h5v5h-5zM784,346h5v5h-5zM788,352h5v5h-5zM821,320h5v5h-5zM833,328h5v5h-5zM842,323h5v5h-5zM850,326h5v5h-5zM820,350h5v5h-5zM828,357h5v5h-5zM842,354h5v5h-5zM853,354h5v5h-5zM850,358h5v5h-5zM807,370h5v5h-5zM647,399h5v5h-5zM651,411h5v5h-5zM672,408h5v5h-5zM683,414h5v5h-5zM656,421h5v5h-5zM664,435h5v5h-5zM681,429h5v5h-5zM684,439h5v5h-5zM690,433h5v5h-5zM701,404h5v5h-5zM710,406h5v5h-5zM717,407h5v5h-5zM732,411h5v5h-5zM738,410h5v5h-5zM716,417h5v5h-5zM720,420h5v5h-5zM733,422h5v5h-5zM705,424h5v5h-5zM711,431h5v5h-5zM705,434h5v5h-5zM716,435h5v5h-5zM711,438h5v5h-5zM716,440h5v5h-5zM724,437h5v5h-5zM723,445h5v5h-5zM728,446h5v5h-5zM748,443h5v5h-5zM787,395h5v5h-5zM790,401h5v5h-5zM788,406h5v5h-5zM799,396h5v5h-5zM806,397h5v5h-5zM823,407h5v5h-5zM820,421h5v5h-5zM805,424h5v5h-5zM824,453h5v5h-5zM788,461h5v5h-5zM800,467h5v5h-5zM780,470h5v5h-5zM722,460h5v5h-5zM759,487h5v5h-5zM806,488h5v5h-5zM733,500h5v5h-5zM773,512h5v5h-5zM775,528h5v5h-5zM795,529h5v5h-5zM807,527h5v5h-5zM830,543h5v5h-5zM794,547h5v5h-5zM1076,384h5v5h-5zM969,468h5v5h-5zM1019,478h5v5h-5zM993,512h5v5h-5zM966,519h5v5h-5zM1023,517h5v5h-5zM916,524h5v5h-5zM930,536h5v5h-5zM999,530h5v5h-5zM1008,544h5v5h-5zM996,567h5v5h-5zM1032,604h5v5h-5zM1019,613h5v5h-5zM965,624h5v5h-5zM1096,595h5v5h-5zM1001,392h5v5h-5zM1038,396h5v5h-5zM993,413h5v5h-5zM998,416h5v5h-5zM1044,416h5v5h-5zM1049,426h5v5h-5zM1042,433h5v5h-5zM1052,432h5v5h-5zM1051,436h5v5h-5zM1025,437h5v5h-5zM1031,437h5v5h-5zM986,436h5v5h-5zM985,450h5v5h-5zM980,458h5v5h-5zM1006,462h5v5h-5zM1036,458h5v5h-5zM1027,467h5v5h-5zM993,474h5v5h-5zM986,478h5v5h-5zM999,488h5v5h-5zM999,492h5v5h-5zM1009,492h5v5h-5zM1016,493h5v5h-5zM1023,499h5v5h-5zM1046,505h5v5h-5zM1025,598h5v5h-5zM1089,611h5v5h-5zM1107,623h5v5h-5zM908,407h5v5h-5zM914,405h5v5h-5zM917,412h5v5h-5zM912,417h5v5h-5zM912,424h5v5h-5zM922,432h5v5h-5zM845,635h5v5h-5zM977,680h5v5h-5zM910,744h5v5h-5zM895,776h5v5h-5zM957,802h5v5h-5zM777,790h5v5h-5zM739,795h5v5h-5zM826,807h5v5h-5zM743,826h5v5h-5zM1152,696h5v5h-5zM1203,834h5v5h-5zM1186,648h5v5h-5zM1147,128h5v5h-5zM1204,187h5v5h-5zM987,251h5v5h-5zM1084,283h5v5h-5zM1066,331h5v5h-5zM1087,333h5v5h-5zM1064,366h5v5h-5zM992,239h5v5h-5zM999,258h5v5h-5zM1085,246h5v5h-5zM944,275h5v5h-5zM1066,260h5v5h-5zM1067,269h5v5h-5zM1051,275h5v5h-5zM1070,278h5v5h-5zM1100,275h5v5h-5zM1013,288h5v5h-5zM1022,289h5v5h-5zM1031,288h5v5h-5zM1040,283h5v5h-5zM1043,289h5v5h-5zM1049,290h5v5h-5zM997,298h5v5h-5zM1023,296h5v5h-5zM1030,296h5v5h-5zM1024,301h5v5h-5zM1032,302h5v5h-5zM1056,302h5v5h-5zM1090,300h5v5h-5zM1096,304h5v5h-5zM1092,309h5v5h-5zM1085,312h5v5h-5zM1073,315h5v5h-5zM1000,315h5v5h-5zM1004,316h5v5h-5zM1015,314h5v5h-5zM1017,318h5v5h-5zM1021,319h5v5h-5zM1034,314h5v5h-5zM1027,311h5v5h-5zM1028,316h5v5h-5zM1014,325h5v5h-5zM1020,325h5v5h-5zM1029,325h5v5h-5zM1033,323h5v5h-5zM1039,325h5v5h-5zM1040,330h5v5h-5zM990,331h5v5h-5zM1012,331h5v5h-5zM1017,338h5v5h-5zM995,339h5v5h-5zM999,345h5v5h-5zM1010,347h5v5h-5zM1015,347h5v5h-5zM1025,340h5v5h-5zM1031,341h5v5h-5zM1038,343h5v5h-5zM1034,351h5v5h-5zM1040,355h5v5h-5zM1018,356h5v5h-5zM1007,358h5v5h-5zM1038,359h5v5h-5zM1037,364h5v5h-5zM1016,364h5v5h-5zM1013,369h5v5h-5zM1005,370h5v5h-5zM310,584h5v5h-5zM292,641h5v5h-5zM349,651h5v5h-5zM415,657h5v5h-5zM189,664h5v5h-5zM359,706h5v5h-5zM291,725h5v5h-5zM307,741h5v5h-5zM226,749h5v5h-5zM372,771h5v5h-5zM356,803h5v5h-5zM664,576h5v5h-5zM520,677h5v5h-5zM487,784h5v5h-5zM514,794h5v5h-5zM528,827h5v5h-5zM639,817h5v5h-5zM642,845h5v5h-5zM708,645h5v5h-5zM716,823h5v5h-5zM512,581h5v5h-5zM527,579h5v5h-5zM557,580h5v5h-5zM549,586h5v5h-5zM500,597h5v5h-5zM494,605h5v5h-5zM523,597h5v5h-5zM530,611h5v5h-5zM535,611h5v5h-5zM531,624h5v5h-5z"/>
<path fill="#22a022" d="M192,81h3v3h-3zM275,90h3v3h-3zM200,112h3v3h-3zM238,109h3v3h-3zM364,134h3v3h-3zM340,144h3v3h-3zM390,146h3v3h-3zM189,185h3v3h-3zM267,229h3v3h-3zM421,222h3v3h-3zM404,235h3v3h-3zM392,258h3v3h-3zM290,269h3v3h-3zM304,272h3v3h-3zM482,86h3v3h-3zM545,87h3v3h-3zM428,114h3v3h-3zM520,159h3v3h-3zM570,164h3v3h-3zM537,206h3v3h-3zM558,211h3v3h-3zM525,257h3v3h-3zM642,251h3v3h-3zM229,350h3v3h-3zM296,409h3v3h-3zM245,435h3v3h-3zM199,456h3v3h-3zM375,439h3v3h-3zM389,435h3v3h-3zM503,365h3v3h-3zM585,568h3v3h-3zM504,576h3v3h-3zM578,576h3v3h-3zM311,585h3v3h-3zM293,642h3v3h-3zM350,652h3v3h-3zM416,658h3v3h-3zM190,665h3v3h-3zM360,707h3v3h-3zM292,726h3v3h-3zM308,742h3v3h-3zM227,750h3v3h-3zM373,772h3v3h-3zM357,804h3v3h-3zM665,577h3v3h-3zM521,678h3v3h-3zM488,785h3v3h-3zM515,795h3v3h-3zM529,828h3v3h-3zM640,818h3v3h-3zM643,846h3v3h-3z"/>
<path fill="#ee0000" d="M965,308h3v3h-3zM1194,459h3v3h-3zM1199,483h3v3h-3zM1142,607h3v3h-3zM697,105h3v3h-3zM774,101h3v3h-3zM776,115h3v3h-3zM759,141h3v3h-3zM915,216h3v3h-3zM801,286h3v3h-3zM856,286h3v3h-3zM725,365h3v3h-3zM738,460h3v3h-3zM812,510h3v3h-3zM717,547h3v3h-3zM846,554h3v3h-3zM1077,385h3v3h-3zM970,469h3v3h-3zM1020,479h3v3h-3zM994,513h3v3h-3zM967,520h3v3h-3zM1024,518h3v3h-3zM917,525h3v3h-3zM931,537h3v3h-3zM1000,531h3v3h-3zM1009,545h3v3h-3zM997,568h3v3h-3zM1033,605h3v3h-3zM1020,614h3v3h-3zM966,625h3v3h-3zM1097,596h3v3h-3zM846,636h3v3h-3zM978,681h3v3h-3zM911,745h3v3h-3zM896,777h3v3h-3zM958,803h3v3h-3zM778,791h3v3h-3zM740,796h3v3h-3zM827,808h3v3h-3zM744,827h3v3h-3zM1153,697h3v3h-3zM1204,835h3v3h-3zM1148,129h3v3h-3zM1205,188h3v3h-3zM988,252h3v3h-3zM1085,284h3v3h-3zM1067,332h3v3h-3zM1088,334h3v3h-3zM1065,367h3v3h-3zM709,646h3v3h-3zM717,824h3v3h-3z"/>
<path fill="#3fe3d3" d="M892,299h3v3h-3zM873,316h3v3h-3zM900,318h3v3h-3zM909,318h3v3h-3zM907,324h3v3h-3zM903,326h3v3h-3zM908,330h3v3h-3zM887,334h3v3h-3zM917,335h3v3h-3zM911,339h3v3h-3zM917,341h3v3h-3zM923,344h3v3h-3zM917,346h3v3h-3zM926,348h3v3h-3zM912,348h3v3h-3zM908,350h3v3h-3zM904,343h3v3h-3zM892,345h3v3h-3zM908,355h3v3h-3zM919,355h3v3h-3zM928,354h3v3h-3zM938,354h3v3h-3zM943,355h3v3h-3zM939,345h3v3h-3zM948,359h3v3h-3zM953,361h3v3h-3zM957,351h3v3h-3zM985,350h3v3h-3zM987,356h3v3h-3zM941,366h3v3h-3zM947,367h3v3h-3zM952,366h3v3h-3zM903,365h3v3h-3zM894,367h3v3h-3zM901,370h3v3h-3zM908,375h3v3h-3zM912,366h3v3h-3zM917,374h3v3h-3zM921,373h3v3h-3zM931,368h3v3h-3zM922,378h3v3h-3zM904,381h3v3h-3zM909,382h3v3h-3zM916,381h3v3h-3zM912,388h3v3h-3zM922,386h3v3h-3zM908,395h3v3h-3zM925,393h3v3h-3zM969,391h3v3h-3zM776,574h3v3h-3zM781,581h3v3h-3zM772,587h3v3h-3zM748,608h3v3h-3zM769,608h3v3h-3zM1132,582h3v3h-3zM1126,607h3v3h-3zM373,235h3v3h-3zM372,245h3v3h-3zM345,256h3v3h-3zM348,260h3v3h-3zM348,302h3v3h-3zM358,312h3v3h-3zM398,297h3v3h-3zM419,302h3v3h-3zM419,312h3v3h-3zM493,263h3v3h-3zM431,271h3v3h-3zM446,279h3v3h-3zM447,284h3v3h-3zM470,277h3v3h-3zM458,285h3v3h-3zM468,290h3v3h-3zM485,289h3v3h-3zM482,293h3v3h-3zM477,297h3v3h-3zM456,301h3v3h-3zM480,306h3v3h-3zM472,310h3v3h-3zM466,313h3v3h-3zM440,313h3v3h-3zM678,235h3v3h-3zM670,298h3v3h-3zM679,304h3v3h-3zM680,311h3v3h-3zM790,169h3v3h-3zM727,207h3v3h-3zM747,210h3v3h-3zM767,206h3v3h-3zM804,211h3v3h-3zM809,210h3v3h-3zM765,220h3v3h-3zM798,220h3v3h-3zM813,220h3v3h-3zM821,223h3v3h-3zM803,225h3v3h-3zM882,219h3v3h-3zM882,226h3v3h-3zM938,222h3v3h-3zM941,227h3v3h-3zM684,225h3v3h-3zM687,235h3v3h-3zM692,235h3v3h-3zM697,234h3v3h-3zM687,243h3v3h-3zM724,235h3v3h-3zM724,240h3v3h-3zM738,235h3v3h-3zM749,231h3v3h-3zM754,230h3v3h-3zM768,230h3v3h-3zM774,233h3v3h-3zM762,236h3v3h-3zM756,240h3v3h-3zM809,230h3v3h-3zM799,237h3v3h-3zM809,239h3v3h-3zM824,236h3v3h-3zM839,236h3v3h-3zM864,235h3v3h-3zM708,246h3v3h-3zM716,244h3v3h-3zM721,249h3v3h-3zM735,245h3v3h-3zM744,245h3v3h-3zM750,249h3v3h-3zM764,250h3v3h-3zM784,239h3v3h-3zM785,243h3v3h-3zM783,248h3v3h-3zM795,246h3v3h-3zM787,252h3v3h-3zM692,262h3v3h-3zM710,268h3v3h-3zM720,261h3v3h-3zM729,258h3v3h-3zM743,257h3v3h-3zM750,260h3v3h-3zM774,262h3v3h-3zM778,262h3v3h-3zM783,265h3v3h-3zM789,264h3v3h-3zM791,259h3v3h-3zM796,259h3v3h-3zM804,258h3v3h-3zM809,262h3v3h-3zM833,265h3v3h-3zM688,278h3v3h-3zM718,271h3v3h-3zM728,273h3v3h-3zM754,272h3v3h-3zM764,274h3v3h-3zM770,273h3v3h-3zM777,275h3v3h-3zM775,279h3v3h-3zM815,271h3v3h-3zM809,277h3v3h-3zM915,278h3v3h-3zM683,285h3v3h-3zM685,291h3v3h-3zM699,285h3v3h-3zM732,284h3v3h-3zM752,287h3v3h-3zM761,290h3v3h-3zM778,288h3v3h-3zM779,292h3v3h-3zM823,292h3v3h-3zM838,291h3v3h-3zM893,287h3v3h-3zM900,288h3v3h-3zM886,294h3v3h-3zM693,301h3v3h-3zM705,306h3v3h-3zM725,306h3v3h-3zM734,300h3v3h-3zM739,303h3v3h-3zM698,311h3v3h-3zM727,315h3v3h-3zM779,302h3v3h-3zM788,301h3v3h-3zM795,306h3v3h-3zM801,303h3v3h-3zM805,299h3v3h-3zM806,304h3v3h-3zM813,301h3v3h-3zM819,299h3v3h-3zM828,301h3v3h-3zM833,300h3v3h-3zM837,304h3v3h-3zM830,312h3v3h-3zM841,310h3v3h-3zM841,315h3v3h-3zM862,301h3v3h-3zM247,372h3v3h-3zM361,319h3v3h-3zM363,324h3v3h-3zM381,326h3v3h-3zM393,328h3v3h-3zM418,334h3v3h-3zM420,323h3v3h-3zM394,341h3v3h-3zM419,344h3v3h-3zM391,357h3v3h-3zM402,354h3v3h-3zM411,353h3v3h-3zM416,352h3v3h-3zM418,368h3v3h-3zM398,371h3v3h-3zM402,375h3v3h-3zM405,370h3v3h-3zM409,369h3v3h-3zM415,377h3v3h-3zM413,381h3v3h-3zM420,380h3v3h-3zM412,391h3v3h-3zM461,344h3v3h-3zM468,353h3v3h-3zM449,373h3v3h-3zM474,372h3v3h-3zM482,377h3v3h-3zM478,386h3v3h-3zM490,384h3v3h-3zM508,384h3v3h-3zM432,386h3v3h-3zM431,392h3v3h-3zM446,397h3v3h-3zM442,404h3v3h-3zM451,411h3v3h-3zM457,421h3v3h-3zM470,424h3v3h-3zM480,426h3v3h-3zM481,419h3v3h-3zM485,415h3v3h-3zM492,418h3v3h-3zM499,420h3v3h-3zM505,419h3v3h-3zM496,426h3v3h-3zM488,433h3v3h-3zM516,421h3v3h-3zM518,427h3v3h-3zM481,436h3v3h-3zM481,441h3v3h-3zM487,445h3v3h-3zM478,448h3v3h-3zM476,458h3v3h-3zM473,462h3v3h-3zM469,472h3v3h-3zM488,479h3v3h-3zM525,476h3v3h-3zM551,463h3v3h-3zM570,474h3v3h-3zM586,479h3v3h-3zM574,485h3v3h-3zM596,488h3v3h-3zM469,492h3v3h-3zM472,502h3v3h-3zM482,514h3v3h-3zM585,515h3v3h-3zM536,529h3v3h-3zM493,533h3v3h-3zM502,533h3v3h-3zM496,540h3v3h-3zM557,533h3v3h-3zM559,544h3v3h-3zM570,547h3v3h-3zM556,552h3v3h-3zM560,553h3v3h-3zM556,558h3v3h-3zM561,559h3v3h-3zM566,562h3v3h-3zM573,556h3v3h-3zM579,556h3v3h-3zM510,569h3v3h-3zM553,570h3v3h-3zM670,325h3v3h-3zM674,320h3v3h-3zM753,326h3v3h-3zM799,320h3v3h-3zM795,326h3v3h-3zM788,330h3v3h-3zM784,338h3v3h-3zM800,342h3v3h-3zM785,347h3v3h-3zM789,353h3v3h-3zM822,321h3v3h-3zM834,329h3v3h-3zM843,324h3v3h-3zM851,327h3v3h-3zM821,351h3v3h-3zM829,358h3v3h-3zM843,355h3v3h-3zM854,355h3v3h-3zM851,359h3v3h-3zM808,371h3v3h-3zM648,400h3v3h-3zM652,412h3v3h-3zM673,409h3v3h-3zM684,415h3v3h-3zM657,422h3v3h-3zM665,436h3v3h-3zM682,430h3v3h-3zM685,440h3v3h-3zM691,434h3v3h-3zM702,405h3v3h-3zM711,407h3v3h-3zM718,408h3v3h-3zM733,412h3v3h-3zM739,411h3v3h-3zM717,418h3v3h-3zM721,421h3v3h-3zM734,423h3v3h-3zM706,425h3v3h-3zM712,432h3v3h-3zM706,435h3v3h-3zM717,436h3v3h-3zM712,439h3v3h-3zM717,441h3v3h-3zM725,438h3v3h-3zM724,446h3v3h-3zM729,447h3v3h-3zM749,444h3v3h-3zM788,396h3v3h-3zM791,402h3v3h-3zM789,407h3v3h-3zM800,397h3v3h-3zM807,398h3v3h-3zM824,408h3v3h-3zM821,422h3v3h-3zM806,425h3v3h-3zM825,454h3v3h-3zM789,462h3v3h-3zM801,468h3v3h-3zM781,471h3v3h-3zM723,461h3v3h-3zM760,488h3v3h-3zM807,489h3v3h-3zM734,501h3v3h-3zM774,513h3v3h-3zM776,529h3v3h-3zM796,530h3v3h-3zM808,528h3v3h-3zM831,544h3v3h-3zM795,548h3v3h-3zM1002,393h3v3h-3zM1039,397h3v3h-3zM994,414h3v3h-3zM999,417h3v3h-3zM1045,417h3v3h-3zM1050,427h3v3h-3zM1043,434h3v3h-3zM1053,433h3v3h-3zM1052,437h3v3h-3zM1026,438h3v3h-3zM1032,438h3v3h-3zM987,437h3v3h-3zM986,451h3v3h-3zM981,459h3v3h-3zM1007,463h3v3h-3zM1037,459h3v3h-3zM1028,468h3v3h-3zM994,475h3v3h-3zM987,479h3v3h-3zM1000,489h3v3h-3zM1000,493h3v3h-3zM1010,493h3v3h-3zM1017,494h3v3h-3zM1024,500h3v3h-3zM1047,506h3v3h-3zM1026,599h3v3h-3zM1090,612h3v3h-3zM1108,624h3v3h-3zM909,408h3v3h-3zM915,406h3v3h-3zM918,413h3v3h-3zM913,418h3v3h-3zM913,425h3v3h-3zM923,433h3v3h-3zM1187,649h3v3h-3zM993,240h3v3h-3zM1000,259h3v3h-3zM1086,247h3v3h-3zM945,276h3v3h-3zM1067,261h3v3h-3zM1068,270h3v3h-3zM1052,276h3v3h-3zM1071,279h3v3h-3zM1101,276h3v3h-3zM1014,289h3v3h-3zM1023,290h3v3h-3zM1032,289h3v3h-3zM1041,284h3v3h-3zM1044,290h3v3h-3zM1050,291h3v3h-3zM998,299h3v3h-3zM1024,297h3v3h-3zM1031,297h3v3h-3zM1025,302h3v3h-3zM1033,303h3v3h-3zM1057,303h3v3h-3zM1091,301h3v3h-3zM1097,305h3v3h-3zM1093,310h3v3h-3zM1086,313h3v3h-3zM1074,316h3v3h-3zM1001,316h3v3h-3zM1005,317h3v3h-3zM1016,315h3v3h-3zM1018,319h3v3h-3zM1022,320h3v3h-3zM1035,315h3v3h-3zM1028,312h3v3h-3zM1029,317h3v3h-3zM1015,326h3v3h-3zM1021,326h3v3h-3zM1030,326h3v3h-3zM1034,324h3v3h-3zM1040,326h3v3h-3zM1041,331h3v3h-3zM991,332h3v3h-3zM1013,332h3v3h-3zM1018,339h3v3h-3zM996,340h3v3h-3zM1000,346h3v3h-3zM1011,348h3v3h-3zM1016,348h3v3h-3zM1026,341h3v3h-3zM1032,342h3v3h-3zM1039,344h3v3h-3zM1035,352h3v3h-3zM1041,356h3v3h-3zM1019,357h3v3h-3zM1008,359h3v3h-3zM1039,360h3v3h-3zM1038,365h3v3h-3zM1017,365h3v3h-3zM1014,370h3v3h-3zM1006,371h3v3h-3zM513,582h3v3h-3zM528,580h3v3h-3zM558,581h3v3h-3zM550,587h3v3h-3zM501,598h3v3h-3zM495,606h3v3h-3zM524,598h3v3h-3zM531,612h3v3h-3zM536,612h3v3h-3zM532,625h3v3h-3z"/>
<path fill="#1010e0" d="M440,271h3v3h-3z"/>
</svg>
<div style="position:absolute;left:590.5px;top:490px;width:100px;height:74.5px;background:#000"></div>
<div style="position:absolute;left:591.5px;top:491px;width:98px;height:23.5px;background:linear-gradient(#c8dbf2,#a9c3e6 45%,#7b9fd0)"></div>
<div style="position:absolute;left:591.5px;top:516px;width:98px;height:43px;background:#edeceb"></div>
<div style="position:absolute;left:591.5px;top:560.5px;width:98px;height:3px;background:linear-gradient(#fafafa,#dcdcdc)"></div>
<div style="position:absolute;left:598.5px;top:523px;width:84px;height:28.5px;box-sizing:border-box;border:1px solid #aaa8a4;border-radius:4px;background:linear-gradient(#f6f5f4,#e9e8e6)"></div>
<div style="position:absolute;left:591.5px;top:491px;width:98px;height:23.5px;overflow:hidden">
<div class="t" style="left:0.50px;top:6.20px;font-size:13px;color:#fff;font-weight:bold;transform:scaleX(1.1652);">Please, Wait...</div>
</div>
<div class="t" style="left:619.80px;top:532.30px;font-size:13px;color:#b3b1ad;transform:scaleX(1.0420);">Cancel</div>
</body></html>
